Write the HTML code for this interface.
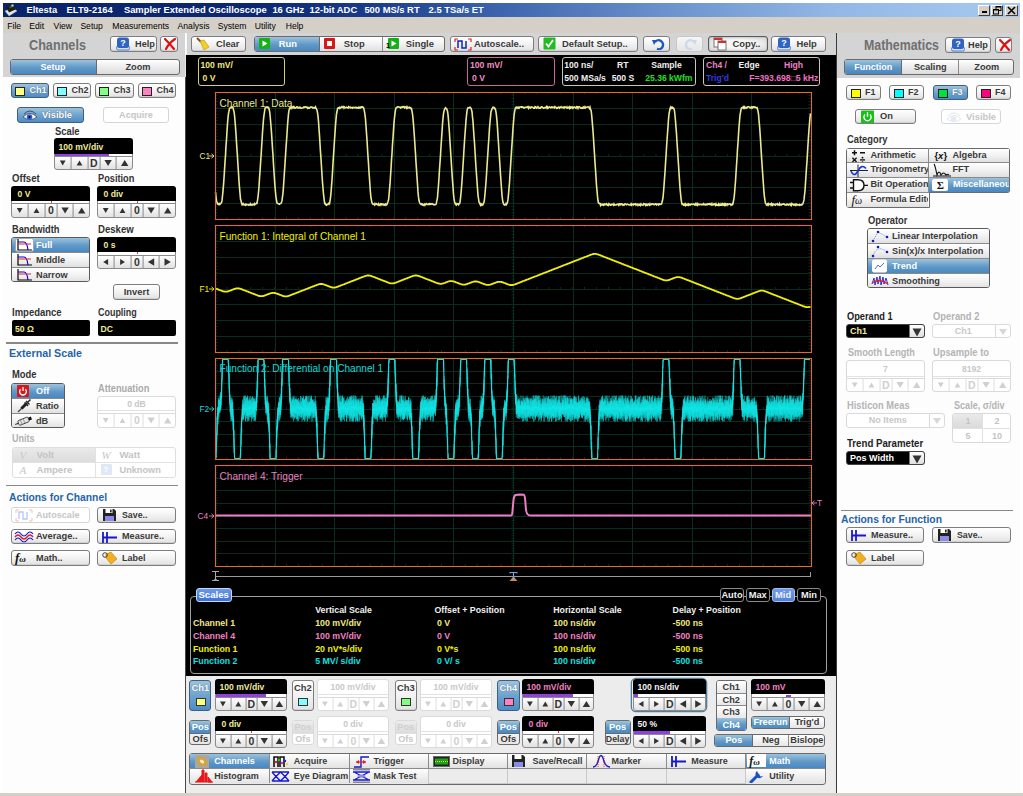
<!DOCTYPE html><html><head><meta charset="utf-8"><style>
*{margin:0;padding:0;box-sizing:content-box}
body{width:1023px;height:796px;overflow:hidden;background:#fff;position:relative;font-family:"Liberation Sans",sans-serif}
div{position:absolute}
.t{white-space:nowrap;line-height:1}
.b,.bs,.bd,.bp{border:1px solid #7d7d7d;border-radius:3px;background:linear-gradient(#ffffff,#f4f4f4 45%,#e2e2e2);overflow:hidden;box-shadow:inset 0 -1px 0 #d0d0d0}
.bs{border-color:#3e5f80;background:linear-gradient(#9cc3dc,#6fa3cf 50%,#4f8dc4);box-shadow:none}
.bs .bl{color:#fff;text-shadow:0 0 1px #456}
.bd{border-color:#d6d6d6;background:#fff;box-shadow:none}
.bd .bl{color:#c6c6c6}
.bp{border-color:#555;box-shadow:0 0 0 1px #bbb}
.bl{white-space:nowrap;font-weight:bold;color:#3a3a3a;position:absolute}
.disp{background:#000;border:1px solid #666;border-radius:3px 3px 0 0}
.dt{font-weight:bold;font-size:8.6px;color:#f2ec9a;white-space:nowrap;position:absolute}
.sp{border:1px solid #8a8a8a;border-top:none;border-radius:0 0 3px 3px;background:linear-gradient(#fff,#e6e6e6);overflow:hidden}
.spc{height:100%;border-right:1px solid #9a9a9a;top:0;text-align:center;color:#3a3a3a}
</style></head><body>
<div style="left:3px;top:3px;width:1017px;height:14px;background:linear-gradient(90deg,#0a246a 0%,#0c2872 25%,#1a3c88 36%,#4068b0 50%,#6a92cc 65%,#94b8e6 82%,#a6caf0 100%)"></div>
<svg style="position:absolute;left:0px;top:0px" width="20" height="18"><path d="M5 11 L13 8 L17 11 L9 16 Z" fill="#e4e8f0" stroke="#9aa" stroke-width="0.5"/><path d="M6 7 L12 5 L15.5 9.5 L9 12.5 Z" fill="#2a1a14"/><path d="M9 6.5 L12 5 L13 7 L10 8.5Z" fill="#1a6a1a"/><rect x="11.5" y="4.5" width="2" height="2" fill="#ddd"/><path d="M6 13 L8 15" stroke="#2a8a2a" stroke-width="1"/></svg>
<div class="t" style="left:26.4px;top:5.40px;font-size:9.4px;font-weight:bold;color:#fff;">Eltesta</div>
<div class="t" style="left:66.6px;top:5.40px;font-size:9.4px;font-weight:bold;color:#fff;">ELT9-2164</div>
<div class="t" style="left:123.9px;top:5.40px;font-size:9.4px;font-weight:bold;color:#fff;">Sampler Extended Oscilloscope</div>
<div class="t" style="left:272.4px;top:5.40px;font-size:9.4px;font-weight:bold;color:#fff;">16 GHz</div>
<div class="t" style="left:309.6px;top:5.40px;font-size:9.4px;font-weight:bold;color:#fff;">12-bit ADC</div>
<div class="t" style="left:364.4px;top:5.40px;font-size:9.4px;font-weight:bold;color:#fff;">500 MS/s RT</div>
<div class="t" style="left:428.6px;top:5.40px;font-size:9.4px;font-weight:bold;color:#fff;">2.5 TSa/s ET</div>
<div style="left:978px;top:5px;width:10px;height:9px;background:#d4d0c8;border:1px solid;border-color:#fff #404040 #404040 #fff"></div>
<div style="left:991px;top:5px;width:10px;height:9px;background:#d4d0c8;border:1px solid;border-color:#fff #404040 #404040 #fff"></div>
<div style="left:1005px;top:5px;width:11px;height:9px;background:#d4d0c8;border:1px solid;border-color:#fff #404040 #404040 #fff"></div>
<div style="left:982px;top:11px;width:5px;height:2px;background:#000"></div>
<svg style="position:absolute;left:993px;top:6px" width="9" height="9"><rect x="3" y="0.5" width="5" height="4" fill="none" stroke="#000" stroke-width="1"/><rect x="0.5" y="3.5" width="5" height="4.5" fill="#d4d0c8" stroke="#000" stroke-width="1"/><rect x="3" y="0" width="5" height="1.5" fill="#000"/><rect x="0" y="3" width="6" height="1.5" fill="#000"/></svg>
<svg style="position:absolute;left:1007px;top:6px" width="9" height="9"><path d="M1 1 L8 8 M8 1 L1 8" stroke="#000" stroke-width="1.6"/></svg>
<div style="left:3px;top:17px;width:1017px;height:16px;background:#d4d0c8"></div>
<div class="t" style="left:7.3px;top:21.70px;font-size:8.6px;font-weight:normal;color:#000;">File</div>
<div class="t" style="left:29.3px;top:21.70px;font-size:8.6px;font-weight:normal;color:#000;">Edit</div>
<div class="t" style="left:53.6px;top:21.70px;font-size:8.6px;font-weight:normal;color:#000;">View</div>
<div class="t" style="left:80.4px;top:21.70px;font-size:8.6px;font-weight:normal;color:#000;">Setup</div>
<div class="t" style="left:112.3px;top:21.70px;font-size:8.6px;font-weight:normal;color:#000;">Measurements</div>
<div class="t" style="left:177.6px;top:21.70px;font-size:8.6px;font-weight:normal;color:#000;">Analysis</div>
<div class="t" style="left:217.8px;top:21.70px;font-size:8.6px;font-weight:normal;color:#000;">System</div>
<div class="t" style="left:254.8px;top:21.70px;font-size:8.6px;font-weight:normal;color:#000;">Utility</div>
<div class="t" style="left:285.7px;top:21.70px;font-size:8.6px;font-weight:normal;color:#000;">Help</div>
<div style="left:0;top:793px;width:1023px;height:3px;background:#d4d0c8"></div>
<div style="left:3px;top:33px;width:182px;height:44px;background:#d4d4d4"></div>
<div style="left:3px;top:77px;width:182px;height:716px;background:#fdfdfd"></div>
<div style="left:185px;top:77px;width:1px;height:716px;background:#484848"></div><div style="left:185px;top:55px;width:1px;height:22px;background:#e4e4e4"></div>
<div class="t" style="left:28.8px;top:37.88px;font-size:14.2px;font-weight:bold;color:#6f6f6f;transform:scaleX(0.892);transform-origin:0 0;">Channels</div>
<div style="left:186px;top:33px;width:651px;height:22px;background:#d4d4d4"></div>
<div style="left:186px;top:33px;width:1px;height:22px;background:#f8f8f8"></div>
<div style="left:837px;top:33px;width:183px;height:45px;background:#d4d4d4"></div>
<div style="left:837px;top:78px;width:183px;height:715px;background:#fdfdfd"></div>
<div style="left:836px;top:33px;width:1px;height:760px;background:#3a3a3a"></div>
<div class="t" style="left:863.8px;top:37.88px;font-size:14.2px;font-weight:bold;color:#6f6f6f;transform:scaleX(0.872);transform-origin:0 0;">Mathematics</div>
<div style="left:186px;top:55px;width:650px;height:621px;background:#000"></div>
<div style="left:186px;top:676px;width:650px;height:117px;background:#ececec"></div>
<div class="b" style="left:110px;top:36px;width:45px;height:14px;"><svg style="position:absolute;left:5px;top:0px" width="15" height="14"><rect x="0.5" y="9" width="13" height="4" rx="1.5" fill="#cfe0f6" stroke="#3a6ac8" stroke-width="0.8"/><rect x="1" y="0.5" width="12" height="10.5" rx="2.5" fill="#2f64c0"/><text x="7" y="8.5" font-family="Liberation Sans" font-weight="bold" font-size="9" fill="#fff" text-anchor="middle">?</text></svg><div class="bl" style="position:absolute;left:24px;top:0;line-height:14px;font-size:9.20px">Help</div></div>
<div class="b" style="left:160px;top:36px;width:16px;height:14px;"><div class="bl" style="line-height:14px;font-size:9.20px;text-align:center;width:100%"><svg style="position:absolute;left:1px;top:0px" width="16" height="14"><path d="M3 2 Q8 7 12 12 M13 2 Q7 6 4 12" stroke="#e01010" stroke-width="2.2" fill="none" stroke-linecap="round"/></svg></div></div>
<div style="left:9.5px;top:59px;width:168px;height:14px;border:1px solid #6a6a6a;border-radius:3px;overflow:hidden;background:linear-gradient(#fff,#ececec 50%,#dcdcdc)"><div style="left:0;top:0;width:85px;height:14px;background:linear-gradient(#9cc3dc,#5f98c8 55%,#4a88c0);border-right:1px solid #6a6a6a"></div><div class="bl" style="left:0;top:0;width:85px;text-align:center;line-height:14px;font-size:9.00px;color:#fff">Setup</div><div class="bl" style="left:86px;top:0;width:83px;text-align:center;line-height:14px;font-size:9.20px">Zoom</div></div>
<div class="bs" style="left:11px;top:83px;width:36px;height:13px;"><div style="left:3px;top:2.5px;width:8px;height:7px;border:1px solid #222;background:#ffff80"></div><div class="bl" style="position:absolute;left:17.5px;top:0;line-height:13px;font-size:9.00px">Ch1</div></div>
<div class="b" style="left:53px;top:83px;width:36px;height:13px;"><div style="left:3px;top:2.5px;width:8px;height:7px;border:1px solid #222;background:#80ffff"></div><div class="bl" style="position:absolute;left:17.5px;top:0;line-height:13px;font-size:9.00px">Ch2</div></div>
<div class="b" style="left:95px;top:83px;width:37px;height:13px;"><div style="left:3px;top:2.5px;width:8px;height:7px;border:1px solid #222;background:#80ff80"></div><div class="bl" style="position:absolute;left:17.5px;top:0;line-height:13px;font-size:9.00px">Ch3</div></div>
<div class="b" style="left:138px;top:83px;width:36px;height:13px;"><div style="left:3px;top:2.5px;width:8px;height:7px;border:1px solid #222;background:#ff80c0"></div><div class="bl" style="position:absolute;left:17.5px;top:0;line-height:13px;font-size:9.00px">Ch4</div></div>
<div class="bs" style="left:17px;top:107px;width:65px;height:14px;"><svg style="position:absolute;left:4px;top:0px" width="16" height="14"><path d="M1 9 Q8 2 15 9 Q8 14 1 9Z" fill="#fff" stroke="#334" stroke-width="0.7"/><circle cx="7.5" cy="9" r="2.8" fill="#2f5fd0"/><circle cx="7.5" cy="9" r="1" fill="#000"/><path d="M2 6 Q8 0 14 6" stroke="#334" stroke-width="0.8" fill="none"/></svg><div class="bl" style="position:absolute;left:24px;top:0;line-height:14px;font-size:9.40px">Visible</div></div>
<div class="bd" style="left:103px;top:107px;width:64px;height:14px;"><div class="bl" style="line-height:14px;font-size:9.10px;text-align:center;width:100%">Acquire</div></div>
<div class="t" style="left:55.3px;top:126.73px;font-size:10.2px;font-weight:bold;color:#333;transform:scaleX(0.923);transform-origin:0 0;">Scale</div>
<div style="left:54px;top:138px;width:79px;height:16px;background:#000;border-radius:3px 3px 0 0"></div>
<div class="dt" style="left:58.5px;top:141.5px;color:#f2ec9a">100 mV/div</div>
<div style="left:54px;top:154px;width:77px;height:3px;background:#fff;border-left:1px solid #8a8a8a;border-right:1px solid #8a8a8a"></div>
<div style="left:55px;top:154px;width:54px;height:2.5px;background:#9040e0"></div>
<div style="left:54px;top:156px;width:77px;height:12px;border:1px solid #8a8a8a;border-radius:0 0 3px 3px;background:linear-gradient(#fff,#f0f0f0 50%,#e2e2e2)"></div>
<svg style="position:absolute;left:54px;top:156px" width="79" height="14"><rect x="16.5" y="1" width="1.2" height="12" fill="#9a9a9a"/><polygon points="5.8,4.5 11.6,4.5 8.7,9.5" fill="#333"/><rect x="33.5" y="1" width="1.2" height="12" fill="#9a9a9a"/><polygon points="22.6,9.5 28.4,9.5 25.5,4.5" fill="#333"/><rect x="45.5" y="1" width="1.2" height="12" fill="#9a9a9a"/><text x="39.8" y="10.8" font-family="Liberation Sans" font-size="10.5" font-weight="bold" text-anchor="middle" fill="#333">D</text><rect x="61.5" y="1" width="1.2" height="12" fill="#9a9a9a"/><polygon points="50.4,3.9 57.8,3.9 54.1,10.1" fill="#333"/><polygon points="67.0,10.1 74.4,10.1 70.7,3.9" fill="#333"/></svg>
<div class="t" style="left:12px;top:174.31px;font-size:10.2px;font-weight:bold;color:#333;transform:scaleX(0.940);transform-origin:0 0;">Offset</div>
<div class="t" style="left:98px;top:174.31px;font-size:10.2px;font-weight:bold;color:#333;transform:scaleX(0.905);transform-origin:0 0;">Position</div>
<div style="left:11px;top:186px;width:79px;height:15px;background:#000;border-radius:3px 3px 0 0"></div>
<div class="dt" style="left:17.5px;top:189.0px;color:#f2ec9a">0 V</div>
<div style="left:11px;top:201px;width:77px;height:3px;background:#fff;border-left:1px solid #8a8a8a;border-right:1px solid #8a8a8a"></div>
<div style="left:51px;top:201px;width:1px;height:2px;background:#e04040"></div>
<div style="left:11px;top:203px;width:77px;height:13px;border:1px solid #8a8a8a;border-radius:0 0 3px 3px;background:linear-gradient(#fff,#f0f0f0 50%,#e2e2e2)"></div>
<svg style="position:absolute;left:11px;top:203px" width="79" height="15"><rect x="16.5" y="1" width="1.2" height="13" fill="#9a9a9a"/><polygon points="5.8,5.0 11.6,5.0 8.7,10.0" fill="#333"/><rect x="33.5" y="1" width="1.2" height="13" fill="#9a9a9a"/><polygon points="22.6,10.0 28.4,10.0 25.5,5.0" fill="#333"/><rect x="45.5" y="1" width="1.2" height="13" fill="#9a9a9a"/><text x="39.8" y="11.3" font-family="Liberation Sans" font-size="10.5" font-weight="bold" text-anchor="middle" fill="#333">0</text><rect x="61.5" y="1" width="1.2" height="13" fill="#9a9a9a"/><polygon points="50.4,4.4 57.8,4.4 54.1,10.6" fill="#333"/><polygon points="67.0,10.6 74.4,10.6 70.7,4.4" fill="#333"/></svg>
<div style="left:97px;top:186px;width:79px;height:15px;background:#000;border-radius:3px 3px 0 0"></div>
<div class="dt" style="left:103.5px;top:189.0px;color:#f2ec9a">0 div</div>
<div style="left:97px;top:201px;width:77px;height:3px;background:#fff;border-left:1px solid #8a8a8a;border-right:1px solid #8a8a8a"></div>
<div style="left:137px;top:201px;width:1px;height:2px;background:#e04040"></div>
<div style="left:97px;top:203px;width:77px;height:13px;border:1px solid #8a8a8a;border-radius:0 0 3px 3px;background:linear-gradient(#fff,#f0f0f0 50%,#e2e2e2)"></div>
<svg style="position:absolute;left:97px;top:203px" width="79" height="15"><rect x="16.5" y="1" width="1.2" height="13" fill="#9a9a9a"/><polygon points="5.8,5.0 11.6,5.0 8.7,10.0" fill="#333"/><rect x="33.5" y="1" width="1.2" height="13" fill="#9a9a9a"/><polygon points="22.6,10.0 28.4,10.0 25.5,5.0" fill="#333"/><rect x="45.5" y="1" width="1.2" height="13" fill="#9a9a9a"/><text x="39.8" y="11.3" font-family="Liberation Sans" font-size="10.5" font-weight="bold" text-anchor="middle" fill="#333">0</text><rect x="61.5" y="1" width="1.2" height="13" fill="#9a9a9a"/><polygon points="50.4,4.4 57.8,4.4 54.1,10.6" fill="#333"/><polygon points="67.0,10.6 74.4,10.6 70.7,4.4" fill="#333"/></svg>
<div class="t" style="left:12px;top:225.17px;font-size:10.2px;font-weight:bold;color:#333;transform:scaleX(0.911);transform-origin:0 0;">Bandwidth</div>
<div class="t" style="left:98px;top:225.17px;font-size:10.2px;font-weight:bold;color:#333;transform:scaleX(0.942);transform-origin:0 0;">Deskew</div>
<div style="left:11px;top:237px;width:77px;height:43.3px;border:1px solid #5a5a5a;border-radius:3px;overflow:hidden;background:#fff"><div style="left:0;top:0px;width:77px;height:14.1px;background:linear-gradient(#9cc3dc,#5f98c8 55%,#4a88c0);border-top:none"><svg style="position:absolute;left:3px;top:0px" width="20" height="14"><rect x="0.5" y="0.5" width="18" height="13" rx="2" fill="#fff" stroke="#9ab"/><path d="M3 1 V12 H17" stroke="#000" stroke-width="1.2" fill="none"/><path d="M3 4 H9 Q12 4 13 12" stroke="#0000e0" stroke-width="1.2" fill="none"/><path d="M3 6 H16" stroke="#e02020" stroke-width="1"/></svg><div class="bl" style="left:24px;top:0;line-height:14.1px;font-size:9.20px;color:#fff">Full</div></div><div style="left:0;top:14.1px;width:77px;height:14.1px;background:linear-gradient(#fff,#f2f2f2 50%,#e0e0e0);border-top:1px solid #8a8a8a"><svg style="position:absolute;left:3px;top:0px" width="20" height="14"><path d="M3 1 V12 H17" stroke="#000" stroke-width="1.2" fill="none"/><path d="M3 4 H9 Q12 4 13 12" stroke="#0000e0" stroke-width="1.2" fill="none"/><path d="M3 6 H16" stroke="#e02020" stroke-width="1"/></svg><div class="bl" style="left:24px;top:0;line-height:14.1px;font-size:9.20px;color:#3a3a3a">Middle</div></div><div style="left:0;top:29.2px;width:77px;height:14.1px;background:linear-gradient(#fff,#f2f2f2 50%,#e0e0e0);border-top:1px solid #8a8a8a"><svg style="position:absolute;left:3px;top:0px" width="20" height="14"><path d="M3 1 V12 H17" stroke="#000" stroke-width="1.2" fill="none"/><path d="M3 4 H9 Q12 4 13 12" stroke="#0000e0" stroke-width="1.2" fill="none"/><path d="M3 6 H16" stroke="#e02020" stroke-width="1"/></svg><div class="bl" style="left:24px;top:0;line-height:14.1px;font-size:9.20px;color:#3a3a3a">Narrow</div></div></div>
<div style="left:97px;top:237px;width:79px;height:15px;background:#000;border-radius:3px 3px 0 0"></div>
<div class="dt" style="left:103.5px;top:240.0px;color:#f2ec9a">0 s</div>
<div style="left:97px;top:252px;width:77px;height:3px;background:#fff;border-left:1px solid #8a8a8a;border-right:1px solid #8a8a8a"></div>
<div style="left:137px;top:252px;width:1px;height:2px;background:#e04040"></div>
<div style="left:97px;top:255px;width:77px;height:12px;border:1px solid #8a8a8a;border-radius:0 0 3px 3px;background:linear-gradient(#fff,#f0f0f0 50%,#e2e2e2)"></div>
<svg style="position:absolute;left:97px;top:255px" width="79" height="14"><rect x="16.5" y="1" width="1.2" height="12" fill="#9a9a9a"/><polygon points="11.1,4.1 11.1,9.9 6.2,7.0" fill="#333"/><rect x="33.5" y="1" width="1.2" height="12" fill="#9a9a9a"/><polygon points="23.1,4.1 23.1,9.9 28.0,7.0" fill="#333"/><rect x="45.5" y="1" width="1.2" height="12" fill="#9a9a9a"/><text x="39.8" y="10.8" font-family="Liberation Sans" font-size="10.5" font-weight="bold" text-anchor="middle" fill="#333">0</text><rect x="61.5" y="1" width="1.2" height="12" fill="#9a9a9a"/><polygon points="57.2,3.3 57.2,10.7 50.9,7.0" fill="#333"/><polygon points="67.5,3.3 67.5,10.7 73.8,7.0" fill="#333"/></svg>
<div class="b" style="left:113px;top:284px;width:45px;height:14px;"><div class="bl" style="line-height:14px;font-size:9.40px;text-align:center;width:100%">Invert</div></div>
<div class="t" style="left:12px;top:308.27px;font-size:10.2px;font-weight:bold;color:#333;transform:scaleX(0.933);transform-origin:0 0;">Impedance</div>
<div class="t" style="left:98px;top:308.27px;font-size:10.2px;font-weight:bold;color:#333;transform:scaleX(0.878);transform-origin:0 0;">Coupling</div>
<div style="left:11.5px;top:320.3px;width:78.5px;height:15.5px;background:#000;border-radius:2px"></div>
<div class="dt" style="left:15px;top:323.5px">50 Ω</div>
<div style="left:97.5px;top:320.3px;width:78.5px;height:15.5px;background:#000;border-radius:2px"></div>
<div class="dt" style="left:100.5px;top:323.5px">DC</div>
<div style="left:6.4px;top:342px;width:172px;height:1.5px;background:#888"></div>
<div class="t" style="left:9px;top:347.69px;font-size:11px;font-weight:bold;color:#1f64aa;transform:scaleX(0.971);transform-origin:0 0;">External Scale</div>
<div class="t" style="left:12px;top:370.23px;font-size:10.2px;font-weight:bold;color:#333;transform:scaleX(0.920);transform-origin:0 0;">Mode</div>
<div style="left:11px;top:383px;width:52px;height:43.3px;border:1px solid #5a5a5a;border-radius:3px;overflow:hidden;background:#fff"><div style="left:0;top:0px;width:52px;height:14.1px;background:linear-gradient(#9cc3dc,#5f98c8 55%,#4a88c0);border-top:none"><svg style="position:absolute;left:5px;top:1px" width="13" height="13"><rect x="0" y="0" width="12" height="12" rx="1" fill="#d81818"/><path d="M3.6 4.2 A3.4 3.4 0 1 0 8.4 4.2" stroke="#fff" stroke-width="1.3" fill="none"/><path d="M6 2 V6" stroke="#fff" stroke-width="1.3"/></svg><div class="bl" style="left:24px;top:0;line-height:14.1px;font-size:9.20px;color:#fff">Off</div></div><div style="left:0;top:14.1px;width:52px;height:14.1px;background:linear-gradient(#fff,#f2f2f2 50%,#e0e0e0);border-top:1px solid #8a8a8a"><svg style="position:absolute;left:4px;top:0px" width="16" height="14"><path d="M2 13 L6 9" stroke="#444" stroke-width="1.3"/><path d="M5.5 9.5 L11 4" stroke="#222" stroke-width="3"/><path d="M8.5 3.5 L12 7 M10 2 L13.5 5.5" stroke="#222" stroke-width="1.3"/><path d="M11.5 3.5 L14.5 0.5" stroke="#333" stroke-width="1.6"/></svg><div class="bl" style="left:24px;top:0;line-height:14.1px;font-size:9.20px;color:#3a3a3a">Ratio</div></div><div style="left:0;top:29.2px;width:52px;height:14.1px;background:linear-gradient(#fff,#f2f2f2 50%,#e0e0e0);border-top:1px solid #8a8a8a"><svg style="position:absolute;left:2px;top:0px" width="20" height="14"><g transform="rotate(-22 10 7)"><rect x="4" y="4.5" width="11" height="5" rx="1.2" fill="#e4e4e4" stroke="#333" stroke-width="0.8"/><rect x="15" y="5.5" width="3" height="3" fill="#111"/><path d="M0.5 7 H4" stroke="#333" stroke-width="1"/><path d="M7 4.5 V9.5 M10 4.5 V9.5" stroke="#777" stroke-width="0.6"/></g></svg><div class="bl" style="left:24px;top:0;line-height:14.1px;font-size:9.20px;color:#3a3a3a">dB</div></div></div>
<div class="t" style="left:98px;top:384.06px;font-size:10.2px;font-weight:bold;color:#aaa;transform:scaleX(0.906);transform-origin:0 0;">Attenuation</div>
<div style="left:97px;top:396px;width:77px;height:16px;border:1px solid #dadada;border-radius:3px 3px 0 0;background:#fff"></div>
<div class="dt" style="left:97px;width:79px;text-align:center;top:398.5px;color:#c8c8c8">0 dB</div>
<div style="left:98px;top:410px;width:77px;height:1px;background:#e2e2e2"></div>
<div style="left:97px;top:413px;width:77px;height:13px;border:1px solid #dadada;border-radius:0 0 3px 3px;background:#fff"></div>
<svg style="position:absolute;left:97px;top:413px" width="79" height="15"><rect x="16.5" y="1" width="1.2" height="13" fill="#e4e4e4"/><polygon points="5.8,5.0 11.6,5.0 8.7,10.0" fill="#d0d0d0"/><rect x="33.5" y="1" width="1.2" height="13" fill="#e4e4e4"/><polygon points="22.6,10.0 28.4,10.0 25.5,5.0" fill="#d0d0d0"/><rect x="45.5" y="1" width="1.2" height="13" fill="#e4e4e4"/><text x="39.8" y="11.3" font-family="Liberation Sans" font-size="10.5" font-weight="bold" text-anchor="middle" fill="#d0d0d0">0</text><rect x="61.5" y="1" width="1.2" height="13" fill="#e4e4e4"/><polygon points="50.4,4.4 57.8,4.4 54.1,10.6" fill="#d0d0d0"/><polygon points="67.0,10.6 74.4,10.6 70.7,4.4" fill="#d0d0d0"/></svg>
<div class="t" style="left:12px;top:434.39px;font-size:10.2px;font-weight:bold;color:#b0b0b0;transform:scaleX(0.882);transform-origin:0 0;">Units</div>
<div style="left:11.5px;top:446.6px;width:162.5px;height:29px;border:1px solid #dedede;border-radius:3px;background:#fff;overflow:hidden"><div style="left:0;top:0;width:82px;height:14.5px;background:linear-gradient(#eaeaea,#dcdcdc)"></div><div style="left:82px;top:0;width:1px;height:29px;background:#e2e2e2"></div><div style="left:0;top:14.5px;width:163px;height:1px;background:#e2e2e2"></div><div style="left:7px;top:1px;font:italic 11px 'Liberation Serif';color:#c8c8c8">V</div><div class="bl" style="left:24px;top:0;line-height:14.5px;font-size:9.70px;color:#c4c4c4">Volt</div><div style="left:89px;top:1px;font:italic 11px 'Liberation Serif';color:#c8c8c8">W</div><div class="bl" style="left:107px;top:0;line-height:14.5px;font-size:9.70px;color:#c4c4c4">Watt</div><div style="left:7px;top:16px;font:italic 11px 'Liberation Serif';color:#c8c8c8">A</div><div class="bl" style="left:24px;top:15px;line-height:14px;font-size:9.60px;color:#c4c4c4">Ampere</div><div style="left:88px;top:16.5px;width:11px;height:11px;background:#dfe8f6;border-radius:1px;color:#fff;font:bold 8px 'Liberation Sans';text-align:center;line-height:11px">?</div><div class="bl" style="left:107px;top:15px;line-height:14px;font-size:9.20px;color:#c4c4c4">Unknown</div></div>
<div style="left:6.4px;top:484.5px;width:172px;height:1.5px;background:#888"></div>
<div class="t" style="left:9px;top:491.79px;font-size:11px;font-weight:bold;color:#1f64aa;transform:scaleX(0.938);transform-origin:0 0;">Actions for Channel</div>
<div class="bd" style="left:11px;top:507px;width:77px;height:14px;"><svg style="position:absolute;left:3px;top:1px" width="18" height="13"><path d="M4 10 V3 H8 V10 H12 V3" stroke="#b8c8f0" stroke-width="1.3" fill="none"/><path d="M1 4 V1 H4 M14 1 H17 V4 M1 9 V12 H4 M14 12 H17 V9" stroke="#f4c0b0" stroke-width="1" fill="none"/></svg><div class="bl" style="position:absolute;left:24px;top:0;line-height:14px;font-size:9.10px">Autoscale</div></div>
<div class="b" style="left:97px;top:507px;width:77px;height:14px;"><svg style="position:absolute;left:4px;top:0px" width="15" height="14"><path d="M1 1 H12 L14 3 V13 H1Z" fill="#222"/><rect x="3.5" y="1" width="7" height="4" fill="#fff"/><rect x="8" y="1.6" width="1.6" height="2.8" fill="#222"/><rect x="3" y="8" width="9" height="5" fill="#8a8ae8"/></svg><div class="bl" style="position:absolute;left:24px;top:0;line-height:14px;font-size:8.80px">Save..</div></div>
<div class="b" style="left:11px;top:529px;width:77px;height:13px;"><svg style="position:absolute;left:2px;top:0px" width="20" height="14"><path d="M1 4 Q4 0 7 4 T13 4 T19 4" stroke="#1020e0" stroke-width="1.2" fill="none"/><path d="M1 7 Q4 3 7 7 T13 7 T19 7" stroke="#e02020" stroke-width="1.4" fill="none"/><path d="M1 10 Q4 6 7 10 T13 10 T19 10" stroke="#1020e0" stroke-width="1.2" fill="none"/></svg><div class="bl" style="position:absolute;left:24px;top:0;line-height:13px;font-size:9.30px">Average..</div></div>
<div class="b" style="left:97px;top:529px;width:77px;height:13px;"><svg style="position:absolute;left:3px;top:1px" width="18" height="13"><path d="M2 1 V12 M6 1 V12 M2 6.5 H16" stroke="#1818c8" stroke-width="1.8" fill="none"/></svg><div class="bl" style="position:absolute;left:24px;top:0;line-height:13px;font-size:9.10px">Measure..</div></div>
<div class="b" style="left:11px;top:550px;width:77px;height:14px;"><div style="left:3px;top:-1px;font:italic bold 13px 'Liberation Serif';color:#111">f<span style="font-size:9px;font-style:italic">ω</span></div><div class="bl" style="position:absolute;left:24px;top:0;line-height:14px;font-size:9.20px">Math..</div></div>
<div class="b" style="left:97px;top:550px;width:77px;height:14px;"><svg style="position:absolute;left:3px;top:0px" width="18" height="14"><path d="M5 3 L10 1 L16 8 L10 13 L5 7Z" fill="#f0b020" stroke="#c08010" stroke-width="0.6"/><circle cx="4" cy="4" r="2.3" fill="none" stroke="#333" stroke-width="0.9"/></svg><div class="bl" style="position:absolute;left:24px;top:0;line-height:14px;font-size:9.00px">Label</div></div>
<div class="b" style="left:191px;top:36px;width:53px;height:14px;"><svg style="position:absolute;left:3px;top:0px" width="16" height="14"><path d="M2 1 L6 5" stroke="#8a4a10" stroke-width="2"/><path d="M5 4 L9 3 L14 10 L9 13 Z" fill="#f0d020" stroke="#c09010" stroke-width="0.6"/></svg><div class="bl" style="position:absolute;left:24px;top:0;line-height:14px;font-size:9.40px">Clear</div></div>
<div style="left:253.8px;top:36px;width:189px;height:14px;border:1px solid #6a6a6a;border-radius:3px;overflow:hidden;background:linear-gradient(#fff,#f2f2f2 50%,#e0e0e0)"><div style="left:0;top:0;width:64px;height:14px;background:linear-gradient(#9cc3dc,#5f98c8 55%,#4a88c0);border-right:1px solid #6a6a6a"></div><div style="left:127px;top:0;width:1px;height:14px;background:#8a8a8a"></div><svg style="position:absolute;left:4px;top:1px" width="12" height="11"><rect width="11" height="11" rx="1" fill="#18b018"/><path d="M3.5 2.5 L8.5 5.5 L3.5 8.5Z" fill="#fff"/></svg><div class="bl" style="left:24px;top:0;line-height:14px;font-size:9.40px;color:#fff">Run</div><svg style="position:absolute;left:69px;top:1px" width="12" height="11"><rect width="11" height="11" rx="1" fill="#d81818"/><rect x="3" y="3" width="5" height="5" fill="#fff"/></svg><div class="bl" style="left:89px;top:0;line-height:14px;font-size:9.40px">Stop</div><svg style="position:absolute;left:131px;top:1px" width="13" height="11"><rect x="2" width="11" height="11" rx="1" fill="#18b018"/><path d="M5.5 2.5 L10.5 5.5 L5.5 8.5Z" fill="#fff"/><text x="0" y="10" font-size="7" font-family="Liberation Sans" font-weight="bold" fill="#000">1</text></svg><div class="bl" style="left:151px;top:0;line-height:14px;font-size:9.40px">Single</div></div>
<div class="b" style="left:450px;top:36px;width:82px;height:14px;"><svg style="position:absolute;left:3px;top:1px" width="18" height="13"><path d="M4 10 V3 H8 V10 H12 V3" stroke="#1020d0" stroke-width="1.5" fill="none"/><path d="M1 4 V1 H4 M14 1 H17 V4 M1 9 V12 H4 M14 12 H17 V9" stroke="#e02020" stroke-width="1.2" fill="none"/></svg><div class="bl" style="position:absolute;left:23px;top:0;line-height:14px;font-size:9.40px">Autoscale..</div></div>
<div class="b" style="left:538px;top:36px;width:98px;height:14px;"><svg style="position:absolute;left:4px;top:0px" width="14" height="14"><rect x="0.5" y="0.5" width="12" height="12" rx="1" fill="#22bb22"/><path d="M3 6.5 L5.5 9.5 L10 3" stroke="#fff" stroke-width="1.8" fill="none"/></svg><div class="bl" style="position:absolute;left:23px;top:0;line-height:14px;font-size:9.40px">Default Setup..</div></div>
<div class="b" style="left:643px;top:36px;width:25px;height:14px;"><div class="bl" style="line-height:14px;font-size:9.20px;text-align:center;width:100%"><svg style="position:absolute;left:7px;top:1px" width="14" height="12"><path d="M4 4 A4.5 4.5 0 1 1 6 11" stroke="#1a58c8" stroke-width="2.4" fill="none"/><path d="M1 2 L6 2 L3 7Z" fill="#1a58c8"/></svg></div></div>
<div class="bd" style="left:676px;top:36px;width:25px;height:14px;border-color:#c8c8c8;background:linear-gradient(#f6f6f6,#e6e6e6)"><div class="bl" style="line-height:14px;font-size:9.20px;text-align:center;width:100%"><svg style="position:absolute;left:7px;top:1px" width="14" height="12"><path d="M10 4 A4.5 4.5 0 1 0 8 11" stroke="#cdd8ea" stroke-width="2.4" fill="none"/><path d="M13 2 L8 2 L11 7Z" fill="#cdd8ea"/></svg></div></div>
<div class="bp" style="left:708px;top:36px;width:58px;height:14px;border-color:#5a5a5a;background:radial-gradient(ellipse at center,#f8f8f8 35%,#d4d4d4 100%);box-shadow:inset 0 0 2px #999"><svg style="position:absolute;left:4px;top:0px" width="14" height="14"><rect x="1" y="1" width="8" height="9" fill="#fff" stroke="#555" stroke-width="0.8"/><rect x="1" y="1" width="8" height="2" fill="#d03030"/><rect x="5" y="4" width="8" height="9" fill="#fff" stroke="#555" stroke-width="0.8"/><rect x="5" y="4" width="8" height="2" fill="#d03030"/></svg><div class="bl" style="position:absolute;left:23.5px;top:0;line-height:14px;font-size:9.40px">Copy..</div></div>
<div class="b" style="left:771px;top:36px;width:53px;height:14px;"><svg style="position:absolute;left:5px;top:0px" width="15" height="14"><rect x="0.5" y="9" width="13" height="4" rx="1.5" fill="#cfe0f6" stroke="#3a6ac8" stroke-width="0.8"/><rect x="1" y="0.5" width="12" height="10.5" rx="2.5" fill="#2f64c0"/><text x="7" y="8.5" font-family="Liberation Sans" font-weight="bold" font-size="9" fill="#fff" text-anchor="middle">?</text></svg><div class="bl" style="position:absolute;left:24.5px;top:0;line-height:14px;font-size:9.40px">Help</div></div>
<svg style="position:absolute;left:186px;top:55px" width="650" height="621" viewBox="186 55 650 621"><line x1="275.5" y1="92" x2="275.5" y2="219" stroke="#082c1e" stroke-width="1"/><line x1="334.5" y1="92" x2="334.5" y2="219" stroke="#082c1e" stroke-width="1"/><line x1="394.5" y1="92" x2="394.5" y2="219" stroke="#082c1e" stroke-width="1"/><line x1="453.5" y1="92" x2="453.5" y2="219" stroke="#082c1e" stroke-width="1"/><line x1="513.5" y1="92" x2="513.5" y2="219" stroke="#082c1e" stroke-width="1"/><line x1="573.5" y1="92" x2="573.5" y2="219" stroke="#082c1e" stroke-width="1"/><line x1="632.5" y1="92" x2="632.5" y2="219" stroke="#082c1e" stroke-width="1"/><line x1="692.5" y1="92" x2="692.5" y2="219" stroke="#082c1e" stroke-width="1"/><line x1="751.5" y1="92" x2="751.5" y2="219" stroke="#082c1e" stroke-width="1"/><line x1="215" y1="108.5" x2="811" y2="108.5" stroke="#082c1e" stroke-width="1"/><line x1="215" y1="124.5" x2="811" y2="124.5" stroke="#082c1e" stroke-width="1"/><line x1="215" y1="140.5" x2="811" y2="140.5" stroke="#082c1e" stroke-width="1"/><line x1="215" y1="156.5" x2="811" y2="156.5" stroke="#082c1e" stroke-width="1"/><line x1="215" y1="171.5" x2="811" y2="171.5" stroke="#082c1e" stroke-width="1"/><line x1="215" y1="187.5" x2="811" y2="187.5" stroke="#082c1e" stroke-width="1"/><line x1="215" y1="203.5" x2="811" y2="203.5" stroke="#082c1e" stroke-width="1"/><line x1="226.9" y1="154.0" x2="226.9" y2="157.0" stroke="#082c1e" stroke-width="1"/><line x1="226.9" y1="92" x2="226.9" y2="94" stroke="#082c1e" stroke-width="1"/><line x1="226.9" y1="217" x2="226.9" y2="219" stroke="#082c1e" stroke-width="1"/><line x1="238.8" y1="154.0" x2="238.8" y2="157.0" stroke="#082c1e" stroke-width="1"/><line x1="238.8" y1="92" x2="238.8" y2="94" stroke="#082c1e" stroke-width="1"/><line x1="238.8" y1="217" x2="238.8" y2="219" stroke="#082c1e" stroke-width="1"/><line x1="250.8" y1="154.0" x2="250.8" y2="157.0" stroke="#082c1e" stroke-width="1"/><line x1="250.8" y1="92" x2="250.8" y2="94" stroke="#082c1e" stroke-width="1"/><line x1="250.8" y1="217" x2="250.8" y2="219" stroke="#082c1e" stroke-width="1"/><line x1="262.7" y1="154.0" x2="262.7" y2="157.0" stroke="#082c1e" stroke-width="1"/><line x1="262.7" y1="92" x2="262.7" y2="94" stroke="#082c1e" stroke-width="1"/><line x1="262.7" y1="217" x2="262.7" y2="219" stroke="#082c1e" stroke-width="1"/><line x1="274.6" y1="154.0" x2="274.6" y2="157.0" stroke="#082c1e" stroke-width="1"/><line x1="274.6" y1="92" x2="274.6" y2="94" stroke="#082c1e" stroke-width="1"/><line x1="274.6" y1="217" x2="274.6" y2="219" stroke="#082c1e" stroke-width="1"/><line x1="286.5" y1="154.0" x2="286.5" y2="157.0" stroke="#082c1e" stroke-width="1"/><line x1="286.5" y1="92" x2="286.5" y2="94" stroke="#082c1e" stroke-width="1"/><line x1="286.5" y1="217" x2="286.5" y2="219" stroke="#082c1e" stroke-width="1"/><line x1="298.4" y1="154.0" x2="298.4" y2="157.0" stroke="#082c1e" stroke-width="1"/><line x1="298.4" y1="92" x2="298.4" y2="94" stroke="#082c1e" stroke-width="1"/><line x1="298.4" y1="217" x2="298.4" y2="219" stroke="#082c1e" stroke-width="1"/><line x1="310.4" y1="154.0" x2="310.4" y2="157.0" stroke="#082c1e" stroke-width="1"/><line x1="310.4" y1="92" x2="310.4" y2="94" stroke="#082c1e" stroke-width="1"/><line x1="310.4" y1="217" x2="310.4" y2="219" stroke="#082c1e" stroke-width="1"/><line x1="322.3" y1="154.0" x2="322.3" y2="157.0" stroke="#082c1e" stroke-width="1"/><line x1="322.3" y1="92" x2="322.3" y2="94" stroke="#082c1e" stroke-width="1"/><line x1="322.3" y1="217" x2="322.3" y2="219" stroke="#082c1e" stroke-width="1"/><line x1="334.2" y1="154.0" x2="334.2" y2="157.0" stroke="#082c1e" stroke-width="1"/><line x1="334.2" y1="92" x2="334.2" y2="94" stroke="#082c1e" stroke-width="1"/><line x1="334.2" y1="217" x2="334.2" y2="219" stroke="#082c1e" stroke-width="1"/><line x1="346.1" y1="154.0" x2="346.1" y2="157.0" stroke="#082c1e" stroke-width="1"/><line x1="346.1" y1="92" x2="346.1" y2="94" stroke="#082c1e" stroke-width="1"/><line x1="346.1" y1="217" x2="346.1" y2="219" stroke="#082c1e" stroke-width="1"/><line x1="358.0" y1="154.0" x2="358.0" y2="157.0" stroke="#082c1e" stroke-width="1"/><line x1="358.0" y1="92" x2="358.0" y2="94" stroke="#082c1e" stroke-width="1"/><line x1="358.0" y1="217" x2="358.0" y2="219" stroke="#082c1e" stroke-width="1"/><line x1="370.0" y1="154.0" x2="370.0" y2="157.0" stroke="#082c1e" stroke-width="1"/><line x1="370.0" y1="92" x2="370.0" y2="94" stroke="#082c1e" stroke-width="1"/><line x1="370.0" y1="217" x2="370.0" y2="219" stroke="#082c1e" stroke-width="1"/><line x1="381.9" y1="154.0" x2="381.9" y2="157.0" stroke="#082c1e" stroke-width="1"/><line x1="381.9" y1="92" x2="381.9" y2="94" stroke="#082c1e" stroke-width="1"/><line x1="381.9" y1="217" x2="381.9" y2="219" stroke="#082c1e" stroke-width="1"/><line x1="393.8" y1="154.0" x2="393.8" y2="157.0" stroke="#082c1e" stroke-width="1"/><line x1="393.8" y1="92" x2="393.8" y2="94" stroke="#082c1e" stroke-width="1"/><line x1="393.8" y1="217" x2="393.8" y2="219" stroke="#082c1e" stroke-width="1"/><line x1="405.7" y1="154.0" x2="405.7" y2="157.0" stroke="#082c1e" stroke-width="1"/><line x1="405.7" y1="92" x2="405.7" y2="94" stroke="#082c1e" stroke-width="1"/><line x1="405.7" y1="217" x2="405.7" y2="219" stroke="#082c1e" stroke-width="1"/><line x1="417.6" y1="154.0" x2="417.6" y2="157.0" stroke="#082c1e" stroke-width="1"/><line x1="417.6" y1="92" x2="417.6" y2="94" stroke="#082c1e" stroke-width="1"/><line x1="417.6" y1="217" x2="417.6" y2="219" stroke="#082c1e" stroke-width="1"/><line x1="429.6" y1="154.0" x2="429.6" y2="157.0" stroke="#082c1e" stroke-width="1"/><line x1="429.6" y1="92" x2="429.6" y2="94" stroke="#082c1e" stroke-width="1"/><line x1="429.6" y1="217" x2="429.6" y2="219" stroke="#082c1e" stroke-width="1"/><line x1="441.5" y1="154.0" x2="441.5" y2="157.0" stroke="#082c1e" stroke-width="1"/><line x1="441.5" y1="92" x2="441.5" y2="94" stroke="#082c1e" stroke-width="1"/><line x1="441.5" y1="217" x2="441.5" y2="219" stroke="#082c1e" stroke-width="1"/><line x1="453.4" y1="154.0" x2="453.4" y2="157.0" stroke="#082c1e" stroke-width="1"/><line x1="453.4" y1="92" x2="453.4" y2="94" stroke="#082c1e" stroke-width="1"/><line x1="453.4" y1="217" x2="453.4" y2="219" stroke="#082c1e" stroke-width="1"/><line x1="465.3" y1="154.0" x2="465.3" y2="157.0" stroke="#082c1e" stroke-width="1"/><line x1="465.3" y1="92" x2="465.3" y2="94" stroke="#082c1e" stroke-width="1"/><line x1="465.3" y1="217" x2="465.3" y2="219" stroke="#082c1e" stroke-width="1"/><line x1="477.2" y1="154.0" x2="477.2" y2="157.0" stroke="#082c1e" stroke-width="1"/><line x1="477.2" y1="92" x2="477.2" y2="94" stroke="#082c1e" stroke-width="1"/><line x1="477.2" y1="217" x2="477.2" y2="219" stroke="#082c1e" stroke-width="1"/><line x1="489.2" y1="154.0" x2="489.2" y2="157.0" stroke="#082c1e" stroke-width="1"/><line x1="489.2" y1="92" x2="489.2" y2="94" stroke="#082c1e" stroke-width="1"/><line x1="489.2" y1="217" x2="489.2" y2="219" stroke="#082c1e" stroke-width="1"/><line x1="501.1" y1="154.0" x2="501.1" y2="157.0" stroke="#082c1e" stroke-width="1"/><line x1="501.1" y1="92" x2="501.1" y2="94" stroke="#082c1e" stroke-width="1"/><line x1="501.1" y1="217" x2="501.1" y2="219" stroke="#082c1e" stroke-width="1"/><line x1="513.0" y1="154.0" x2="513.0" y2="157.0" stroke="#082c1e" stroke-width="1"/><line x1="513.0" y1="92" x2="513.0" y2="94" stroke="#082c1e" stroke-width="1"/><line x1="513.0" y1="217" x2="513.0" y2="219" stroke="#082c1e" stroke-width="1"/><line x1="524.9" y1="154.0" x2="524.9" y2="157.0" stroke="#082c1e" stroke-width="1"/><line x1="524.9" y1="92" x2="524.9" y2="94" stroke="#082c1e" stroke-width="1"/><line x1="524.9" y1="217" x2="524.9" y2="219" stroke="#082c1e" stroke-width="1"/><line x1="536.8" y1="154.0" x2="536.8" y2="157.0" stroke="#082c1e" stroke-width="1"/><line x1="536.8" y1="92" x2="536.8" y2="94" stroke="#082c1e" stroke-width="1"/><line x1="536.8" y1="217" x2="536.8" y2="219" stroke="#082c1e" stroke-width="1"/><line x1="548.8" y1="154.0" x2="548.8" y2="157.0" stroke="#082c1e" stroke-width="1"/><line x1="548.8" y1="92" x2="548.8" y2="94" stroke="#082c1e" stroke-width="1"/><line x1="548.8" y1="217" x2="548.8" y2="219" stroke="#082c1e" stroke-width="1"/><line x1="560.7" y1="154.0" x2="560.7" y2="157.0" stroke="#082c1e" stroke-width="1"/><line x1="560.7" y1="92" x2="560.7" y2="94" stroke="#082c1e" stroke-width="1"/><line x1="560.7" y1="217" x2="560.7" y2="219" stroke="#082c1e" stroke-width="1"/><line x1="572.6" y1="154.0" x2="572.6" y2="157.0" stroke="#082c1e" stroke-width="1"/><line x1="572.6" y1="92" x2="572.6" y2="94" stroke="#082c1e" stroke-width="1"/><line x1="572.6" y1="217" x2="572.6" y2="219" stroke="#082c1e" stroke-width="1"/><line x1="584.5" y1="154.0" x2="584.5" y2="157.0" stroke="#082c1e" stroke-width="1"/><line x1="584.5" y1="92" x2="584.5" y2="94" stroke="#082c1e" stroke-width="1"/><line x1="584.5" y1="217" x2="584.5" y2="219" stroke="#082c1e" stroke-width="1"/><line x1="596.4" y1="154.0" x2="596.4" y2="157.0" stroke="#082c1e" stroke-width="1"/><line x1="596.4" y1="92" x2="596.4" y2="94" stroke="#082c1e" stroke-width="1"/><line x1="596.4" y1="217" x2="596.4" y2="219" stroke="#082c1e" stroke-width="1"/><line x1="608.4" y1="154.0" x2="608.4" y2="157.0" stroke="#082c1e" stroke-width="1"/><line x1="608.4" y1="92" x2="608.4" y2="94" stroke="#082c1e" stroke-width="1"/><line x1="608.4" y1="217" x2="608.4" y2="219" stroke="#082c1e" stroke-width="1"/><line x1="620.3" y1="154.0" x2="620.3" y2="157.0" stroke="#082c1e" stroke-width="1"/><line x1="620.3" y1="92" x2="620.3" y2="94" stroke="#082c1e" stroke-width="1"/><line x1="620.3" y1="217" x2="620.3" y2="219" stroke="#082c1e" stroke-width="1"/><line x1="632.2" y1="154.0" x2="632.2" y2="157.0" stroke="#082c1e" stroke-width="1"/><line x1="632.2" y1="92" x2="632.2" y2="94" stroke="#082c1e" stroke-width="1"/><line x1="632.2" y1="217" x2="632.2" y2="219" stroke="#082c1e" stroke-width="1"/><line x1="644.1" y1="154.0" x2="644.1" y2="157.0" stroke="#082c1e" stroke-width="1"/><line x1="644.1" y1="92" x2="644.1" y2="94" stroke="#082c1e" stroke-width="1"/><line x1="644.1" y1="217" x2="644.1" y2="219" stroke="#082c1e" stroke-width="1"/><line x1="656.0" y1="154.0" x2="656.0" y2="157.0" stroke="#082c1e" stroke-width="1"/><line x1="656.0" y1="92" x2="656.0" y2="94" stroke="#082c1e" stroke-width="1"/><line x1="656.0" y1="217" x2="656.0" y2="219" stroke="#082c1e" stroke-width="1"/><line x1="668.0" y1="154.0" x2="668.0" y2="157.0" stroke="#082c1e" stroke-width="1"/><line x1="668.0" y1="92" x2="668.0" y2="94" stroke="#082c1e" stroke-width="1"/><line x1="668.0" y1="217" x2="668.0" y2="219" stroke="#082c1e" stroke-width="1"/><line x1="679.9" y1="154.0" x2="679.9" y2="157.0" stroke="#082c1e" stroke-width="1"/><line x1="679.9" y1="92" x2="679.9" y2="94" stroke="#082c1e" stroke-width="1"/><line x1="679.9" y1="217" x2="679.9" y2="219" stroke="#082c1e" stroke-width="1"/><line x1="691.8" y1="154.0" x2="691.8" y2="157.0" stroke="#082c1e" stroke-width="1"/><line x1="691.8" y1="92" x2="691.8" y2="94" stroke="#082c1e" stroke-width="1"/><line x1="691.8" y1="217" x2="691.8" y2="219" stroke="#082c1e" stroke-width="1"/><line x1="703.7" y1="154.0" x2="703.7" y2="157.0" stroke="#082c1e" stroke-width="1"/><line x1="703.7" y1="92" x2="703.7" y2="94" stroke="#082c1e" stroke-width="1"/><line x1="703.7" y1="217" x2="703.7" y2="219" stroke="#082c1e" stroke-width="1"/><line x1="715.6" y1="154.0" x2="715.6" y2="157.0" stroke="#082c1e" stroke-width="1"/><line x1="715.6" y1="92" x2="715.6" y2="94" stroke="#082c1e" stroke-width="1"/><line x1="715.6" y1="217" x2="715.6" y2="219" stroke="#082c1e" stroke-width="1"/><line x1="727.6" y1="154.0" x2="727.6" y2="157.0" stroke="#082c1e" stroke-width="1"/><line x1="727.6" y1="92" x2="727.6" y2="94" stroke="#082c1e" stroke-width="1"/><line x1="727.6" y1="217" x2="727.6" y2="219" stroke="#082c1e" stroke-width="1"/><line x1="739.5" y1="154.0" x2="739.5" y2="157.0" stroke="#082c1e" stroke-width="1"/><line x1="739.5" y1="92" x2="739.5" y2="94" stroke="#082c1e" stroke-width="1"/><line x1="739.5" y1="217" x2="739.5" y2="219" stroke="#082c1e" stroke-width="1"/><line x1="751.4" y1="154.0" x2="751.4" y2="157.0" stroke="#082c1e" stroke-width="1"/><line x1="751.4" y1="92" x2="751.4" y2="94" stroke="#082c1e" stroke-width="1"/><line x1="751.4" y1="217" x2="751.4" y2="219" stroke="#082c1e" stroke-width="1"/><line x1="763.3" y1="154.0" x2="763.3" y2="157.0" stroke="#082c1e" stroke-width="1"/><line x1="763.3" y1="92" x2="763.3" y2="94" stroke="#082c1e" stroke-width="1"/><line x1="763.3" y1="217" x2="763.3" y2="219" stroke="#082c1e" stroke-width="1"/><line x1="775.2" y1="154.0" x2="775.2" y2="157.0" stroke="#082c1e" stroke-width="1"/><line x1="775.2" y1="92" x2="775.2" y2="94" stroke="#082c1e" stroke-width="1"/><line x1="775.2" y1="217" x2="775.2" y2="219" stroke="#082c1e" stroke-width="1"/><line x1="787.2" y1="154.0" x2="787.2" y2="157.0" stroke="#082c1e" stroke-width="1"/><line x1="787.2" y1="92" x2="787.2" y2="94" stroke="#082c1e" stroke-width="1"/><line x1="787.2" y1="217" x2="787.2" y2="219" stroke="#082c1e" stroke-width="1"/><line x1="799.1" y1="154.0" x2="799.1" y2="157.0" stroke="#082c1e" stroke-width="1"/><line x1="799.1" y1="92" x2="799.1" y2="94" stroke="#082c1e" stroke-width="1"/><line x1="799.1" y1="217" x2="799.1" y2="219" stroke="#082c1e" stroke-width="1"/><line x1="511.5" y1="95.2" x2="514.5" y2="95.2" stroke="#082c1e" stroke-width="1"/><line x1="215" y1="95.2" x2="217.5" y2="95.2" stroke="#082c1e" stroke-width="1"/><line x1="808.5" y1="95.2" x2="811" y2="95.2" stroke="#082c1e" stroke-width="1"/><line x1="511.5" y1="98.3" x2="514.5" y2="98.3" stroke="#082c1e" stroke-width="1"/><line x1="215" y1="98.3" x2="217.5" y2="98.3" stroke="#082c1e" stroke-width="1"/><line x1="808.5" y1="98.3" x2="811" y2="98.3" stroke="#082c1e" stroke-width="1"/><line x1="511.5" y1="101.5" x2="514.5" y2="101.5" stroke="#082c1e" stroke-width="1"/><line x1="215" y1="101.5" x2="217.5" y2="101.5" stroke="#082c1e" stroke-width="1"/><line x1="808.5" y1="101.5" x2="811" y2="101.5" stroke="#082c1e" stroke-width="1"/><line x1="511.5" y1="104.7" x2="514.5" y2="104.7" stroke="#082c1e" stroke-width="1"/><line x1="215" y1="104.7" x2="217.5" y2="104.7" stroke="#082c1e" stroke-width="1"/><line x1="808.5" y1="104.7" x2="811" y2="104.7" stroke="#082c1e" stroke-width="1"/><line x1="511.5" y1="107.9" x2="514.5" y2="107.9" stroke="#082c1e" stroke-width="1"/><line x1="215" y1="107.9" x2="217.5" y2="107.9" stroke="#082c1e" stroke-width="1"/><line x1="808.5" y1="107.9" x2="811" y2="107.9" stroke="#082c1e" stroke-width="1"/><line x1="511.5" y1="111.0" x2="514.5" y2="111.0" stroke="#082c1e" stroke-width="1"/><line x1="215" y1="111.0" x2="217.5" y2="111.0" stroke="#082c1e" stroke-width="1"/><line x1="808.5" y1="111.0" x2="811" y2="111.0" stroke="#082c1e" stroke-width="1"/><line x1="511.5" y1="114.2" x2="514.5" y2="114.2" stroke="#082c1e" stroke-width="1"/><line x1="215" y1="114.2" x2="217.5" y2="114.2" stroke="#082c1e" stroke-width="1"/><line x1="808.5" y1="114.2" x2="811" y2="114.2" stroke="#082c1e" stroke-width="1"/><line x1="511.5" y1="117.4" x2="514.5" y2="117.4" stroke="#082c1e" stroke-width="1"/><line x1="215" y1="117.4" x2="217.5" y2="117.4" stroke="#082c1e" stroke-width="1"/><line x1="808.5" y1="117.4" x2="811" y2="117.4" stroke="#082c1e" stroke-width="1"/><line x1="511.5" y1="120.6" x2="514.5" y2="120.6" stroke="#082c1e" stroke-width="1"/><line x1="215" y1="120.6" x2="217.5" y2="120.6" stroke="#082c1e" stroke-width="1"/><line x1="808.5" y1="120.6" x2="811" y2="120.6" stroke="#082c1e" stroke-width="1"/><line x1="511.5" y1="123.8" x2="514.5" y2="123.8" stroke="#082c1e" stroke-width="1"/><line x1="215" y1="123.8" x2="217.5" y2="123.8" stroke="#082c1e" stroke-width="1"/><line x1="808.5" y1="123.8" x2="811" y2="123.8" stroke="#082c1e" stroke-width="1"/><line x1="511.5" y1="126.9" x2="514.5" y2="126.9" stroke="#082c1e" stroke-width="1"/><line x1="215" y1="126.9" x2="217.5" y2="126.9" stroke="#082c1e" stroke-width="1"/><line x1="808.5" y1="126.9" x2="811" y2="126.9" stroke="#082c1e" stroke-width="1"/><line x1="511.5" y1="130.1" x2="514.5" y2="130.1" stroke="#082c1e" stroke-width="1"/><line x1="215" y1="130.1" x2="217.5" y2="130.1" stroke="#082c1e" stroke-width="1"/><line x1="808.5" y1="130.1" x2="811" y2="130.1" stroke="#082c1e" stroke-width="1"/><line x1="511.5" y1="133.3" x2="514.5" y2="133.3" stroke="#082c1e" stroke-width="1"/><line x1="215" y1="133.3" x2="217.5" y2="133.3" stroke="#082c1e" stroke-width="1"/><line x1="808.5" y1="133.3" x2="811" y2="133.3" stroke="#082c1e" stroke-width="1"/><line x1="511.5" y1="136.4" x2="514.5" y2="136.4" stroke="#082c1e" stroke-width="1"/><line x1="215" y1="136.4" x2="217.5" y2="136.4" stroke="#082c1e" stroke-width="1"/><line x1="808.5" y1="136.4" x2="811" y2="136.4" stroke="#082c1e" stroke-width="1"/><line x1="511.5" y1="139.6" x2="514.5" y2="139.6" stroke="#082c1e" stroke-width="1"/><line x1="215" y1="139.6" x2="217.5" y2="139.6" stroke="#082c1e" stroke-width="1"/><line x1="808.5" y1="139.6" x2="811" y2="139.6" stroke="#082c1e" stroke-width="1"/><line x1="511.5" y1="142.8" x2="514.5" y2="142.8" stroke="#082c1e" stroke-width="1"/><line x1="215" y1="142.8" x2="217.5" y2="142.8" stroke="#082c1e" stroke-width="1"/><line x1="808.5" y1="142.8" x2="811" y2="142.8" stroke="#082c1e" stroke-width="1"/><line x1="511.5" y1="146.0" x2="514.5" y2="146.0" stroke="#082c1e" stroke-width="1"/><line x1="215" y1="146.0" x2="217.5" y2="146.0" stroke="#082c1e" stroke-width="1"/><line x1="808.5" y1="146.0" x2="811" y2="146.0" stroke="#082c1e" stroke-width="1"/><line x1="511.5" y1="149.2" x2="514.5" y2="149.2" stroke="#082c1e" stroke-width="1"/><line x1="215" y1="149.2" x2="217.5" y2="149.2" stroke="#082c1e" stroke-width="1"/><line x1="808.5" y1="149.2" x2="811" y2="149.2" stroke="#082c1e" stroke-width="1"/><line x1="511.5" y1="152.3" x2="514.5" y2="152.3" stroke="#082c1e" stroke-width="1"/><line x1="215" y1="152.3" x2="217.5" y2="152.3" stroke="#082c1e" stroke-width="1"/><line x1="808.5" y1="152.3" x2="811" y2="152.3" stroke="#082c1e" stroke-width="1"/><line x1="511.5" y1="155.5" x2="514.5" y2="155.5" stroke="#082c1e" stroke-width="1"/><line x1="215" y1="155.5" x2="217.5" y2="155.5" stroke="#082c1e" stroke-width="1"/><line x1="808.5" y1="155.5" x2="811" y2="155.5" stroke="#082c1e" stroke-width="1"/><line x1="511.5" y1="158.7" x2="514.5" y2="158.7" stroke="#082c1e" stroke-width="1"/><line x1="215" y1="158.7" x2="217.5" y2="158.7" stroke="#082c1e" stroke-width="1"/><line x1="808.5" y1="158.7" x2="811" y2="158.7" stroke="#082c1e" stroke-width="1"/><line x1="511.5" y1="161.8" x2="514.5" y2="161.8" stroke="#082c1e" stroke-width="1"/><line x1="215" y1="161.8" x2="217.5" y2="161.8" stroke="#082c1e" stroke-width="1"/><line x1="808.5" y1="161.8" x2="811" y2="161.8" stroke="#082c1e" stroke-width="1"/><line x1="511.5" y1="165.0" x2="514.5" y2="165.0" stroke="#082c1e" stroke-width="1"/><line x1="215" y1="165.0" x2="217.5" y2="165.0" stroke="#082c1e" stroke-width="1"/><line x1="808.5" y1="165.0" x2="811" y2="165.0" stroke="#082c1e" stroke-width="1"/><line x1="511.5" y1="168.2" x2="514.5" y2="168.2" stroke="#082c1e" stroke-width="1"/><line x1="215" y1="168.2" x2="217.5" y2="168.2" stroke="#082c1e" stroke-width="1"/><line x1="808.5" y1="168.2" x2="811" y2="168.2" stroke="#082c1e" stroke-width="1"/><line x1="511.5" y1="171.4" x2="514.5" y2="171.4" stroke="#082c1e" stroke-width="1"/><line x1="215" y1="171.4" x2="217.5" y2="171.4" stroke="#082c1e" stroke-width="1"/><line x1="808.5" y1="171.4" x2="811" y2="171.4" stroke="#082c1e" stroke-width="1"/><line x1="511.5" y1="174.6" x2="514.5" y2="174.6" stroke="#082c1e" stroke-width="1"/><line x1="215" y1="174.6" x2="217.5" y2="174.6" stroke="#082c1e" stroke-width="1"/><line x1="808.5" y1="174.6" x2="811" y2="174.6" stroke="#082c1e" stroke-width="1"/><line x1="511.5" y1="177.7" x2="514.5" y2="177.7" stroke="#082c1e" stroke-width="1"/><line x1="215" y1="177.7" x2="217.5" y2="177.7" stroke="#082c1e" stroke-width="1"/><line x1="808.5" y1="177.7" x2="811" y2="177.7" stroke="#082c1e" stroke-width="1"/><line x1="511.5" y1="180.9" x2="514.5" y2="180.9" stroke="#082c1e" stroke-width="1"/><line x1="215" y1="180.9" x2="217.5" y2="180.9" stroke="#082c1e" stroke-width="1"/><line x1="808.5" y1="180.9" x2="811" y2="180.9" stroke="#082c1e" stroke-width="1"/><line x1="511.5" y1="184.1" x2="514.5" y2="184.1" stroke="#082c1e" stroke-width="1"/><line x1="215" y1="184.1" x2="217.5" y2="184.1" stroke="#082c1e" stroke-width="1"/><line x1="808.5" y1="184.1" x2="811" y2="184.1" stroke="#082c1e" stroke-width="1"/><line x1="511.5" y1="187.2" x2="514.5" y2="187.2" stroke="#082c1e" stroke-width="1"/><line x1="215" y1="187.2" x2="217.5" y2="187.2" stroke="#082c1e" stroke-width="1"/><line x1="808.5" y1="187.2" x2="811" y2="187.2" stroke="#082c1e" stroke-width="1"/><line x1="511.5" y1="190.4" x2="514.5" y2="190.4" stroke="#082c1e" stroke-width="1"/><line x1="215" y1="190.4" x2="217.5" y2="190.4" stroke="#082c1e" stroke-width="1"/><line x1="808.5" y1="190.4" x2="811" y2="190.4" stroke="#082c1e" stroke-width="1"/><line x1="511.5" y1="193.6" x2="514.5" y2="193.6" stroke="#082c1e" stroke-width="1"/><line x1="215" y1="193.6" x2="217.5" y2="193.6" stroke="#082c1e" stroke-width="1"/><line x1="808.5" y1="193.6" x2="811" y2="193.6" stroke="#082c1e" stroke-width="1"/><line x1="511.5" y1="196.8" x2="514.5" y2="196.8" stroke="#082c1e" stroke-width="1"/><line x1="215" y1="196.8" x2="217.5" y2="196.8" stroke="#082c1e" stroke-width="1"/><line x1="808.5" y1="196.8" x2="811" y2="196.8" stroke="#082c1e" stroke-width="1"/><line x1="511.5" y1="199.9" x2="514.5" y2="199.9" stroke="#082c1e" stroke-width="1"/><line x1="215" y1="199.9" x2="217.5" y2="199.9" stroke="#082c1e" stroke-width="1"/><line x1="808.5" y1="199.9" x2="811" y2="199.9" stroke="#082c1e" stroke-width="1"/><line x1="511.5" y1="203.1" x2="514.5" y2="203.1" stroke="#082c1e" stroke-width="1"/><line x1="215" y1="203.1" x2="217.5" y2="203.1" stroke="#082c1e" stroke-width="1"/><line x1="808.5" y1="203.1" x2="811" y2="203.1" stroke="#082c1e" stroke-width="1"/><line x1="511.5" y1="206.3" x2="514.5" y2="206.3" stroke="#082c1e" stroke-width="1"/><line x1="215" y1="206.3" x2="217.5" y2="206.3" stroke="#082c1e" stroke-width="1"/><line x1="808.5" y1="206.3" x2="811" y2="206.3" stroke="#082c1e" stroke-width="1"/><line x1="511.5" y1="209.5" x2="514.5" y2="209.5" stroke="#082c1e" stroke-width="1"/><line x1="215" y1="209.5" x2="217.5" y2="209.5" stroke="#082c1e" stroke-width="1"/><line x1="808.5" y1="209.5" x2="811" y2="209.5" stroke="#082c1e" stroke-width="1"/><line x1="511.5" y1="212.7" x2="514.5" y2="212.7" stroke="#082c1e" stroke-width="1"/><line x1="215" y1="212.7" x2="217.5" y2="212.7" stroke="#082c1e" stroke-width="1"/><line x1="808.5" y1="212.7" x2="811" y2="212.7" stroke="#082c1e" stroke-width="1"/><line x1="511.5" y1="215.8" x2="514.5" y2="215.8" stroke="#082c1e" stroke-width="1"/><line x1="215" y1="215.8" x2="217.5" y2="215.8" stroke="#082c1e" stroke-width="1"/><line x1="808.5" y1="215.8" x2="811" y2="215.8" stroke="#082c1e" stroke-width="1"/><line x1="275.5" y1="225" x2="275.5" y2="352" stroke="#082c1e" stroke-width="1"/><line x1="334.5" y1="225" x2="334.5" y2="352" stroke="#082c1e" stroke-width="1"/><line x1="394.5" y1="225" x2="394.5" y2="352" stroke="#082c1e" stroke-width="1"/><line x1="453.5" y1="225" x2="453.5" y2="352" stroke="#082c1e" stroke-width="1"/><line x1="513.5" y1="225" x2="513.5" y2="352" stroke="#082c1e" stroke-width="1"/><line x1="573.5" y1="225" x2="573.5" y2="352" stroke="#082c1e" stroke-width="1"/><line x1="632.5" y1="225" x2="632.5" y2="352" stroke="#082c1e" stroke-width="1"/><line x1="692.5" y1="225" x2="692.5" y2="352" stroke="#082c1e" stroke-width="1"/><line x1="751.5" y1="225" x2="751.5" y2="352" stroke="#082c1e" stroke-width="1"/><line x1="215" y1="241.5" x2="811" y2="241.5" stroke="#082c1e" stroke-width="1"/><line x1="215" y1="257.5" x2="811" y2="257.5" stroke="#082c1e" stroke-width="1"/><line x1="215" y1="273.5" x2="811" y2="273.5" stroke="#082c1e" stroke-width="1"/><line x1="215" y1="289.5" x2="811" y2="289.5" stroke="#082c1e" stroke-width="1"/><line x1="215" y1="304.5" x2="811" y2="304.5" stroke="#082c1e" stroke-width="1"/><line x1="215" y1="320.5" x2="811" y2="320.5" stroke="#082c1e" stroke-width="1"/><line x1="215" y1="336.5" x2="811" y2="336.5" stroke="#082c1e" stroke-width="1"/><line x1="226.9" y1="287.0" x2="226.9" y2="290.0" stroke="#082c1e" stroke-width="1"/><line x1="226.9" y1="225" x2="226.9" y2="227" stroke="#082c1e" stroke-width="1"/><line x1="226.9" y1="350" x2="226.9" y2="352" stroke="#082c1e" stroke-width="1"/><line x1="238.8" y1="287.0" x2="238.8" y2="290.0" stroke="#082c1e" stroke-width="1"/><line x1="238.8" y1="225" x2="238.8" y2="227" stroke="#082c1e" stroke-width="1"/><line x1="238.8" y1="350" x2="238.8" y2="352" stroke="#082c1e" stroke-width="1"/><line x1="250.8" y1="287.0" x2="250.8" y2="290.0" stroke="#082c1e" stroke-width="1"/><line x1="250.8" y1="225" x2="250.8" y2="227" stroke="#082c1e" stroke-width="1"/><line x1="250.8" y1="350" x2="250.8" y2="352" stroke="#082c1e" stroke-width="1"/><line x1="262.7" y1="287.0" x2="262.7" y2="290.0" stroke="#082c1e" stroke-width="1"/><line x1="262.7" y1="225" x2="262.7" y2="227" stroke="#082c1e" stroke-width="1"/><line x1="262.7" y1="350" x2="262.7" y2="352" stroke="#082c1e" stroke-width="1"/><line x1="274.6" y1="287.0" x2="274.6" y2="290.0" stroke="#082c1e" stroke-width="1"/><line x1="274.6" y1="225" x2="274.6" y2="227" stroke="#082c1e" stroke-width="1"/><line x1="274.6" y1="350" x2="274.6" y2="352" stroke="#082c1e" stroke-width="1"/><line x1="286.5" y1="287.0" x2="286.5" y2="290.0" stroke="#082c1e" stroke-width="1"/><line x1="286.5" y1="225" x2="286.5" y2="227" stroke="#082c1e" stroke-width="1"/><line x1="286.5" y1="350" x2="286.5" y2="352" stroke="#082c1e" stroke-width="1"/><line x1="298.4" y1="287.0" x2="298.4" y2="290.0" stroke="#082c1e" stroke-width="1"/><line x1="298.4" y1="225" x2="298.4" y2="227" stroke="#082c1e" stroke-width="1"/><line x1="298.4" y1="350" x2="298.4" y2="352" stroke="#082c1e" stroke-width="1"/><line x1="310.4" y1="287.0" x2="310.4" y2="290.0" stroke="#082c1e" stroke-width="1"/><line x1="310.4" y1="225" x2="310.4" y2="227" stroke="#082c1e" stroke-width="1"/><line x1="310.4" y1="350" x2="310.4" y2="352" stroke="#082c1e" stroke-width="1"/><line x1="322.3" y1="287.0" x2="322.3" y2="290.0" stroke="#082c1e" stroke-width="1"/><line x1="322.3" y1="225" x2="322.3" y2="227" stroke="#082c1e" stroke-width="1"/><line x1="322.3" y1="350" x2="322.3" y2="352" stroke="#082c1e" stroke-width="1"/><line x1="334.2" y1="287.0" x2="334.2" y2="290.0" stroke="#082c1e" stroke-width="1"/><line x1="334.2" y1="225" x2="334.2" y2="227" stroke="#082c1e" stroke-width="1"/><line x1="334.2" y1="350" x2="334.2" y2="352" stroke="#082c1e" stroke-width="1"/><line x1="346.1" y1="287.0" x2="346.1" y2="290.0" stroke="#082c1e" stroke-width="1"/><line x1="346.1" y1="225" x2="346.1" y2="227" stroke="#082c1e" stroke-width="1"/><line x1="346.1" y1="350" x2="346.1" y2="352" stroke="#082c1e" stroke-width="1"/><line x1="358.0" y1="287.0" x2="358.0" y2="290.0" stroke="#082c1e" stroke-width="1"/><line x1="358.0" y1="225" x2="358.0" y2="227" stroke="#082c1e" stroke-width="1"/><line x1="358.0" y1="350" x2="358.0" y2="352" stroke="#082c1e" stroke-width="1"/><line x1="370.0" y1="287.0" x2="370.0" y2="290.0" stroke="#082c1e" stroke-width="1"/><line x1="370.0" y1="225" x2="370.0" y2="227" stroke="#082c1e" stroke-width="1"/><line x1="370.0" y1="350" x2="370.0" y2="352" stroke="#082c1e" stroke-width="1"/><line x1="381.9" y1="287.0" x2="381.9" y2="290.0" stroke="#082c1e" stroke-width="1"/><line x1="381.9" y1="225" x2="381.9" y2="227" stroke="#082c1e" stroke-width="1"/><line x1="381.9" y1="350" x2="381.9" y2="352" stroke="#082c1e" stroke-width="1"/><line x1="393.8" y1="287.0" x2="393.8" y2="290.0" stroke="#082c1e" stroke-width="1"/><line x1="393.8" y1="225" x2="393.8" y2="227" stroke="#082c1e" stroke-width="1"/><line x1="393.8" y1="350" x2="393.8" y2="352" stroke="#082c1e" stroke-width="1"/><line x1="405.7" y1="287.0" x2="405.7" y2="290.0" stroke="#082c1e" stroke-width="1"/><line x1="405.7" y1="225" x2="405.7" y2="227" stroke="#082c1e" stroke-width="1"/><line x1="405.7" y1="350" x2="405.7" y2="352" stroke="#082c1e" stroke-width="1"/><line x1="417.6" y1="287.0" x2="417.6" y2="290.0" stroke="#082c1e" stroke-width="1"/><line x1="417.6" y1="225" x2="417.6" y2="227" stroke="#082c1e" stroke-width="1"/><line x1="417.6" y1="350" x2="417.6" y2="352" stroke="#082c1e" stroke-width="1"/><line x1="429.6" y1="287.0" x2="429.6" y2="290.0" stroke="#082c1e" stroke-width="1"/><line x1="429.6" y1="225" x2="429.6" y2="227" stroke="#082c1e" stroke-width="1"/><line x1="429.6" y1="350" x2="429.6" y2="352" stroke="#082c1e" stroke-width="1"/><line x1="441.5" y1="287.0" x2="441.5" y2="290.0" stroke="#082c1e" stroke-width="1"/><line x1="441.5" y1="225" x2="441.5" y2="227" stroke="#082c1e" stroke-width="1"/><line x1="441.5" y1="350" x2="441.5" y2="352" stroke="#082c1e" stroke-width="1"/><line x1="453.4" y1="287.0" x2="453.4" y2="290.0" stroke="#082c1e" stroke-width="1"/><line x1="453.4" y1="225" x2="453.4" y2="227" stroke="#082c1e" stroke-width="1"/><line x1="453.4" y1="350" x2="453.4" y2="352" stroke="#082c1e" stroke-width="1"/><line x1="465.3" y1="287.0" x2="465.3" y2="290.0" stroke="#082c1e" stroke-width="1"/><line x1="465.3" y1="225" x2="465.3" y2="227" stroke="#082c1e" stroke-width="1"/><line x1="465.3" y1="350" x2="465.3" y2="352" stroke="#082c1e" stroke-width="1"/><line x1="477.2" y1="287.0" x2="477.2" y2="290.0" stroke="#082c1e" stroke-width="1"/><line x1="477.2" y1="225" x2="477.2" y2="227" stroke="#082c1e" stroke-width="1"/><line x1="477.2" y1="350" x2="477.2" y2="352" stroke="#082c1e" stroke-width="1"/><line x1="489.2" y1="287.0" x2="489.2" y2="290.0" stroke="#082c1e" stroke-width="1"/><line x1="489.2" y1="225" x2="489.2" y2="227" stroke="#082c1e" stroke-width="1"/><line x1="489.2" y1="350" x2="489.2" y2="352" stroke="#082c1e" stroke-width="1"/><line x1="501.1" y1="287.0" x2="501.1" y2="290.0" stroke="#082c1e" stroke-width="1"/><line x1="501.1" y1="225" x2="501.1" y2="227" stroke="#082c1e" stroke-width="1"/><line x1="501.1" y1="350" x2="501.1" y2="352" stroke="#082c1e" stroke-width="1"/><line x1="513.0" y1="287.0" x2="513.0" y2="290.0" stroke="#082c1e" stroke-width="1"/><line x1="513.0" y1="225" x2="513.0" y2="227" stroke="#082c1e" stroke-width="1"/><line x1="513.0" y1="350" x2="513.0" y2="352" stroke="#082c1e" stroke-width="1"/><line x1="524.9" y1="287.0" x2="524.9" y2="290.0" stroke="#082c1e" stroke-width="1"/><line x1="524.9" y1="225" x2="524.9" y2="227" stroke="#082c1e" stroke-width="1"/><line x1="524.9" y1="350" x2="524.9" y2="352" stroke="#082c1e" stroke-width="1"/><line x1="536.8" y1="287.0" x2="536.8" y2="290.0" stroke="#082c1e" stroke-width="1"/><line x1="536.8" y1="225" x2="536.8" y2="227" stroke="#082c1e" stroke-width="1"/><line x1="536.8" y1="350" x2="536.8" y2="352" stroke="#082c1e" stroke-width="1"/><line x1="548.8" y1="287.0" x2="548.8" y2="290.0" stroke="#082c1e" stroke-width="1"/><line x1="548.8" y1="225" x2="548.8" y2="227" stroke="#082c1e" stroke-width="1"/><line x1="548.8" y1="350" x2="548.8" y2="352" stroke="#082c1e" stroke-width="1"/><line x1="560.7" y1="287.0" x2="560.7" y2="290.0" stroke="#082c1e" stroke-width="1"/><line x1="560.7" y1="225" x2="560.7" y2="227" stroke="#082c1e" stroke-width="1"/><line x1="560.7" y1="350" x2="560.7" y2="352" stroke="#082c1e" stroke-width="1"/><line x1="572.6" y1="287.0" x2="572.6" y2="290.0" stroke="#082c1e" stroke-width="1"/><line x1="572.6" y1="225" x2="572.6" y2="227" stroke="#082c1e" stroke-width="1"/><line x1="572.6" y1="350" x2="572.6" y2="352" stroke="#082c1e" stroke-width="1"/><line x1="584.5" y1="287.0" x2="584.5" y2="290.0" stroke="#082c1e" stroke-width="1"/><line x1="584.5" y1="225" x2="584.5" y2="227" stroke="#082c1e" stroke-width="1"/><line x1="584.5" y1="350" x2="584.5" y2="352" stroke="#082c1e" stroke-width="1"/><line x1="596.4" y1="287.0" x2="596.4" y2="290.0" stroke="#082c1e" stroke-width="1"/><line x1="596.4" y1="225" x2="596.4" y2="227" stroke="#082c1e" stroke-width="1"/><line x1="596.4" y1="350" x2="596.4" y2="352" stroke="#082c1e" stroke-width="1"/><line x1="608.4" y1="287.0" x2="608.4" y2="290.0" stroke="#082c1e" stroke-width="1"/><line x1="608.4" y1="225" x2="608.4" y2="227" stroke="#082c1e" stroke-width="1"/><line x1="608.4" y1="350" x2="608.4" y2="352" stroke="#082c1e" stroke-width="1"/><line x1="620.3" y1="287.0" x2="620.3" y2="290.0" stroke="#082c1e" stroke-width="1"/><line x1="620.3" y1="225" x2="620.3" y2="227" stroke="#082c1e" stroke-width="1"/><line x1="620.3" y1="350" x2="620.3" y2="352" stroke="#082c1e" stroke-width="1"/><line x1="632.2" y1="287.0" x2="632.2" y2="290.0" stroke="#082c1e" stroke-width="1"/><line x1="632.2" y1="225" x2="632.2" y2="227" stroke="#082c1e" stroke-width="1"/><line x1="632.2" y1="350" x2="632.2" y2="352" stroke="#082c1e" stroke-width="1"/><line x1="644.1" y1="287.0" x2="644.1" y2="290.0" stroke="#082c1e" stroke-width="1"/><line x1="644.1" y1="225" x2="644.1" y2="227" stroke="#082c1e" stroke-width="1"/><line x1="644.1" y1="350" x2="644.1" y2="352" stroke="#082c1e" stroke-width="1"/><line x1="656.0" y1="287.0" x2="656.0" y2="290.0" stroke="#082c1e" stroke-width="1"/><line x1="656.0" y1="225" x2="656.0" y2="227" stroke="#082c1e" stroke-width="1"/><line x1="656.0" y1="350" x2="656.0" y2="352" stroke="#082c1e" stroke-width="1"/><line x1="668.0" y1="287.0" x2="668.0" y2="290.0" stroke="#082c1e" stroke-width="1"/><line x1="668.0" y1="225" x2="668.0" y2="227" stroke="#082c1e" stroke-width="1"/><line x1="668.0" y1="350" x2="668.0" y2="352" stroke="#082c1e" stroke-width="1"/><line x1="679.9" y1="287.0" x2="679.9" y2="290.0" stroke="#082c1e" stroke-width="1"/><line x1="679.9" y1="225" x2="679.9" y2="227" stroke="#082c1e" stroke-width="1"/><line x1="679.9" y1="350" x2="679.9" y2="352" stroke="#082c1e" stroke-width="1"/><line x1="691.8" y1="287.0" x2="691.8" y2="290.0" stroke="#082c1e" stroke-width="1"/><line x1="691.8" y1="225" x2="691.8" y2="227" stroke="#082c1e" stroke-width="1"/><line x1="691.8" y1="350" x2="691.8" y2="352" stroke="#082c1e" stroke-width="1"/><line x1="703.7" y1="287.0" x2="703.7" y2="290.0" stroke="#082c1e" stroke-width="1"/><line x1="703.7" y1="225" x2="703.7" y2="227" stroke="#082c1e" stroke-width="1"/><line x1="703.7" y1="350" x2="703.7" y2="352" stroke="#082c1e" stroke-width="1"/><line x1="715.6" y1="287.0" x2="715.6" y2="290.0" stroke="#082c1e" stroke-width="1"/><line x1="715.6" y1="225" x2="715.6" y2="227" stroke="#082c1e" stroke-width="1"/><line x1="715.6" y1="350" x2="715.6" y2="352" stroke="#082c1e" stroke-width="1"/><line x1="727.6" y1="287.0" x2="727.6" y2="290.0" stroke="#082c1e" stroke-width="1"/><line x1="727.6" y1="225" x2="727.6" y2="227" stroke="#082c1e" stroke-width="1"/><line x1="727.6" y1="350" x2="727.6" y2="352" stroke="#082c1e" stroke-width="1"/><line x1="739.5" y1="287.0" x2="739.5" y2="290.0" stroke="#082c1e" stroke-width="1"/><line x1="739.5" y1="225" x2="739.5" y2="227" stroke="#082c1e" stroke-width="1"/><line x1="739.5" y1="350" x2="739.5" y2="352" stroke="#082c1e" stroke-width="1"/><line x1="751.4" y1="287.0" x2="751.4" y2="290.0" stroke="#082c1e" stroke-width="1"/><line x1="751.4" y1="225" x2="751.4" y2="227" stroke="#082c1e" stroke-width="1"/><line x1="751.4" y1="350" x2="751.4" y2="352" stroke="#082c1e" stroke-width="1"/><line x1="763.3" y1="287.0" x2="763.3" y2="290.0" stroke="#082c1e" stroke-width="1"/><line x1="763.3" y1="225" x2="763.3" y2="227" stroke="#082c1e" stroke-width="1"/><line x1="763.3" y1="350" x2="763.3" y2="352" stroke="#082c1e" stroke-width="1"/><line x1="775.2" y1="287.0" x2="775.2" y2="290.0" stroke="#082c1e" stroke-width="1"/><line x1="775.2" y1="225" x2="775.2" y2="227" stroke="#082c1e" stroke-width="1"/><line x1="775.2" y1="350" x2="775.2" y2="352" stroke="#082c1e" stroke-width="1"/><line x1="787.2" y1="287.0" x2="787.2" y2="290.0" stroke="#082c1e" stroke-width="1"/><line x1="787.2" y1="225" x2="787.2" y2="227" stroke="#082c1e" stroke-width="1"/><line x1="787.2" y1="350" x2="787.2" y2="352" stroke="#082c1e" stroke-width="1"/><line x1="799.1" y1="287.0" x2="799.1" y2="290.0" stroke="#082c1e" stroke-width="1"/><line x1="799.1" y1="225" x2="799.1" y2="227" stroke="#082c1e" stroke-width="1"/><line x1="799.1" y1="350" x2="799.1" y2="352" stroke="#082c1e" stroke-width="1"/><line x1="511.5" y1="228.2" x2="514.5" y2="228.2" stroke="#082c1e" stroke-width="1"/><line x1="215" y1="228.2" x2="217.5" y2="228.2" stroke="#082c1e" stroke-width="1"/><line x1="808.5" y1="228.2" x2="811" y2="228.2" stroke="#082c1e" stroke-width="1"/><line x1="511.5" y1="231.3" x2="514.5" y2="231.3" stroke="#082c1e" stroke-width="1"/><line x1="215" y1="231.3" x2="217.5" y2="231.3" stroke="#082c1e" stroke-width="1"/><line x1="808.5" y1="231.3" x2="811" y2="231.3" stroke="#082c1e" stroke-width="1"/><line x1="511.5" y1="234.5" x2="514.5" y2="234.5" stroke="#082c1e" stroke-width="1"/><line x1="215" y1="234.5" x2="217.5" y2="234.5" stroke="#082c1e" stroke-width="1"/><line x1="808.5" y1="234.5" x2="811" y2="234.5" stroke="#082c1e" stroke-width="1"/><line x1="511.5" y1="237.7" x2="514.5" y2="237.7" stroke="#082c1e" stroke-width="1"/><line x1="215" y1="237.7" x2="217.5" y2="237.7" stroke="#082c1e" stroke-width="1"/><line x1="808.5" y1="237.7" x2="811" y2="237.7" stroke="#082c1e" stroke-width="1"/><line x1="511.5" y1="240.9" x2="514.5" y2="240.9" stroke="#082c1e" stroke-width="1"/><line x1="215" y1="240.9" x2="217.5" y2="240.9" stroke="#082c1e" stroke-width="1"/><line x1="808.5" y1="240.9" x2="811" y2="240.9" stroke="#082c1e" stroke-width="1"/><line x1="511.5" y1="244.1" x2="514.5" y2="244.1" stroke="#082c1e" stroke-width="1"/><line x1="215" y1="244.1" x2="217.5" y2="244.1" stroke="#082c1e" stroke-width="1"/><line x1="808.5" y1="244.1" x2="811" y2="244.1" stroke="#082c1e" stroke-width="1"/><line x1="511.5" y1="247.2" x2="514.5" y2="247.2" stroke="#082c1e" stroke-width="1"/><line x1="215" y1="247.2" x2="217.5" y2="247.2" stroke="#082c1e" stroke-width="1"/><line x1="808.5" y1="247.2" x2="811" y2="247.2" stroke="#082c1e" stroke-width="1"/><line x1="511.5" y1="250.4" x2="514.5" y2="250.4" stroke="#082c1e" stroke-width="1"/><line x1="215" y1="250.4" x2="217.5" y2="250.4" stroke="#082c1e" stroke-width="1"/><line x1="808.5" y1="250.4" x2="811" y2="250.4" stroke="#082c1e" stroke-width="1"/><line x1="511.5" y1="253.6" x2="514.5" y2="253.6" stroke="#082c1e" stroke-width="1"/><line x1="215" y1="253.6" x2="217.5" y2="253.6" stroke="#082c1e" stroke-width="1"/><line x1="808.5" y1="253.6" x2="811" y2="253.6" stroke="#082c1e" stroke-width="1"/><line x1="511.5" y1="256.8" x2="514.5" y2="256.8" stroke="#082c1e" stroke-width="1"/><line x1="215" y1="256.8" x2="217.5" y2="256.8" stroke="#082c1e" stroke-width="1"/><line x1="808.5" y1="256.8" x2="811" y2="256.8" stroke="#082c1e" stroke-width="1"/><line x1="511.5" y1="259.9" x2="514.5" y2="259.9" stroke="#082c1e" stroke-width="1"/><line x1="215" y1="259.9" x2="217.5" y2="259.9" stroke="#082c1e" stroke-width="1"/><line x1="808.5" y1="259.9" x2="811" y2="259.9" stroke="#082c1e" stroke-width="1"/><line x1="511.5" y1="263.1" x2="514.5" y2="263.1" stroke="#082c1e" stroke-width="1"/><line x1="215" y1="263.1" x2="217.5" y2="263.1" stroke="#082c1e" stroke-width="1"/><line x1="808.5" y1="263.1" x2="811" y2="263.1" stroke="#082c1e" stroke-width="1"/><line x1="511.5" y1="266.3" x2="514.5" y2="266.3" stroke="#082c1e" stroke-width="1"/><line x1="215" y1="266.3" x2="217.5" y2="266.3" stroke="#082c1e" stroke-width="1"/><line x1="808.5" y1="266.3" x2="811" y2="266.3" stroke="#082c1e" stroke-width="1"/><line x1="511.5" y1="269.4" x2="514.5" y2="269.4" stroke="#082c1e" stroke-width="1"/><line x1="215" y1="269.4" x2="217.5" y2="269.4" stroke="#082c1e" stroke-width="1"/><line x1="808.5" y1="269.4" x2="811" y2="269.4" stroke="#082c1e" stroke-width="1"/><line x1="511.5" y1="272.6" x2="514.5" y2="272.6" stroke="#082c1e" stroke-width="1"/><line x1="215" y1="272.6" x2="217.5" y2="272.6" stroke="#082c1e" stroke-width="1"/><line x1="808.5" y1="272.6" x2="811" y2="272.6" stroke="#082c1e" stroke-width="1"/><line x1="511.5" y1="275.8" x2="514.5" y2="275.8" stroke="#082c1e" stroke-width="1"/><line x1="215" y1="275.8" x2="217.5" y2="275.8" stroke="#082c1e" stroke-width="1"/><line x1="808.5" y1="275.8" x2="811" y2="275.8" stroke="#082c1e" stroke-width="1"/><line x1="511.5" y1="279.0" x2="514.5" y2="279.0" stroke="#082c1e" stroke-width="1"/><line x1="215" y1="279.0" x2="217.5" y2="279.0" stroke="#082c1e" stroke-width="1"/><line x1="808.5" y1="279.0" x2="811" y2="279.0" stroke="#082c1e" stroke-width="1"/><line x1="511.5" y1="282.1" x2="514.5" y2="282.1" stroke="#082c1e" stroke-width="1"/><line x1="215" y1="282.1" x2="217.5" y2="282.1" stroke="#082c1e" stroke-width="1"/><line x1="808.5" y1="282.1" x2="811" y2="282.1" stroke="#082c1e" stroke-width="1"/><line x1="511.5" y1="285.3" x2="514.5" y2="285.3" stroke="#082c1e" stroke-width="1"/><line x1="215" y1="285.3" x2="217.5" y2="285.3" stroke="#082c1e" stroke-width="1"/><line x1="808.5" y1="285.3" x2="811" y2="285.3" stroke="#082c1e" stroke-width="1"/><line x1="511.5" y1="288.5" x2="514.5" y2="288.5" stroke="#082c1e" stroke-width="1"/><line x1="215" y1="288.5" x2="217.5" y2="288.5" stroke="#082c1e" stroke-width="1"/><line x1="808.5" y1="288.5" x2="811" y2="288.5" stroke="#082c1e" stroke-width="1"/><line x1="511.5" y1="291.7" x2="514.5" y2="291.7" stroke="#082c1e" stroke-width="1"/><line x1="215" y1="291.7" x2="217.5" y2="291.7" stroke="#082c1e" stroke-width="1"/><line x1="808.5" y1="291.7" x2="811" y2="291.7" stroke="#082c1e" stroke-width="1"/><line x1="511.5" y1="294.9" x2="514.5" y2="294.9" stroke="#082c1e" stroke-width="1"/><line x1="215" y1="294.9" x2="217.5" y2="294.9" stroke="#082c1e" stroke-width="1"/><line x1="808.5" y1="294.9" x2="811" y2="294.9" stroke="#082c1e" stroke-width="1"/><line x1="511.5" y1="298.0" x2="514.5" y2="298.0" stroke="#082c1e" stroke-width="1"/><line x1="215" y1="298.0" x2="217.5" y2="298.0" stroke="#082c1e" stroke-width="1"/><line x1="808.5" y1="298.0" x2="811" y2="298.0" stroke="#082c1e" stroke-width="1"/><line x1="511.5" y1="301.2" x2="514.5" y2="301.2" stroke="#082c1e" stroke-width="1"/><line x1="215" y1="301.2" x2="217.5" y2="301.2" stroke="#082c1e" stroke-width="1"/><line x1="808.5" y1="301.2" x2="811" y2="301.2" stroke="#082c1e" stroke-width="1"/><line x1="511.5" y1="304.4" x2="514.5" y2="304.4" stroke="#082c1e" stroke-width="1"/><line x1="215" y1="304.4" x2="217.5" y2="304.4" stroke="#082c1e" stroke-width="1"/><line x1="808.5" y1="304.4" x2="811" y2="304.4" stroke="#082c1e" stroke-width="1"/><line x1="511.5" y1="307.6" x2="514.5" y2="307.6" stroke="#082c1e" stroke-width="1"/><line x1="215" y1="307.6" x2="217.5" y2="307.6" stroke="#082c1e" stroke-width="1"/><line x1="808.5" y1="307.6" x2="811" y2="307.6" stroke="#082c1e" stroke-width="1"/><line x1="511.5" y1="310.7" x2="514.5" y2="310.7" stroke="#082c1e" stroke-width="1"/><line x1="215" y1="310.7" x2="217.5" y2="310.7" stroke="#082c1e" stroke-width="1"/><line x1="808.5" y1="310.7" x2="811" y2="310.7" stroke="#082c1e" stroke-width="1"/><line x1="511.5" y1="313.9" x2="514.5" y2="313.9" stroke="#082c1e" stroke-width="1"/><line x1="215" y1="313.9" x2="217.5" y2="313.9" stroke="#082c1e" stroke-width="1"/><line x1="808.5" y1="313.9" x2="811" y2="313.9" stroke="#082c1e" stroke-width="1"/><line x1="511.5" y1="317.1" x2="514.5" y2="317.1" stroke="#082c1e" stroke-width="1"/><line x1="215" y1="317.1" x2="217.5" y2="317.1" stroke="#082c1e" stroke-width="1"/><line x1="808.5" y1="317.1" x2="811" y2="317.1" stroke="#082c1e" stroke-width="1"/><line x1="511.5" y1="320.2" x2="514.5" y2="320.2" stroke="#082c1e" stroke-width="1"/><line x1="215" y1="320.2" x2="217.5" y2="320.2" stroke="#082c1e" stroke-width="1"/><line x1="808.5" y1="320.2" x2="811" y2="320.2" stroke="#082c1e" stroke-width="1"/><line x1="511.5" y1="323.4" x2="514.5" y2="323.4" stroke="#082c1e" stroke-width="1"/><line x1="215" y1="323.4" x2="217.5" y2="323.4" stroke="#082c1e" stroke-width="1"/><line x1="808.5" y1="323.4" x2="811" y2="323.4" stroke="#082c1e" stroke-width="1"/><line x1="511.5" y1="326.6" x2="514.5" y2="326.6" stroke="#082c1e" stroke-width="1"/><line x1="215" y1="326.6" x2="217.5" y2="326.6" stroke="#082c1e" stroke-width="1"/><line x1="808.5" y1="326.6" x2="811" y2="326.6" stroke="#082c1e" stroke-width="1"/><line x1="511.5" y1="329.8" x2="514.5" y2="329.8" stroke="#082c1e" stroke-width="1"/><line x1="215" y1="329.8" x2="217.5" y2="329.8" stroke="#082c1e" stroke-width="1"/><line x1="808.5" y1="329.8" x2="811" y2="329.8" stroke="#082c1e" stroke-width="1"/><line x1="511.5" y1="332.9" x2="514.5" y2="332.9" stroke="#082c1e" stroke-width="1"/><line x1="215" y1="332.9" x2="217.5" y2="332.9" stroke="#082c1e" stroke-width="1"/><line x1="808.5" y1="332.9" x2="811" y2="332.9" stroke="#082c1e" stroke-width="1"/><line x1="511.5" y1="336.1" x2="514.5" y2="336.1" stroke="#082c1e" stroke-width="1"/><line x1="215" y1="336.1" x2="217.5" y2="336.1" stroke="#082c1e" stroke-width="1"/><line x1="808.5" y1="336.1" x2="811" y2="336.1" stroke="#082c1e" stroke-width="1"/><line x1="511.5" y1="339.3" x2="514.5" y2="339.3" stroke="#082c1e" stroke-width="1"/><line x1="215" y1="339.3" x2="217.5" y2="339.3" stroke="#082c1e" stroke-width="1"/><line x1="808.5" y1="339.3" x2="811" y2="339.3" stroke="#082c1e" stroke-width="1"/><line x1="511.5" y1="342.5" x2="514.5" y2="342.5" stroke="#082c1e" stroke-width="1"/><line x1="215" y1="342.5" x2="217.5" y2="342.5" stroke="#082c1e" stroke-width="1"/><line x1="808.5" y1="342.5" x2="811" y2="342.5" stroke="#082c1e" stroke-width="1"/><line x1="511.5" y1="345.6" x2="514.5" y2="345.6" stroke="#082c1e" stroke-width="1"/><line x1="215" y1="345.6" x2="217.5" y2="345.6" stroke="#082c1e" stroke-width="1"/><line x1="808.5" y1="345.6" x2="811" y2="345.6" stroke="#082c1e" stroke-width="1"/><line x1="511.5" y1="348.8" x2="514.5" y2="348.8" stroke="#082c1e" stroke-width="1"/><line x1="215" y1="348.8" x2="217.5" y2="348.8" stroke="#082c1e" stroke-width="1"/><line x1="808.5" y1="348.8" x2="811" y2="348.8" stroke="#082c1e" stroke-width="1"/><line x1="275.5" y1="358" x2="275.5" y2="459" stroke="#082c1e" stroke-width="1"/><line x1="334.5" y1="358" x2="334.5" y2="459" stroke="#082c1e" stroke-width="1"/><line x1="394.5" y1="358" x2="394.5" y2="459" stroke="#082c1e" stroke-width="1"/><line x1="453.5" y1="358" x2="453.5" y2="459" stroke="#082c1e" stroke-width="1"/><line x1="513.5" y1="358" x2="513.5" y2="459" stroke="#082c1e" stroke-width="1"/><line x1="573.5" y1="358" x2="573.5" y2="459" stroke="#082c1e" stroke-width="1"/><line x1="632.5" y1="358" x2="632.5" y2="459" stroke="#082c1e" stroke-width="1"/><line x1="692.5" y1="358" x2="692.5" y2="459" stroke="#082c1e" stroke-width="1"/><line x1="751.5" y1="358" x2="751.5" y2="459" stroke="#082c1e" stroke-width="1"/><line x1="215" y1="371.5" x2="811" y2="371.5" stroke="#082c1e" stroke-width="1"/><line x1="215" y1="383.5" x2="811" y2="383.5" stroke="#082c1e" stroke-width="1"/><line x1="215" y1="396.5" x2="811" y2="396.5" stroke="#082c1e" stroke-width="1"/><line x1="215" y1="409.5" x2="811" y2="409.5" stroke="#082c1e" stroke-width="1"/><line x1="215" y1="421.5" x2="811" y2="421.5" stroke="#082c1e" stroke-width="1"/><line x1="215" y1="434.5" x2="811" y2="434.5" stroke="#082c1e" stroke-width="1"/><line x1="215" y1="446.5" x2="811" y2="446.5" stroke="#082c1e" stroke-width="1"/><line x1="226.9" y1="407.0" x2="226.9" y2="410.0" stroke="#082c1e" stroke-width="1"/><line x1="226.9" y1="358" x2="226.9" y2="360" stroke="#082c1e" stroke-width="1"/><line x1="226.9" y1="457" x2="226.9" y2="459" stroke="#082c1e" stroke-width="1"/><line x1="238.8" y1="407.0" x2="238.8" y2="410.0" stroke="#082c1e" stroke-width="1"/><line x1="238.8" y1="358" x2="238.8" y2="360" stroke="#082c1e" stroke-width="1"/><line x1="238.8" y1="457" x2="238.8" y2="459" stroke="#082c1e" stroke-width="1"/><line x1="250.8" y1="407.0" x2="250.8" y2="410.0" stroke="#082c1e" stroke-width="1"/><line x1="250.8" y1="358" x2="250.8" y2="360" stroke="#082c1e" stroke-width="1"/><line x1="250.8" y1="457" x2="250.8" y2="459" stroke="#082c1e" stroke-width="1"/><line x1="262.7" y1="407.0" x2="262.7" y2="410.0" stroke="#082c1e" stroke-width="1"/><line x1="262.7" y1="358" x2="262.7" y2="360" stroke="#082c1e" stroke-width="1"/><line x1="262.7" y1="457" x2="262.7" y2="459" stroke="#082c1e" stroke-width="1"/><line x1="274.6" y1="407.0" x2="274.6" y2="410.0" stroke="#082c1e" stroke-width="1"/><line x1="274.6" y1="358" x2="274.6" y2="360" stroke="#082c1e" stroke-width="1"/><line x1="274.6" y1="457" x2="274.6" y2="459" stroke="#082c1e" stroke-width="1"/><line x1="286.5" y1="407.0" x2="286.5" y2="410.0" stroke="#082c1e" stroke-width="1"/><line x1="286.5" y1="358" x2="286.5" y2="360" stroke="#082c1e" stroke-width="1"/><line x1="286.5" y1="457" x2="286.5" y2="459" stroke="#082c1e" stroke-width="1"/><line x1="298.4" y1="407.0" x2="298.4" y2="410.0" stroke="#082c1e" stroke-width="1"/><line x1="298.4" y1="358" x2="298.4" y2="360" stroke="#082c1e" stroke-width="1"/><line x1="298.4" y1="457" x2="298.4" y2="459" stroke="#082c1e" stroke-width="1"/><line x1="310.4" y1="407.0" x2="310.4" y2="410.0" stroke="#082c1e" stroke-width="1"/><line x1="310.4" y1="358" x2="310.4" y2="360" stroke="#082c1e" stroke-width="1"/><line x1="310.4" y1="457" x2="310.4" y2="459" stroke="#082c1e" stroke-width="1"/><line x1="322.3" y1="407.0" x2="322.3" y2="410.0" stroke="#082c1e" stroke-width="1"/><line x1="322.3" y1="358" x2="322.3" y2="360" stroke="#082c1e" stroke-width="1"/><line x1="322.3" y1="457" x2="322.3" y2="459" stroke="#082c1e" stroke-width="1"/><line x1="334.2" y1="407.0" x2="334.2" y2="410.0" stroke="#082c1e" stroke-width="1"/><line x1="334.2" y1="358" x2="334.2" y2="360" stroke="#082c1e" stroke-width="1"/><line x1="334.2" y1="457" x2="334.2" y2="459" stroke="#082c1e" stroke-width="1"/><line x1="346.1" y1="407.0" x2="346.1" y2="410.0" stroke="#082c1e" stroke-width="1"/><line x1="346.1" y1="358" x2="346.1" y2="360" stroke="#082c1e" stroke-width="1"/><line x1="346.1" y1="457" x2="346.1" y2="459" stroke="#082c1e" stroke-width="1"/><line x1="358.0" y1="407.0" x2="358.0" y2="410.0" stroke="#082c1e" stroke-width="1"/><line x1="358.0" y1="358" x2="358.0" y2="360" stroke="#082c1e" stroke-width="1"/><line x1="358.0" y1="457" x2="358.0" y2="459" stroke="#082c1e" stroke-width="1"/><line x1="370.0" y1="407.0" x2="370.0" y2="410.0" stroke="#082c1e" stroke-width="1"/><line x1="370.0" y1="358" x2="370.0" y2="360" stroke="#082c1e" stroke-width="1"/><line x1="370.0" y1="457" x2="370.0" y2="459" stroke="#082c1e" stroke-width="1"/><line x1="381.9" y1="407.0" x2="381.9" y2="410.0" stroke="#082c1e" stroke-width="1"/><line x1="381.9" y1="358" x2="381.9" y2="360" stroke="#082c1e" stroke-width="1"/><line x1="381.9" y1="457" x2="381.9" y2="459" stroke="#082c1e" stroke-width="1"/><line x1="393.8" y1="407.0" x2="393.8" y2="410.0" stroke="#082c1e" stroke-width="1"/><line x1="393.8" y1="358" x2="393.8" y2="360" stroke="#082c1e" stroke-width="1"/><line x1="393.8" y1="457" x2="393.8" y2="459" stroke="#082c1e" stroke-width="1"/><line x1="405.7" y1="407.0" x2="405.7" y2="410.0" stroke="#082c1e" stroke-width="1"/><line x1="405.7" y1="358" x2="405.7" y2="360" stroke="#082c1e" stroke-width="1"/><line x1="405.7" y1="457" x2="405.7" y2="459" stroke="#082c1e" stroke-width="1"/><line x1="417.6" y1="407.0" x2="417.6" y2="410.0" stroke="#082c1e" stroke-width="1"/><line x1="417.6" y1="358" x2="417.6" y2="360" stroke="#082c1e" stroke-width="1"/><line x1="417.6" y1="457" x2="417.6" y2="459" stroke="#082c1e" stroke-width="1"/><line x1="429.6" y1="407.0" x2="429.6" y2="410.0" stroke="#082c1e" stroke-width="1"/><line x1="429.6" y1="358" x2="429.6" y2="360" stroke="#082c1e" stroke-width="1"/><line x1="429.6" y1="457" x2="429.6" y2="459" stroke="#082c1e" stroke-width="1"/><line x1="441.5" y1="407.0" x2="441.5" y2="410.0" stroke="#082c1e" stroke-width="1"/><line x1="441.5" y1="358" x2="441.5" y2="360" stroke="#082c1e" stroke-width="1"/><line x1="441.5" y1="457" x2="441.5" y2="459" stroke="#082c1e" stroke-width="1"/><line x1="453.4" y1="407.0" x2="453.4" y2="410.0" stroke="#082c1e" stroke-width="1"/><line x1="453.4" y1="358" x2="453.4" y2="360" stroke="#082c1e" stroke-width="1"/><line x1="453.4" y1="457" x2="453.4" y2="459" stroke="#082c1e" stroke-width="1"/><line x1="465.3" y1="407.0" x2="465.3" y2="410.0" stroke="#082c1e" stroke-width="1"/><line x1="465.3" y1="358" x2="465.3" y2="360" stroke="#082c1e" stroke-width="1"/><line x1="465.3" y1="457" x2="465.3" y2="459" stroke="#082c1e" stroke-width="1"/><line x1="477.2" y1="407.0" x2="477.2" y2="410.0" stroke="#082c1e" stroke-width="1"/><line x1="477.2" y1="358" x2="477.2" y2="360" stroke="#082c1e" stroke-width="1"/><line x1="477.2" y1="457" x2="477.2" y2="459" stroke="#082c1e" stroke-width="1"/><line x1="489.2" y1="407.0" x2="489.2" y2="410.0" stroke="#082c1e" stroke-width="1"/><line x1="489.2" y1="358" x2="489.2" y2="360" stroke="#082c1e" stroke-width="1"/><line x1="489.2" y1="457" x2="489.2" y2="459" stroke="#082c1e" stroke-width="1"/><line x1="501.1" y1="407.0" x2="501.1" y2="410.0" stroke="#082c1e" stroke-width="1"/><line x1="501.1" y1="358" x2="501.1" y2="360" stroke="#082c1e" stroke-width="1"/><line x1="501.1" y1="457" x2="501.1" y2="459" stroke="#082c1e" stroke-width="1"/><line x1="513.0" y1="407.0" x2="513.0" y2="410.0" stroke="#082c1e" stroke-width="1"/><line x1="513.0" y1="358" x2="513.0" y2="360" stroke="#082c1e" stroke-width="1"/><line x1="513.0" y1="457" x2="513.0" y2="459" stroke="#082c1e" stroke-width="1"/><line x1="524.9" y1="407.0" x2="524.9" y2="410.0" stroke="#082c1e" stroke-width="1"/><line x1="524.9" y1="358" x2="524.9" y2="360" stroke="#082c1e" stroke-width="1"/><line x1="524.9" y1="457" x2="524.9" y2="459" stroke="#082c1e" stroke-width="1"/><line x1="536.8" y1="407.0" x2="536.8" y2="410.0" stroke="#082c1e" stroke-width="1"/><line x1="536.8" y1="358" x2="536.8" y2="360" stroke="#082c1e" stroke-width="1"/><line x1="536.8" y1="457" x2="536.8" y2="459" stroke="#082c1e" stroke-width="1"/><line x1="548.8" y1="407.0" x2="548.8" y2="410.0" stroke="#082c1e" stroke-width="1"/><line x1="548.8" y1="358" x2="548.8" y2="360" stroke="#082c1e" stroke-width="1"/><line x1="548.8" y1="457" x2="548.8" y2="459" stroke="#082c1e" stroke-width="1"/><line x1="560.7" y1="407.0" x2="560.7" y2="410.0" stroke="#082c1e" stroke-width="1"/><line x1="560.7" y1="358" x2="560.7" y2="360" stroke="#082c1e" stroke-width="1"/><line x1="560.7" y1="457" x2="560.7" y2="459" stroke="#082c1e" stroke-width="1"/><line x1="572.6" y1="407.0" x2="572.6" y2="410.0" stroke="#082c1e" stroke-width="1"/><line x1="572.6" y1="358" x2="572.6" y2="360" stroke="#082c1e" stroke-width="1"/><line x1="572.6" y1="457" x2="572.6" y2="459" stroke="#082c1e" stroke-width="1"/><line x1="584.5" y1="407.0" x2="584.5" y2="410.0" stroke="#082c1e" stroke-width="1"/><line x1="584.5" y1="358" x2="584.5" y2="360" stroke="#082c1e" stroke-width="1"/><line x1="584.5" y1="457" x2="584.5" y2="459" stroke="#082c1e" stroke-width="1"/><line x1="596.4" y1="407.0" x2="596.4" y2="410.0" stroke="#082c1e" stroke-width="1"/><line x1="596.4" y1="358" x2="596.4" y2="360" stroke="#082c1e" stroke-width="1"/><line x1="596.4" y1="457" x2="596.4" y2="459" stroke="#082c1e" stroke-width="1"/><line x1="608.4" y1="407.0" x2="608.4" y2="410.0" stroke="#082c1e" stroke-width="1"/><line x1="608.4" y1="358" x2="608.4" y2="360" stroke="#082c1e" stroke-width="1"/><line x1="608.4" y1="457" x2="608.4" y2="459" stroke="#082c1e" stroke-width="1"/><line x1="620.3" y1="407.0" x2="620.3" y2="410.0" stroke="#082c1e" stroke-width="1"/><line x1="620.3" y1="358" x2="620.3" y2="360" stroke="#082c1e" stroke-width="1"/><line x1="620.3" y1="457" x2="620.3" y2="459" stroke="#082c1e" stroke-width="1"/><line x1="632.2" y1="407.0" x2="632.2" y2="410.0" stroke="#082c1e" stroke-width="1"/><line x1="632.2" y1="358" x2="632.2" y2="360" stroke="#082c1e" stroke-width="1"/><line x1="632.2" y1="457" x2="632.2" y2="459" stroke="#082c1e" stroke-width="1"/><line x1="644.1" y1="407.0" x2="644.1" y2="410.0" stroke="#082c1e" stroke-width="1"/><line x1="644.1" y1="358" x2="644.1" y2="360" stroke="#082c1e" stroke-width="1"/><line x1="644.1" y1="457" x2="644.1" y2="459" stroke="#082c1e" stroke-width="1"/><line x1="656.0" y1="407.0" x2="656.0" y2="410.0" stroke="#082c1e" stroke-width="1"/><line x1="656.0" y1="358" x2="656.0" y2="360" stroke="#082c1e" stroke-width="1"/><line x1="656.0" y1="457" x2="656.0" y2="459" stroke="#082c1e" stroke-width="1"/><line x1="668.0" y1="407.0" x2="668.0" y2="410.0" stroke="#082c1e" stroke-width="1"/><line x1="668.0" y1="358" x2="668.0" y2="360" stroke="#082c1e" stroke-width="1"/><line x1="668.0" y1="457" x2="668.0" y2="459" stroke="#082c1e" stroke-width="1"/><line x1="679.9" y1="407.0" x2="679.9" y2="410.0" stroke="#082c1e" stroke-width="1"/><line x1="679.9" y1="358" x2="679.9" y2="360" stroke="#082c1e" stroke-width="1"/><line x1="679.9" y1="457" x2="679.9" y2="459" stroke="#082c1e" stroke-width="1"/><line x1="691.8" y1="407.0" x2="691.8" y2="410.0" stroke="#082c1e" stroke-width="1"/><line x1="691.8" y1="358" x2="691.8" y2="360" stroke="#082c1e" stroke-width="1"/><line x1="691.8" y1="457" x2="691.8" y2="459" stroke="#082c1e" stroke-width="1"/><line x1="703.7" y1="407.0" x2="703.7" y2="410.0" stroke="#082c1e" stroke-width="1"/><line x1="703.7" y1="358" x2="703.7" y2="360" stroke="#082c1e" stroke-width="1"/><line x1="703.7" y1="457" x2="703.7" y2="459" stroke="#082c1e" stroke-width="1"/><line x1="715.6" y1="407.0" x2="715.6" y2="410.0" stroke="#082c1e" stroke-width="1"/><line x1="715.6" y1="358" x2="715.6" y2="360" stroke="#082c1e" stroke-width="1"/><line x1="715.6" y1="457" x2="715.6" y2="459" stroke="#082c1e" stroke-width="1"/><line x1="727.6" y1="407.0" x2="727.6" y2="410.0" stroke="#082c1e" stroke-width="1"/><line x1="727.6" y1="358" x2="727.6" y2="360" stroke="#082c1e" stroke-width="1"/><line x1="727.6" y1="457" x2="727.6" y2="459" stroke="#082c1e" stroke-width="1"/><line x1="739.5" y1="407.0" x2="739.5" y2="410.0" stroke="#082c1e" stroke-width="1"/><line x1="739.5" y1="358" x2="739.5" y2="360" stroke="#082c1e" stroke-width="1"/><line x1="739.5" y1="457" x2="739.5" y2="459" stroke="#082c1e" stroke-width="1"/><line x1="751.4" y1="407.0" x2="751.4" y2="410.0" stroke="#082c1e" stroke-width="1"/><line x1="751.4" y1="358" x2="751.4" y2="360" stroke="#082c1e" stroke-width="1"/><line x1="751.4" y1="457" x2="751.4" y2="459" stroke="#082c1e" stroke-width="1"/><line x1="763.3" y1="407.0" x2="763.3" y2="410.0" stroke="#082c1e" stroke-width="1"/><line x1="763.3" y1="358" x2="763.3" y2="360" stroke="#082c1e" stroke-width="1"/><line x1="763.3" y1="457" x2="763.3" y2="459" stroke="#082c1e" stroke-width="1"/><line x1="775.2" y1="407.0" x2="775.2" y2="410.0" stroke="#082c1e" stroke-width="1"/><line x1="775.2" y1="358" x2="775.2" y2="360" stroke="#082c1e" stroke-width="1"/><line x1="775.2" y1="457" x2="775.2" y2="459" stroke="#082c1e" stroke-width="1"/><line x1="787.2" y1="407.0" x2="787.2" y2="410.0" stroke="#082c1e" stroke-width="1"/><line x1="787.2" y1="358" x2="787.2" y2="360" stroke="#082c1e" stroke-width="1"/><line x1="787.2" y1="457" x2="787.2" y2="459" stroke="#082c1e" stroke-width="1"/><line x1="799.1" y1="407.0" x2="799.1" y2="410.0" stroke="#082c1e" stroke-width="1"/><line x1="799.1" y1="358" x2="799.1" y2="360" stroke="#082c1e" stroke-width="1"/><line x1="799.1" y1="457" x2="799.1" y2="459" stroke="#082c1e" stroke-width="1"/><line x1="511.5" y1="360.5" x2="514.5" y2="360.5" stroke="#082c1e" stroke-width="1"/><line x1="215" y1="360.5" x2="217.5" y2="360.5" stroke="#082c1e" stroke-width="1"/><line x1="808.5" y1="360.5" x2="811" y2="360.5" stroke="#082c1e" stroke-width="1"/><line x1="511.5" y1="363.1" x2="514.5" y2="363.1" stroke="#082c1e" stroke-width="1"/><line x1="215" y1="363.1" x2="217.5" y2="363.1" stroke="#082c1e" stroke-width="1"/><line x1="808.5" y1="363.1" x2="811" y2="363.1" stroke="#082c1e" stroke-width="1"/><line x1="511.5" y1="365.6" x2="514.5" y2="365.6" stroke="#082c1e" stroke-width="1"/><line x1="215" y1="365.6" x2="217.5" y2="365.6" stroke="#082c1e" stroke-width="1"/><line x1="808.5" y1="365.6" x2="811" y2="365.6" stroke="#082c1e" stroke-width="1"/><line x1="511.5" y1="368.1" x2="514.5" y2="368.1" stroke="#082c1e" stroke-width="1"/><line x1="215" y1="368.1" x2="217.5" y2="368.1" stroke="#082c1e" stroke-width="1"/><line x1="808.5" y1="368.1" x2="811" y2="368.1" stroke="#082c1e" stroke-width="1"/><line x1="511.5" y1="370.6" x2="514.5" y2="370.6" stroke="#082c1e" stroke-width="1"/><line x1="215" y1="370.6" x2="217.5" y2="370.6" stroke="#082c1e" stroke-width="1"/><line x1="808.5" y1="370.6" x2="811" y2="370.6" stroke="#082c1e" stroke-width="1"/><line x1="511.5" y1="373.1" x2="514.5" y2="373.1" stroke="#082c1e" stroke-width="1"/><line x1="215" y1="373.1" x2="217.5" y2="373.1" stroke="#082c1e" stroke-width="1"/><line x1="808.5" y1="373.1" x2="811" y2="373.1" stroke="#082c1e" stroke-width="1"/><line x1="511.5" y1="375.7" x2="514.5" y2="375.7" stroke="#082c1e" stroke-width="1"/><line x1="215" y1="375.7" x2="217.5" y2="375.7" stroke="#082c1e" stroke-width="1"/><line x1="808.5" y1="375.7" x2="811" y2="375.7" stroke="#082c1e" stroke-width="1"/><line x1="511.5" y1="378.2" x2="514.5" y2="378.2" stroke="#082c1e" stroke-width="1"/><line x1="215" y1="378.2" x2="217.5" y2="378.2" stroke="#082c1e" stroke-width="1"/><line x1="808.5" y1="378.2" x2="811" y2="378.2" stroke="#082c1e" stroke-width="1"/><line x1="511.5" y1="380.7" x2="514.5" y2="380.7" stroke="#082c1e" stroke-width="1"/><line x1="215" y1="380.7" x2="217.5" y2="380.7" stroke="#082c1e" stroke-width="1"/><line x1="808.5" y1="380.7" x2="811" y2="380.7" stroke="#082c1e" stroke-width="1"/><line x1="511.5" y1="383.2" x2="514.5" y2="383.2" stroke="#082c1e" stroke-width="1"/><line x1="215" y1="383.2" x2="217.5" y2="383.2" stroke="#082c1e" stroke-width="1"/><line x1="808.5" y1="383.2" x2="811" y2="383.2" stroke="#082c1e" stroke-width="1"/><line x1="511.5" y1="385.8" x2="514.5" y2="385.8" stroke="#082c1e" stroke-width="1"/><line x1="215" y1="385.8" x2="217.5" y2="385.8" stroke="#082c1e" stroke-width="1"/><line x1="808.5" y1="385.8" x2="811" y2="385.8" stroke="#082c1e" stroke-width="1"/><line x1="511.5" y1="388.3" x2="514.5" y2="388.3" stroke="#082c1e" stroke-width="1"/><line x1="215" y1="388.3" x2="217.5" y2="388.3" stroke="#082c1e" stroke-width="1"/><line x1="808.5" y1="388.3" x2="811" y2="388.3" stroke="#082c1e" stroke-width="1"/><line x1="511.5" y1="390.8" x2="514.5" y2="390.8" stroke="#082c1e" stroke-width="1"/><line x1="215" y1="390.8" x2="217.5" y2="390.8" stroke="#082c1e" stroke-width="1"/><line x1="808.5" y1="390.8" x2="811" y2="390.8" stroke="#082c1e" stroke-width="1"/><line x1="511.5" y1="393.4" x2="514.5" y2="393.4" stroke="#082c1e" stroke-width="1"/><line x1="215" y1="393.4" x2="217.5" y2="393.4" stroke="#082c1e" stroke-width="1"/><line x1="808.5" y1="393.4" x2="811" y2="393.4" stroke="#082c1e" stroke-width="1"/><line x1="511.5" y1="395.9" x2="514.5" y2="395.9" stroke="#082c1e" stroke-width="1"/><line x1="215" y1="395.9" x2="217.5" y2="395.9" stroke="#082c1e" stroke-width="1"/><line x1="808.5" y1="395.9" x2="811" y2="395.9" stroke="#082c1e" stroke-width="1"/><line x1="511.5" y1="398.4" x2="514.5" y2="398.4" stroke="#082c1e" stroke-width="1"/><line x1="215" y1="398.4" x2="217.5" y2="398.4" stroke="#082c1e" stroke-width="1"/><line x1="808.5" y1="398.4" x2="811" y2="398.4" stroke="#082c1e" stroke-width="1"/><line x1="511.5" y1="400.9" x2="514.5" y2="400.9" stroke="#082c1e" stroke-width="1"/><line x1="215" y1="400.9" x2="217.5" y2="400.9" stroke="#082c1e" stroke-width="1"/><line x1="808.5" y1="400.9" x2="811" y2="400.9" stroke="#082c1e" stroke-width="1"/><line x1="511.5" y1="403.4" x2="514.5" y2="403.4" stroke="#082c1e" stroke-width="1"/><line x1="215" y1="403.4" x2="217.5" y2="403.4" stroke="#082c1e" stroke-width="1"/><line x1="808.5" y1="403.4" x2="811" y2="403.4" stroke="#082c1e" stroke-width="1"/><line x1="511.5" y1="406.0" x2="514.5" y2="406.0" stroke="#082c1e" stroke-width="1"/><line x1="215" y1="406.0" x2="217.5" y2="406.0" stroke="#082c1e" stroke-width="1"/><line x1="808.5" y1="406.0" x2="811" y2="406.0" stroke="#082c1e" stroke-width="1"/><line x1="511.5" y1="408.5" x2="514.5" y2="408.5" stroke="#082c1e" stroke-width="1"/><line x1="215" y1="408.5" x2="217.5" y2="408.5" stroke="#082c1e" stroke-width="1"/><line x1="808.5" y1="408.5" x2="811" y2="408.5" stroke="#082c1e" stroke-width="1"/><line x1="511.5" y1="411.0" x2="514.5" y2="411.0" stroke="#082c1e" stroke-width="1"/><line x1="215" y1="411.0" x2="217.5" y2="411.0" stroke="#082c1e" stroke-width="1"/><line x1="808.5" y1="411.0" x2="811" y2="411.0" stroke="#082c1e" stroke-width="1"/><line x1="511.5" y1="413.6" x2="514.5" y2="413.6" stroke="#082c1e" stroke-width="1"/><line x1="215" y1="413.6" x2="217.5" y2="413.6" stroke="#082c1e" stroke-width="1"/><line x1="808.5" y1="413.6" x2="811" y2="413.6" stroke="#082c1e" stroke-width="1"/><line x1="511.5" y1="416.1" x2="514.5" y2="416.1" stroke="#082c1e" stroke-width="1"/><line x1="215" y1="416.1" x2="217.5" y2="416.1" stroke="#082c1e" stroke-width="1"/><line x1="808.5" y1="416.1" x2="811" y2="416.1" stroke="#082c1e" stroke-width="1"/><line x1="511.5" y1="418.6" x2="514.5" y2="418.6" stroke="#082c1e" stroke-width="1"/><line x1="215" y1="418.6" x2="217.5" y2="418.6" stroke="#082c1e" stroke-width="1"/><line x1="808.5" y1="418.6" x2="811" y2="418.6" stroke="#082c1e" stroke-width="1"/><line x1="511.5" y1="421.1" x2="514.5" y2="421.1" stroke="#082c1e" stroke-width="1"/><line x1="215" y1="421.1" x2="217.5" y2="421.1" stroke="#082c1e" stroke-width="1"/><line x1="808.5" y1="421.1" x2="811" y2="421.1" stroke="#082c1e" stroke-width="1"/><line x1="511.5" y1="423.6" x2="514.5" y2="423.6" stroke="#082c1e" stroke-width="1"/><line x1="215" y1="423.6" x2="217.5" y2="423.6" stroke="#082c1e" stroke-width="1"/><line x1="808.5" y1="423.6" x2="811" y2="423.6" stroke="#082c1e" stroke-width="1"/><line x1="511.5" y1="426.2" x2="514.5" y2="426.2" stroke="#082c1e" stroke-width="1"/><line x1="215" y1="426.2" x2="217.5" y2="426.2" stroke="#082c1e" stroke-width="1"/><line x1="808.5" y1="426.2" x2="811" y2="426.2" stroke="#082c1e" stroke-width="1"/><line x1="511.5" y1="428.7" x2="514.5" y2="428.7" stroke="#082c1e" stroke-width="1"/><line x1="215" y1="428.7" x2="217.5" y2="428.7" stroke="#082c1e" stroke-width="1"/><line x1="808.5" y1="428.7" x2="811" y2="428.7" stroke="#082c1e" stroke-width="1"/><line x1="511.5" y1="431.2" x2="514.5" y2="431.2" stroke="#082c1e" stroke-width="1"/><line x1="215" y1="431.2" x2="217.5" y2="431.2" stroke="#082c1e" stroke-width="1"/><line x1="808.5" y1="431.2" x2="811" y2="431.2" stroke="#082c1e" stroke-width="1"/><line x1="511.5" y1="433.8" x2="514.5" y2="433.8" stroke="#082c1e" stroke-width="1"/><line x1="215" y1="433.8" x2="217.5" y2="433.8" stroke="#082c1e" stroke-width="1"/><line x1="808.5" y1="433.8" x2="811" y2="433.8" stroke="#082c1e" stroke-width="1"/><line x1="511.5" y1="436.3" x2="514.5" y2="436.3" stroke="#082c1e" stroke-width="1"/><line x1="215" y1="436.3" x2="217.5" y2="436.3" stroke="#082c1e" stroke-width="1"/><line x1="808.5" y1="436.3" x2="811" y2="436.3" stroke="#082c1e" stroke-width="1"/><line x1="511.5" y1="438.8" x2="514.5" y2="438.8" stroke="#082c1e" stroke-width="1"/><line x1="215" y1="438.8" x2="217.5" y2="438.8" stroke="#082c1e" stroke-width="1"/><line x1="808.5" y1="438.8" x2="811" y2="438.8" stroke="#082c1e" stroke-width="1"/><line x1="511.5" y1="441.3" x2="514.5" y2="441.3" stroke="#082c1e" stroke-width="1"/><line x1="215" y1="441.3" x2="217.5" y2="441.3" stroke="#082c1e" stroke-width="1"/><line x1="808.5" y1="441.3" x2="811" y2="441.3" stroke="#082c1e" stroke-width="1"/><line x1="511.5" y1="443.9" x2="514.5" y2="443.9" stroke="#082c1e" stroke-width="1"/><line x1="215" y1="443.9" x2="217.5" y2="443.9" stroke="#082c1e" stroke-width="1"/><line x1="808.5" y1="443.9" x2="811" y2="443.9" stroke="#082c1e" stroke-width="1"/><line x1="511.5" y1="446.4" x2="514.5" y2="446.4" stroke="#082c1e" stroke-width="1"/><line x1="215" y1="446.4" x2="217.5" y2="446.4" stroke="#082c1e" stroke-width="1"/><line x1="808.5" y1="446.4" x2="811" y2="446.4" stroke="#082c1e" stroke-width="1"/><line x1="511.5" y1="448.9" x2="514.5" y2="448.9" stroke="#082c1e" stroke-width="1"/><line x1="215" y1="448.9" x2="217.5" y2="448.9" stroke="#082c1e" stroke-width="1"/><line x1="808.5" y1="448.9" x2="811" y2="448.9" stroke="#082c1e" stroke-width="1"/><line x1="511.5" y1="451.4" x2="514.5" y2="451.4" stroke="#082c1e" stroke-width="1"/><line x1="215" y1="451.4" x2="217.5" y2="451.4" stroke="#082c1e" stroke-width="1"/><line x1="808.5" y1="451.4" x2="811" y2="451.4" stroke="#082c1e" stroke-width="1"/><line x1="511.5" y1="453.9" x2="514.5" y2="453.9" stroke="#082c1e" stroke-width="1"/><line x1="215" y1="453.9" x2="217.5" y2="453.9" stroke="#082c1e" stroke-width="1"/><line x1="808.5" y1="453.9" x2="811" y2="453.9" stroke="#082c1e" stroke-width="1"/><line x1="511.5" y1="456.5" x2="514.5" y2="456.5" stroke="#082c1e" stroke-width="1"/><line x1="215" y1="456.5" x2="217.5" y2="456.5" stroke="#082c1e" stroke-width="1"/><line x1="808.5" y1="456.5" x2="811" y2="456.5" stroke="#082c1e" stroke-width="1"/><line x1="275.5" y1="465" x2="275.5" y2="566" stroke="#082c1e" stroke-width="1"/><line x1="334.5" y1="465" x2="334.5" y2="566" stroke="#082c1e" stroke-width="1"/><line x1="394.5" y1="465" x2="394.5" y2="566" stroke="#082c1e" stroke-width="1"/><line x1="453.5" y1="465" x2="453.5" y2="566" stroke="#082c1e" stroke-width="1"/><line x1="513.5" y1="465" x2="513.5" y2="566" stroke="#082c1e" stroke-width="1"/><line x1="573.5" y1="465" x2="573.5" y2="566" stroke="#082c1e" stroke-width="1"/><line x1="632.5" y1="465" x2="632.5" y2="566" stroke="#082c1e" stroke-width="1"/><line x1="692.5" y1="465" x2="692.5" y2="566" stroke="#082c1e" stroke-width="1"/><line x1="751.5" y1="465" x2="751.5" y2="566" stroke="#082c1e" stroke-width="1"/><line x1="215" y1="478.5" x2="811" y2="478.5" stroke="#082c1e" stroke-width="1"/><line x1="215" y1="490.5" x2="811" y2="490.5" stroke="#082c1e" stroke-width="1"/><line x1="215" y1="503.5" x2="811" y2="503.5" stroke="#082c1e" stroke-width="1"/><line x1="215" y1="516.5" x2="811" y2="516.5" stroke="#082c1e" stroke-width="1"/><line x1="215" y1="528.5" x2="811" y2="528.5" stroke="#082c1e" stroke-width="1"/><line x1="215" y1="541.5" x2="811" y2="541.5" stroke="#082c1e" stroke-width="1"/><line x1="215" y1="553.5" x2="811" y2="553.5" stroke="#082c1e" stroke-width="1"/><line x1="226.9" y1="514.0" x2="226.9" y2="517.0" stroke="#082c1e" stroke-width="1"/><line x1="226.9" y1="465" x2="226.9" y2="467" stroke="#082c1e" stroke-width="1"/><line x1="226.9" y1="564" x2="226.9" y2="566" stroke="#082c1e" stroke-width="1"/><line x1="238.8" y1="514.0" x2="238.8" y2="517.0" stroke="#082c1e" stroke-width="1"/><line x1="238.8" y1="465" x2="238.8" y2="467" stroke="#082c1e" stroke-width="1"/><line x1="238.8" y1="564" x2="238.8" y2="566" stroke="#082c1e" stroke-width="1"/><line x1="250.8" y1="514.0" x2="250.8" y2="517.0" stroke="#082c1e" stroke-width="1"/><line x1="250.8" y1="465" x2="250.8" y2="467" stroke="#082c1e" stroke-width="1"/><line x1="250.8" y1="564" x2="250.8" y2="566" stroke="#082c1e" stroke-width="1"/><line x1="262.7" y1="514.0" x2="262.7" y2="517.0" stroke="#082c1e" stroke-width="1"/><line x1="262.7" y1="465" x2="262.7" y2="467" stroke="#082c1e" stroke-width="1"/><line x1="262.7" y1="564" x2="262.7" y2="566" stroke="#082c1e" stroke-width="1"/><line x1="274.6" y1="514.0" x2="274.6" y2="517.0" stroke="#082c1e" stroke-width="1"/><line x1="274.6" y1="465" x2="274.6" y2="467" stroke="#082c1e" stroke-width="1"/><line x1="274.6" y1="564" x2="274.6" y2="566" stroke="#082c1e" stroke-width="1"/><line x1="286.5" y1="514.0" x2="286.5" y2="517.0" stroke="#082c1e" stroke-width="1"/><line x1="286.5" y1="465" x2="286.5" y2="467" stroke="#082c1e" stroke-width="1"/><line x1="286.5" y1="564" x2="286.5" y2="566" stroke="#082c1e" stroke-width="1"/><line x1="298.4" y1="514.0" x2="298.4" y2="517.0" stroke="#082c1e" stroke-width="1"/><line x1="298.4" y1="465" x2="298.4" y2="467" stroke="#082c1e" stroke-width="1"/><line x1="298.4" y1="564" x2="298.4" y2="566" stroke="#082c1e" stroke-width="1"/><line x1="310.4" y1="514.0" x2="310.4" y2="517.0" stroke="#082c1e" stroke-width="1"/><line x1="310.4" y1="465" x2="310.4" y2="467" stroke="#082c1e" stroke-width="1"/><line x1="310.4" y1="564" x2="310.4" y2="566" stroke="#082c1e" stroke-width="1"/><line x1="322.3" y1="514.0" x2="322.3" y2="517.0" stroke="#082c1e" stroke-width="1"/><line x1="322.3" y1="465" x2="322.3" y2="467" stroke="#082c1e" stroke-width="1"/><line x1="322.3" y1="564" x2="322.3" y2="566" stroke="#082c1e" stroke-width="1"/><line x1="334.2" y1="514.0" x2="334.2" y2="517.0" stroke="#082c1e" stroke-width="1"/><line x1="334.2" y1="465" x2="334.2" y2="467" stroke="#082c1e" stroke-width="1"/><line x1="334.2" y1="564" x2="334.2" y2="566" stroke="#082c1e" stroke-width="1"/><line x1="346.1" y1="514.0" x2="346.1" y2="517.0" stroke="#082c1e" stroke-width="1"/><line x1="346.1" y1="465" x2="346.1" y2="467" stroke="#082c1e" stroke-width="1"/><line x1="346.1" y1="564" x2="346.1" y2="566" stroke="#082c1e" stroke-width="1"/><line x1="358.0" y1="514.0" x2="358.0" y2="517.0" stroke="#082c1e" stroke-width="1"/><line x1="358.0" y1="465" x2="358.0" y2="467" stroke="#082c1e" stroke-width="1"/><line x1="358.0" y1="564" x2="358.0" y2="566" stroke="#082c1e" stroke-width="1"/><line x1="370.0" y1="514.0" x2="370.0" y2="517.0" stroke="#082c1e" stroke-width="1"/><line x1="370.0" y1="465" x2="370.0" y2="467" stroke="#082c1e" stroke-width="1"/><line x1="370.0" y1="564" x2="370.0" y2="566" stroke="#082c1e" stroke-width="1"/><line x1="381.9" y1="514.0" x2="381.9" y2="517.0" stroke="#082c1e" stroke-width="1"/><line x1="381.9" y1="465" x2="381.9" y2="467" stroke="#082c1e" stroke-width="1"/><line x1="381.9" y1="564" x2="381.9" y2="566" stroke="#082c1e" stroke-width="1"/><line x1="393.8" y1="514.0" x2="393.8" y2="517.0" stroke="#082c1e" stroke-width="1"/><line x1="393.8" y1="465" x2="393.8" y2="467" stroke="#082c1e" stroke-width="1"/><line x1="393.8" y1="564" x2="393.8" y2="566" stroke="#082c1e" stroke-width="1"/><line x1="405.7" y1="514.0" x2="405.7" y2="517.0" stroke="#082c1e" stroke-width="1"/><line x1="405.7" y1="465" x2="405.7" y2="467" stroke="#082c1e" stroke-width="1"/><line x1="405.7" y1="564" x2="405.7" y2="566" stroke="#082c1e" stroke-width="1"/><line x1="417.6" y1="514.0" x2="417.6" y2="517.0" stroke="#082c1e" stroke-width="1"/><line x1="417.6" y1="465" x2="417.6" y2="467" stroke="#082c1e" stroke-width="1"/><line x1="417.6" y1="564" x2="417.6" y2="566" stroke="#082c1e" stroke-width="1"/><line x1="429.6" y1="514.0" x2="429.6" y2="517.0" stroke="#082c1e" stroke-width="1"/><line x1="429.6" y1="465" x2="429.6" y2="467" stroke="#082c1e" stroke-width="1"/><line x1="429.6" y1="564" x2="429.6" y2="566" stroke="#082c1e" stroke-width="1"/><line x1="441.5" y1="514.0" x2="441.5" y2="517.0" stroke="#082c1e" stroke-width="1"/><line x1="441.5" y1="465" x2="441.5" y2="467" stroke="#082c1e" stroke-width="1"/><line x1="441.5" y1="564" x2="441.5" y2="566" stroke="#082c1e" stroke-width="1"/><line x1="453.4" y1="514.0" x2="453.4" y2="517.0" stroke="#082c1e" stroke-width="1"/><line x1="453.4" y1="465" x2="453.4" y2="467" stroke="#082c1e" stroke-width="1"/><line x1="453.4" y1="564" x2="453.4" y2="566" stroke="#082c1e" stroke-width="1"/><line x1="465.3" y1="514.0" x2="465.3" y2="517.0" stroke="#082c1e" stroke-width="1"/><line x1="465.3" y1="465" x2="465.3" y2="467" stroke="#082c1e" stroke-width="1"/><line x1="465.3" y1="564" x2="465.3" y2="566" stroke="#082c1e" stroke-width="1"/><line x1="477.2" y1="514.0" x2="477.2" y2="517.0" stroke="#082c1e" stroke-width="1"/><line x1="477.2" y1="465" x2="477.2" y2="467" stroke="#082c1e" stroke-width="1"/><line x1="477.2" y1="564" x2="477.2" y2="566" stroke="#082c1e" stroke-width="1"/><line x1="489.2" y1="514.0" x2="489.2" y2="517.0" stroke="#082c1e" stroke-width="1"/><line x1="489.2" y1="465" x2="489.2" y2="467" stroke="#082c1e" stroke-width="1"/><line x1="489.2" y1="564" x2="489.2" y2="566" stroke="#082c1e" stroke-width="1"/><line x1="501.1" y1="514.0" x2="501.1" y2="517.0" stroke="#082c1e" stroke-width="1"/><line x1="501.1" y1="465" x2="501.1" y2="467" stroke="#082c1e" stroke-width="1"/><line x1="501.1" y1="564" x2="501.1" y2="566" stroke="#082c1e" stroke-width="1"/><line x1="513.0" y1="514.0" x2="513.0" y2="517.0" stroke="#082c1e" stroke-width="1"/><line x1="513.0" y1="465" x2="513.0" y2="467" stroke="#082c1e" stroke-width="1"/><line x1="513.0" y1="564" x2="513.0" y2="566" stroke="#082c1e" stroke-width="1"/><line x1="524.9" y1="514.0" x2="524.9" y2="517.0" stroke="#082c1e" stroke-width="1"/><line x1="524.9" y1="465" x2="524.9" y2="467" stroke="#082c1e" stroke-width="1"/><line x1="524.9" y1="564" x2="524.9" y2="566" stroke="#082c1e" stroke-width="1"/><line x1="536.8" y1="514.0" x2="536.8" y2="517.0" stroke="#082c1e" stroke-width="1"/><line x1="536.8" y1="465" x2="536.8" y2="467" stroke="#082c1e" stroke-width="1"/><line x1="536.8" y1="564" x2="536.8" y2="566" stroke="#082c1e" stroke-width="1"/><line x1="548.8" y1="514.0" x2="548.8" y2="517.0" stroke="#082c1e" stroke-width="1"/><line x1="548.8" y1="465" x2="548.8" y2="467" stroke="#082c1e" stroke-width="1"/><line x1="548.8" y1="564" x2="548.8" y2="566" stroke="#082c1e" stroke-width="1"/><line x1="560.7" y1="514.0" x2="560.7" y2="517.0" stroke="#082c1e" stroke-width="1"/><line x1="560.7" y1="465" x2="560.7" y2="467" stroke="#082c1e" stroke-width="1"/><line x1="560.7" y1="564" x2="560.7" y2="566" stroke="#082c1e" stroke-width="1"/><line x1="572.6" y1="514.0" x2="572.6" y2="517.0" stroke="#082c1e" stroke-width="1"/><line x1="572.6" y1="465" x2="572.6" y2="467" stroke="#082c1e" stroke-width="1"/><line x1="572.6" y1="564" x2="572.6" y2="566" stroke="#082c1e" stroke-width="1"/><line x1="584.5" y1="514.0" x2="584.5" y2="517.0" stroke="#082c1e" stroke-width="1"/><line x1="584.5" y1="465" x2="584.5" y2="467" stroke="#082c1e" stroke-width="1"/><line x1="584.5" y1="564" x2="584.5" y2="566" stroke="#082c1e" stroke-width="1"/><line x1="596.4" y1="514.0" x2="596.4" y2="517.0" stroke="#082c1e" stroke-width="1"/><line x1="596.4" y1="465" x2="596.4" y2="467" stroke="#082c1e" stroke-width="1"/><line x1="596.4" y1="564" x2="596.4" y2="566" stroke="#082c1e" stroke-width="1"/><line x1="608.4" y1="514.0" x2="608.4" y2="517.0" stroke="#082c1e" stroke-width="1"/><line x1="608.4" y1="465" x2="608.4" y2="467" stroke="#082c1e" stroke-width="1"/><line x1="608.4" y1="564" x2="608.4" y2="566" stroke="#082c1e" stroke-width="1"/><line x1="620.3" y1="514.0" x2="620.3" y2="517.0" stroke="#082c1e" stroke-width="1"/><line x1="620.3" y1="465" x2="620.3" y2="467" stroke="#082c1e" stroke-width="1"/><line x1="620.3" y1="564" x2="620.3" y2="566" stroke="#082c1e" stroke-width="1"/><line x1="632.2" y1="514.0" x2="632.2" y2="517.0" stroke="#082c1e" stroke-width="1"/><line x1="632.2" y1="465" x2="632.2" y2="467" stroke="#082c1e" stroke-width="1"/><line x1="632.2" y1="564" x2="632.2" y2="566" stroke="#082c1e" stroke-width="1"/><line x1="644.1" y1="514.0" x2="644.1" y2="517.0" stroke="#082c1e" stroke-width="1"/><line x1="644.1" y1="465" x2="644.1" y2="467" stroke="#082c1e" stroke-width="1"/><line x1="644.1" y1="564" x2="644.1" y2="566" stroke="#082c1e" stroke-width="1"/><line x1="656.0" y1="514.0" x2="656.0" y2="517.0" stroke="#082c1e" stroke-width="1"/><line x1="656.0" y1="465" x2="656.0" y2="467" stroke="#082c1e" stroke-width="1"/><line x1="656.0" y1="564" x2="656.0" y2="566" stroke="#082c1e" stroke-width="1"/><line x1="668.0" y1="514.0" x2="668.0" y2="517.0" stroke="#082c1e" stroke-width="1"/><line x1="668.0" y1="465" x2="668.0" y2="467" stroke="#082c1e" stroke-width="1"/><line x1="668.0" y1="564" x2="668.0" y2="566" stroke="#082c1e" stroke-width="1"/><line x1="679.9" y1="514.0" x2="679.9" y2="517.0" stroke="#082c1e" stroke-width="1"/><line x1="679.9" y1="465" x2="679.9" y2="467" stroke="#082c1e" stroke-width="1"/><line x1="679.9" y1="564" x2="679.9" y2="566" stroke="#082c1e" stroke-width="1"/><line x1="691.8" y1="514.0" x2="691.8" y2="517.0" stroke="#082c1e" stroke-width="1"/><line x1="691.8" y1="465" x2="691.8" y2="467" stroke="#082c1e" stroke-width="1"/><line x1="691.8" y1="564" x2="691.8" y2="566" stroke="#082c1e" stroke-width="1"/><line x1="703.7" y1="514.0" x2="703.7" y2="517.0" stroke="#082c1e" stroke-width="1"/><line x1="703.7" y1="465" x2="703.7" y2="467" stroke="#082c1e" stroke-width="1"/><line x1="703.7" y1="564" x2="703.7" y2="566" stroke="#082c1e" stroke-width="1"/><line x1="715.6" y1="514.0" x2="715.6" y2="517.0" stroke="#082c1e" stroke-width="1"/><line x1="715.6" y1="465" x2="715.6" y2="467" stroke="#082c1e" stroke-width="1"/><line x1="715.6" y1="564" x2="715.6" y2="566" stroke="#082c1e" stroke-width="1"/><line x1="727.6" y1="514.0" x2="727.6" y2="517.0" stroke="#082c1e" stroke-width="1"/><line x1="727.6" y1="465" x2="727.6" y2="467" stroke="#082c1e" stroke-width="1"/><line x1="727.6" y1="564" x2="727.6" y2="566" stroke="#082c1e" stroke-width="1"/><line x1="739.5" y1="514.0" x2="739.5" y2="517.0" stroke="#082c1e" stroke-width="1"/><line x1="739.5" y1="465" x2="739.5" y2="467" stroke="#082c1e" stroke-width="1"/><line x1="739.5" y1="564" x2="739.5" y2="566" stroke="#082c1e" stroke-width="1"/><line x1="751.4" y1="514.0" x2="751.4" y2="517.0" stroke="#082c1e" stroke-width="1"/><line x1="751.4" y1="465" x2="751.4" y2="467" stroke="#082c1e" stroke-width="1"/><line x1="751.4" y1="564" x2="751.4" y2="566" stroke="#082c1e" stroke-width="1"/><line x1="763.3" y1="514.0" x2="763.3" y2="517.0" stroke="#082c1e" stroke-width="1"/><line x1="763.3" y1="465" x2="763.3" y2="467" stroke="#082c1e" stroke-width="1"/><line x1="763.3" y1="564" x2="763.3" y2="566" stroke="#082c1e" stroke-width="1"/><line x1="775.2" y1="514.0" x2="775.2" y2="517.0" stroke="#082c1e" stroke-width="1"/><line x1="775.2" y1="465" x2="775.2" y2="467" stroke="#082c1e" stroke-width="1"/><line x1="775.2" y1="564" x2="775.2" y2="566" stroke="#082c1e" stroke-width="1"/><line x1="787.2" y1="514.0" x2="787.2" y2="517.0" stroke="#082c1e" stroke-width="1"/><line x1="787.2" y1="465" x2="787.2" y2="467" stroke="#082c1e" stroke-width="1"/><line x1="787.2" y1="564" x2="787.2" y2="566" stroke="#082c1e" stroke-width="1"/><line x1="799.1" y1="514.0" x2="799.1" y2="517.0" stroke="#082c1e" stroke-width="1"/><line x1="799.1" y1="465" x2="799.1" y2="467" stroke="#082c1e" stroke-width="1"/><line x1="799.1" y1="564" x2="799.1" y2="566" stroke="#082c1e" stroke-width="1"/><line x1="511.5" y1="467.5" x2="514.5" y2="467.5" stroke="#082c1e" stroke-width="1"/><line x1="215" y1="467.5" x2="217.5" y2="467.5" stroke="#082c1e" stroke-width="1"/><line x1="808.5" y1="467.5" x2="811" y2="467.5" stroke="#082c1e" stroke-width="1"/><line x1="511.5" y1="470.1" x2="514.5" y2="470.1" stroke="#082c1e" stroke-width="1"/><line x1="215" y1="470.1" x2="217.5" y2="470.1" stroke="#082c1e" stroke-width="1"/><line x1="808.5" y1="470.1" x2="811" y2="470.1" stroke="#082c1e" stroke-width="1"/><line x1="511.5" y1="472.6" x2="514.5" y2="472.6" stroke="#082c1e" stroke-width="1"/><line x1="215" y1="472.6" x2="217.5" y2="472.6" stroke="#082c1e" stroke-width="1"/><line x1="808.5" y1="472.6" x2="811" y2="472.6" stroke="#082c1e" stroke-width="1"/><line x1="511.5" y1="475.1" x2="514.5" y2="475.1" stroke="#082c1e" stroke-width="1"/><line x1="215" y1="475.1" x2="217.5" y2="475.1" stroke="#082c1e" stroke-width="1"/><line x1="808.5" y1="475.1" x2="811" y2="475.1" stroke="#082c1e" stroke-width="1"/><line x1="511.5" y1="477.6" x2="514.5" y2="477.6" stroke="#082c1e" stroke-width="1"/><line x1="215" y1="477.6" x2="217.5" y2="477.6" stroke="#082c1e" stroke-width="1"/><line x1="808.5" y1="477.6" x2="811" y2="477.6" stroke="#082c1e" stroke-width="1"/><line x1="511.5" y1="480.1" x2="514.5" y2="480.1" stroke="#082c1e" stroke-width="1"/><line x1="215" y1="480.1" x2="217.5" y2="480.1" stroke="#082c1e" stroke-width="1"/><line x1="808.5" y1="480.1" x2="811" y2="480.1" stroke="#082c1e" stroke-width="1"/><line x1="511.5" y1="482.7" x2="514.5" y2="482.7" stroke="#082c1e" stroke-width="1"/><line x1="215" y1="482.7" x2="217.5" y2="482.7" stroke="#082c1e" stroke-width="1"/><line x1="808.5" y1="482.7" x2="811" y2="482.7" stroke="#082c1e" stroke-width="1"/><line x1="511.5" y1="485.2" x2="514.5" y2="485.2" stroke="#082c1e" stroke-width="1"/><line x1="215" y1="485.2" x2="217.5" y2="485.2" stroke="#082c1e" stroke-width="1"/><line x1="808.5" y1="485.2" x2="811" y2="485.2" stroke="#082c1e" stroke-width="1"/><line x1="511.5" y1="487.7" x2="514.5" y2="487.7" stroke="#082c1e" stroke-width="1"/><line x1="215" y1="487.7" x2="217.5" y2="487.7" stroke="#082c1e" stroke-width="1"/><line x1="808.5" y1="487.7" x2="811" y2="487.7" stroke="#082c1e" stroke-width="1"/><line x1="511.5" y1="490.2" x2="514.5" y2="490.2" stroke="#082c1e" stroke-width="1"/><line x1="215" y1="490.2" x2="217.5" y2="490.2" stroke="#082c1e" stroke-width="1"/><line x1="808.5" y1="490.2" x2="811" y2="490.2" stroke="#082c1e" stroke-width="1"/><line x1="511.5" y1="492.8" x2="514.5" y2="492.8" stroke="#082c1e" stroke-width="1"/><line x1="215" y1="492.8" x2="217.5" y2="492.8" stroke="#082c1e" stroke-width="1"/><line x1="808.5" y1="492.8" x2="811" y2="492.8" stroke="#082c1e" stroke-width="1"/><line x1="511.5" y1="495.3" x2="514.5" y2="495.3" stroke="#082c1e" stroke-width="1"/><line x1="215" y1="495.3" x2="217.5" y2="495.3" stroke="#082c1e" stroke-width="1"/><line x1="808.5" y1="495.3" x2="811" y2="495.3" stroke="#082c1e" stroke-width="1"/><line x1="511.5" y1="497.8" x2="514.5" y2="497.8" stroke="#082c1e" stroke-width="1"/><line x1="215" y1="497.8" x2="217.5" y2="497.8" stroke="#082c1e" stroke-width="1"/><line x1="808.5" y1="497.8" x2="811" y2="497.8" stroke="#082c1e" stroke-width="1"/><line x1="511.5" y1="500.4" x2="514.5" y2="500.4" stroke="#082c1e" stroke-width="1"/><line x1="215" y1="500.4" x2="217.5" y2="500.4" stroke="#082c1e" stroke-width="1"/><line x1="808.5" y1="500.4" x2="811" y2="500.4" stroke="#082c1e" stroke-width="1"/><line x1="511.5" y1="502.9" x2="514.5" y2="502.9" stroke="#082c1e" stroke-width="1"/><line x1="215" y1="502.9" x2="217.5" y2="502.9" stroke="#082c1e" stroke-width="1"/><line x1="808.5" y1="502.9" x2="811" y2="502.9" stroke="#082c1e" stroke-width="1"/><line x1="511.5" y1="505.4" x2="514.5" y2="505.4" stroke="#082c1e" stroke-width="1"/><line x1="215" y1="505.4" x2="217.5" y2="505.4" stroke="#082c1e" stroke-width="1"/><line x1="808.5" y1="505.4" x2="811" y2="505.4" stroke="#082c1e" stroke-width="1"/><line x1="511.5" y1="507.9" x2="514.5" y2="507.9" stroke="#082c1e" stroke-width="1"/><line x1="215" y1="507.9" x2="217.5" y2="507.9" stroke="#082c1e" stroke-width="1"/><line x1="808.5" y1="507.9" x2="811" y2="507.9" stroke="#082c1e" stroke-width="1"/><line x1="511.5" y1="510.4" x2="514.5" y2="510.4" stroke="#082c1e" stroke-width="1"/><line x1="215" y1="510.4" x2="217.5" y2="510.4" stroke="#082c1e" stroke-width="1"/><line x1="808.5" y1="510.4" x2="811" y2="510.4" stroke="#082c1e" stroke-width="1"/><line x1="511.5" y1="513.0" x2="514.5" y2="513.0" stroke="#082c1e" stroke-width="1"/><line x1="215" y1="513.0" x2="217.5" y2="513.0" stroke="#082c1e" stroke-width="1"/><line x1="808.5" y1="513.0" x2="811" y2="513.0" stroke="#082c1e" stroke-width="1"/><line x1="511.5" y1="515.5" x2="514.5" y2="515.5" stroke="#082c1e" stroke-width="1"/><line x1="215" y1="515.5" x2="217.5" y2="515.5" stroke="#082c1e" stroke-width="1"/><line x1="808.5" y1="515.5" x2="811" y2="515.5" stroke="#082c1e" stroke-width="1"/><line x1="511.5" y1="518.0" x2="514.5" y2="518.0" stroke="#082c1e" stroke-width="1"/><line x1="215" y1="518.0" x2="217.5" y2="518.0" stroke="#082c1e" stroke-width="1"/><line x1="808.5" y1="518.0" x2="811" y2="518.0" stroke="#082c1e" stroke-width="1"/><line x1="511.5" y1="520.5" x2="514.5" y2="520.5" stroke="#082c1e" stroke-width="1"/><line x1="215" y1="520.5" x2="217.5" y2="520.5" stroke="#082c1e" stroke-width="1"/><line x1="808.5" y1="520.5" x2="811" y2="520.5" stroke="#082c1e" stroke-width="1"/><line x1="511.5" y1="523.1" x2="514.5" y2="523.1" stroke="#082c1e" stroke-width="1"/><line x1="215" y1="523.1" x2="217.5" y2="523.1" stroke="#082c1e" stroke-width="1"/><line x1="808.5" y1="523.1" x2="811" y2="523.1" stroke="#082c1e" stroke-width="1"/><line x1="511.5" y1="525.6" x2="514.5" y2="525.6" stroke="#082c1e" stroke-width="1"/><line x1="215" y1="525.6" x2="217.5" y2="525.6" stroke="#082c1e" stroke-width="1"/><line x1="808.5" y1="525.6" x2="811" y2="525.6" stroke="#082c1e" stroke-width="1"/><line x1="511.5" y1="528.1" x2="514.5" y2="528.1" stroke="#082c1e" stroke-width="1"/><line x1="215" y1="528.1" x2="217.5" y2="528.1" stroke="#082c1e" stroke-width="1"/><line x1="808.5" y1="528.1" x2="811" y2="528.1" stroke="#082c1e" stroke-width="1"/><line x1="511.5" y1="530.6" x2="514.5" y2="530.6" stroke="#082c1e" stroke-width="1"/><line x1="215" y1="530.6" x2="217.5" y2="530.6" stroke="#082c1e" stroke-width="1"/><line x1="808.5" y1="530.6" x2="811" y2="530.6" stroke="#082c1e" stroke-width="1"/><line x1="511.5" y1="533.2" x2="514.5" y2="533.2" stroke="#082c1e" stroke-width="1"/><line x1="215" y1="533.2" x2="217.5" y2="533.2" stroke="#082c1e" stroke-width="1"/><line x1="808.5" y1="533.2" x2="811" y2="533.2" stroke="#082c1e" stroke-width="1"/><line x1="511.5" y1="535.7" x2="514.5" y2="535.7" stroke="#082c1e" stroke-width="1"/><line x1="215" y1="535.7" x2="217.5" y2="535.7" stroke="#082c1e" stroke-width="1"/><line x1="808.5" y1="535.7" x2="811" y2="535.7" stroke="#082c1e" stroke-width="1"/><line x1="511.5" y1="538.2" x2="514.5" y2="538.2" stroke="#082c1e" stroke-width="1"/><line x1="215" y1="538.2" x2="217.5" y2="538.2" stroke="#082c1e" stroke-width="1"/><line x1="808.5" y1="538.2" x2="811" y2="538.2" stroke="#082c1e" stroke-width="1"/><line x1="511.5" y1="540.8" x2="514.5" y2="540.8" stroke="#082c1e" stroke-width="1"/><line x1="215" y1="540.8" x2="217.5" y2="540.8" stroke="#082c1e" stroke-width="1"/><line x1="808.5" y1="540.8" x2="811" y2="540.8" stroke="#082c1e" stroke-width="1"/><line x1="511.5" y1="543.3" x2="514.5" y2="543.3" stroke="#082c1e" stroke-width="1"/><line x1="215" y1="543.3" x2="217.5" y2="543.3" stroke="#082c1e" stroke-width="1"/><line x1="808.5" y1="543.3" x2="811" y2="543.3" stroke="#082c1e" stroke-width="1"/><line x1="511.5" y1="545.8" x2="514.5" y2="545.8" stroke="#082c1e" stroke-width="1"/><line x1="215" y1="545.8" x2="217.5" y2="545.8" stroke="#082c1e" stroke-width="1"/><line x1="808.5" y1="545.8" x2="811" y2="545.8" stroke="#082c1e" stroke-width="1"/><line x1="511.5" y1="548.3" x2="514.5" y2="548.3" stroke="#082c1e" stroke-width="1"/><line x1="215" y1="548.3" x2="217.5" y2="548.3" stroke="#082c1e" stroke-width="1"/><line x1="808.5" y1="548.3" x2="811" y2="548.3" stroke="#082c1e" stroke-width="1"/><line x1="511.5" y1="550.9" x2="514.5" y2="550.9" stroke="#082c1e" stroke-width="1"/><line x1="215" y1="550.9" x2="217.5" y2="550.9" stroke="#082c1e" stroke-width="1"/><line x1="808.5" y1="550.9" x2="811" y2="550.9" stroke="#082c1e" stroke-width="1"/><line x1="511.5" y1="553.4" x2="514.5" y2="553.4" stroke="#082c1e" stroke-width="1"/><line x1="215" y1="553.4" x2="217.5" y2="553.4" stroke="#082c1e" stroke-width="1"/><line x1="808.5" y1="553.4" x2="811" y2="553.4" stroke="#082c1e" stroke-width="1"/><line x1="511.5" y1="555.9" x2="514.5" y2="555.9" stroke="#082c1e" stroke-width="1"/><line x1="215" y1="555.9" x2="217.5" y2="555.9" stroke="#082c1e" stroke-width="1"/><line x1="808.5" y1="555.9" x2="811" y2="555.9" stroke="#082c1e" stroke-width="1"/><line x1="511.5" y1="558.4" x2="514.5" y2="558.4" stroke="#082c1e" stroke-width="1"/><line x1="215" y1="558.4" x2="217.5" y2="558.4" stroke="#082c1e" stroke-width="1"/><line x1="808.5" y1="558.4" x2="811" y2="558.4" stroke="#082c1e" stroke-width="1"/><line x1="511.5" y1="561.0" x2="514.5" y2="561.0" stroke="#082c1e" stroke-width="1"/><line x1="215" y1="561.0" x2="217.5" y2="561.0" stroke="#082c1e" stroke-width="1"/><line x1="808.5" y1="561.0" x2="811" y2="561.0" stroke="#082c1e" stroke-width="1"/><line x1="511.5" y1="563.5" x2="514.5" y2="563.5" stroke="#082c1e" stroke-width="1"/><line x1="215" y1="563.5" x2="217.5" y2="563.5" stroke="#082c1e" stroke-width="1"/><line x1="808.5" y1="563.5" x2="811" y2="563.5" stroke="#082c1e" stroke-width="1"/><path d="M215.5,192.2 L216.0,196.9 L216.5,201.1 L217.0,202.2 L217.5,204.0 L218.0,204.1 L218.5,203.7 L219.0,204.5 L219.5,203.7 L220.0,204.3 L220.5,203.6 L221.0,203.1 L221.5,202.5 L222.0,200.9 L222.5,196.0 L223.0,190.9 L223.5,185.1 L224.0,178.3 L224.5,170.1 L225.0,162.1 L225.5,155.2 L226.0,145.9 L226.5,139.5 L227.0,131.1 L227.5,123.9 L228.0,117.8 L228.5,113.4 L229.0,111.1 L229.5,108.3 L230.0,108.1 L230.5,107.9 L231.0,107.3 L231.5,107.6 L232.0,106.9 L232.5,107.0 L233.0,107.7 L233.5,109.7 L234.0,111.6 L234.5,115.1 L235.0,120.8 L235.5,127.1 L236.0,134.1 L236.5,142.5 L237.0,150.1 L237.5,157.2 L238.0,165.5 L238.5,173.1 L239.0,181.2 L239.5,187.9 L240.0,193.3 L240.5,199.1 L241.0,200.8 L241.5,203.1 L242.0,204.5 L242.5,203.8 L243.0,204.5 L243.5,203.8 L244.0,204.8 L244.5,204.9 L245.0,204.6 L245.5,205.1 L246.0,204.2 L246.5,204.8 L247.0,204.7 L247.5,204.6 L248.0,204.4 L248.5,205.0 L249.0,205.2 L249.5,204.5 L250.0,204.8 L250.5,203.8 L251.0,204.8 L251.5,204.7 L252.0,205.3 L252.5,205.0 L253.0,204.2 L253.5,204.3 L254.0,204.8 L254.5,203.7 L255.0,204.4 L255.5,203.9 L256.0,203.7 L256.5,203.2 L257.0,203.3 L257.5,200.3 L258.0,197.0 L258.5,192.3 L259.0,186.8 L259.5,178.4 L260.0,171.5 L260.5,163.9 L261.0,156.6 L261.5,148.7 L262.0,141.0 L262.5,132.5 L263.0,125.7 L263.5,119.3 L264.0,115.2 L264.5,111.9 L265.0,108.5 L265.5,107.6 L266.0,107.2 L266.5,107.1 L267.0,107.5 L267.5,107.7 L268.0,107.3 L268.5,107.3 L269.0,109.0 L269.5,110.9 L270.0,114.7 L270.5,120.3 L271.0,126.1 L271.5,132.9 L272.0,140.6 L272.5,148.5 L273.0,155.3 L273.5,164.4 L274.0,172.0 L274.5,179.7 L275.0,186.7 L275.5,192.3 L276.0,197.3 L276.5,200.2 L277.0,203.1 L277.5,203.2 L278.0,203.6 L278.5,204.0 L279.0,204.0 L279.5,204.2 L280.0,203.7 L280.5,203.5 L281.0,203.4 L281.5,202.3 L282.0,200.7 L282.5,196.7 L283.0,193.1 L283.5,186.4 L284.0,178.5 L284.5,171.1 L285.0,163.6 L285.5,155.8 L286.0,147.6 L286.5,141.0 L287.0,133.7 L287.5,125.7 L288.0,119.5 L288.5,113.9 L289.0,110.5 L289.5,108.8 L290.0,107.7 L290.5,108.2 L291.0,107.0 L291.5,106.7 L292.0,108.2 L292.5,107.5 L293.0,106.9 L293.5,107.6 L294.0,106.7 L294.5,107.5 L295.0,108.3 L295.5,108.1 L296.0,107.8 L296.5,107.1 L297.0,107.3 L297.5,107.0 L298.0,107.9 L298.5,107.6 L299.0,107.9 L299.5,107.2 L300.0,107.1 L300.5,108.0 L301.0,108.3 L301.5,108.1 L302.0,108.0 L302.5,108.0 L303.0,107.9 L303.5,107.1 L304.0,107.5 L304.5,107.3 L305.0,106.7 L305.5,106.7 L306.0,107.1 L306.5,107.1 L307.0,107.8 L307.5,108.2 L308.0,107.4 L308.5,108.2 L309.0,108.3 L309.5,108.2 L310.0,107.3 L310.5,107.1 L311.0,107.1 L311.5,107.0 L312.0,107.0 L312.5,107.7 L313.0,108.1 L313.5,108.0 L314.0,107.5 L314.5,107.7 L315.0,108.0 L315.5,106.9 L316.0,108.0 L316.5,109.0 L317.0,110.2 L317.5,112.7 L318.0,116.3 L318.5,121.4 L319.0,129.0 L319.5,135.6 L320.0,144.0 L320.5,152.1 L321.0,159.0 L321.5,166.8 L322.0,175.3 L322.5,182.4 L323.0,188.3 L323.5,194.0 L324.0,198.4 L324.5,202.5 L325.0,203.9 L325.5,203.6 L326.0,204.9 L326.5,205.2 L327.0,204.7 L327.5,204.3 L328.0,204.5 L328.5,203.7 L329.0,203.1 L329.5,203.7 L330.0,201.1 L330.5,197.5 L331.0,193.2 L331.5,186.1 L332.0,179.7 L332.5,172.1 L333.0,163.3 L333.5,155.6 L334.0,147.9 L334.5,140.0 L335.0,133.0 L335.5,125.4 L336.0,119.4 L336.5,114.0 L337.0,111.8 L337.5,108.8 L338.0,108.0 L338.5,107.8 L339.0,108.2 L339.5,107.4 L340.0,108.2 L340.5,107.5 L341.0,107.6 L341.5,107.5 L342.0,106.7 L342.5,107.4 L343.0,107.0 L343.5,106.7 L344.0,108.0 L344.5,107.0 L345.0,107.5 L345.5,107.9 L346.0,107.6 L346.5,107.2 L347.0,107.5 L347.5,107.6 L348.0,108.0 L348.5,106.9 L349.0,107.6 L349.5,107.1 L350.0,107.1 L350.5,107.9 L351.0,107.5 L351.5,107.6 L352.0,107.9 L352.5,108.2 L353.0,107.4 L353.5,107.7 L354.0,107.5 L354.5,107.5 L355.0,107.8 L355.5,107.4 L356.0,107.6 L356.5,107.5 L357.0,108.2 L357.5,107.8 L358.0,108.1 L358.5,108.2 L359.0,107.1 L359.5,107.6 L360.0,108.2 L360.5,108.0 L361.0,106.9 L361.5,106.9 L362.0,107.4 L362.5,106.9 L363.0,107.3 L363.5,107.4 L364.0,109.4 L364.5,111.6 L365.0,115.2 L365.5,119.0 L366.0,126.1 L366.5,133.2 L367.0,139.9 L367.5,148.8 L368.0,156.7 L368.5,163.4 L369.0,172.3 L369.5,178.9 L370.0,186.2 L370.5,193.2 L371.0,198.0 L371.5,200.3 L372.0,202.8 L372.5,203.9 L373.0,204.1 L373.5,204.0 L374.0,204.2 L374.5,204.9 L375.0,203.7 L375.5,204.6 L376.0,204.4 L376.5,203.7 L377.0,204.2 L377.5,204.7 L378.0,204.5 L378.5,203.8 L379.0,205.3 L379.5,205.0 L380.0,205.3 L380.5,203.9 L381.0,204.1 L381.5,203.8 L382.0,204.9 L382.5,204.1 L383.0,203.9 L383.5,204.4 L384.0,205.2 L384.5,205.0 L385.0,204.1 L385.5,203.9 L386.0,205.2 L386.5,204.5 L387.0,204.5 L387.5,203.0 L388.0,201.6 L388.5,200.0 L389.0,195.5 L389.5,189.4 L390.0,184.2 L390.5,176.3 L391.0,168.9 L391.5,160.0 L392.0,153.4 L392.5,144.4 L393.0,138.0 L393.5,129.9 L394.0,122.9 L394.5,117.5 L395.0,113.7 L395.5,109.8 L396.0,108.0 L396.5,107.9 L397.0,107.2 L397.5,106.9 L398.0,107.0 L398.5,106.8 L399.0,107.0 L399.5,107.2 L400.0,107.2 L400.5,107.9 L401.0,107.2 L401.5,107.5 L402.0,107.0 L402.5,107.3 L403.0,106.7 L403.5,107.1 L404.0,106.7 L404.5,107.9 L405.0,107.6 L405.5,107.0 L406.0,107.5 L406.5,108.2 L407.0,106.9 L407.5,108.0 L408.0,107.4 L408.5,107.5 L409.0,108.0 L409.5,107.3 L410.0,107.5 L410.5,107.9 L411.0,108.7 L411.5,108.5 L412.0,111.1 L412.5,114.0 L413.0,118.6 L413.5,124.3 L414.0,131.2 L414.5,138.2 L415.0,146.0 L415.5,153.8 L416.0,162.6 L416.5,169.6 L417.0,177.1 L417.5,184.2 L418.0,191.9 L418.5,197.2 L419.0,200.6 L419.5,202.3 L420.0,203.4 L420.5,203.9 L421.0,204.4 L421.5,203.9 L422.0,204.4 L422.5,204.1 L423.0,205.2 L423.5,205.3 L424.0,204.6 L424.5,204.1 L425.0,205.2 L425.5,204.2 L426.0,204.3 L426.5,203.7 L427.0,204.3 L427.5,204.5 L428.0,204.5 L428.5,204.0 L429.0,204.5 L429.5,203.7 L430.0,204.1 L430.5,203.8 L431.0,204.3 L431.5,203.8 L432.0,203.7 L432.5,204.2 L433.0,204.1 L433.5,204.6 L434.0,204.5 L434.5,204.9 L435.0,204.7 L435.5,204.6 L436.0,204.4 L436.5,202.4 L437.0,200.1 L437.5,197.3 L438.0,190.8 L438.5,185.2 L439.0,177.8 L439.5,169.3 L440.0,162.8 L440.5,155.1 L441.0,146.8 L441.5,139.3 L442.0,131.9 L442.5,123.9 L443.0,118.4 L443.5,113.7 L444.0,111.1 L444.5,109.3 L445.0,108.5 L445.5,107.8 L446.0,108.4 L446.5,108.5 L447.0,109.7 L447.5,111.2 L448.0,114.7 L448.5,120.1 L449.0,126.9 L449.5,133.8 L450.0,142.5 L450.5,149.9 L451.0,157.8 L451.5,165.6 L452.0,173.4 L452.5,180.6 L453.0,186.8 L453.5,194.1 L454.0,198.7 L454.5,201.4 L455.0,203.3 L455.5,204.3 L456.0,203.7 L456.5,204.8 L457.0,204.1 L457.5,203.8 L458.0,204.1 L458.5,204.7 L459.0,203.6 L459.5,203.6 L460.0,202.2 L460.5,198.3 L461.0,193.4 L461.5,187.5 L462.0,180.9 L462.5,173.5 L463.0,165.5 L463.5,157.8 L464.0,149.1 L464.5,141.4 L465.0,134.0 L465.5,127.5 L466.0,120.4 L466.5,115.5 L467.0,110.9 L467.5,108.7 L468.0,107.8 L468.5,108.0 L469.0,107.9 L469.5,107.8 L470.0,107.2 L470.5,107.8 L471.0,108.3 L471.5,109.7 L472.0,111.7 L472.5,117.0 L473.0,121.4 L473.5,129.3 L474.0,136.6 L474.5,142.8 L475.0,151.3 L475.5,159.6 L476.0,167.7 L476.5,174.5 L477.0,181.6 L477.5,188.4 L478.0,195.3 L478.5,198.5 L479.0,202.0 L479.5,202.8 L480.0,204.2 L480.5,205.1 L481.0,203.9 L481.5,205.0 L482.0,204.5 L482.5,205.0 L483.0,204.5 L483.5,203.0 L484.0,202.5 L484.5,199.0 L485.0,193.9 L485.5,188.0 L486.0,182.0 L486.5,174.5 L487.0,166.6 L487.5,158.5 L488.0,151.1 L488.5,143.2 L489.0,136.4 L489.5,127.8 L490.0,122.3 L490.5,116.9 L491.0,111.7 L491.5,110.4 L492.0,108.7 L492.5,108.4 L493.0,107.2 L493.5,107.3 L494.0,107.4 L494.5,108.6 L495.0,108.5 L495.5,109.5 L496.0,112.2 L496.5,116.0 L497.0,121.2 L497.5,127.9 L498.0,136.4 L498.5,143.2 L499.0,152.0 L499.5,158.7 L500.0,166.5 L500.5,174.6 L501.0,181.5 L501.5,188.6 L502.0,195.4 L502.5,199.6 L503.0,202.3 L503.5,203.6 L504.0,204.8 L504.5,205.1 L505.0,204.6 L505.5,204.8 L506.0,203.7 L506.5,204.5 L507.0,203.3 L507.5,202.3 L508.0,199.2 L508.5,194.3 L509.0,188.1 L509.5,182.7 L510.0,174.0 L510.5,166.9 L511.0,158.9 L511.5,151.0 L512.0,143.9 L512.5,136.6 L513.0,128.2 L513.5,122.1 L514.0,116.0 L514.5,112.4 L515.0,109.6 L515.5,107.8 L516.0,107.2 L516.5,107.1 L517.0,108.2 L517.5,107.5 L518.0,107.1 L518.5,108.2 L519.0,108.3 L519.5,107.4 L520.0,106.9 L520.5,107.0 L521.0,106.8 L521.5,107.2 L522.0,106.8 L522.5,107.1 L523.0,107.1 L523.5,107.6 L524.0,108.1 L524.5,107.9 L525.0,107.4 L525.5,107.4 L526.0,107.5 L526.5,107.3 L527.0,107.2 L527.5,106.8 L528.0,107.1 L528.5,108.2 L529.0,106.9 L529.5,107.5 L530.0,107.7 L530.5,108.1 L531.0,107.0 L531.5,107.1 L532.0,107.1 L532.5,107.3 L533.0,107.4 L533.5,108.2 L534.0,108.1 L534.5,108.1 L535.0,106.7 L535.5,106.8 L536.0,107.8 L536.5,108.1 L537.0,107.5 L537.5,107.6 L538.0,106.7 L538.5,107.3 L539.0,108.2 L539.5,108.0 L540.0,108.1 L540.5,108.3 L541.0,107.1 L541.5,106.9 L542.0,106.9 L542.5,107.5 L543.0,107.8 L543.5,108.2 L544.0,107.9 L544.5,107.7 L545.0,107.9 L545.5,107.4 L546.0,107.6 L546.5,106.8 L547.0,108.0 L547.5,107.1 L548.0,108.2 L548.5,107.7 L549.0,107.2 L549.5,106.9 L550.0,107.1 L550.5,107.7 L551.0,107.8 L551.5,106.9 L552.0,106.8 L552.5,107.5 L553.0,107.6 L553.5,107.3 L554.0,107.1 L554.5,107.7 L555.0,106.7 L555.5,107.2 L556.0,107.4 L556.5,108.2 L557.0,107.7 L557.5,108.1 L558.0,107.5 L558.5,107.1 L559.0,107.1 L559.5,108.2 L560.0,107.8 L560.5,107.2 L561.0,106.7 L561.5,107.5 L562.0,107.8 L562.5,107.4 L563.0,107.1 L563.5,107.8 L564.0,108.2 L564.5,107.1 L565.0,106.8 L565.5,107.2 L566.0,107.4 L566.5,107.8 L567.0,107.0 L567.5,108.0 L568.0,107.9 L568.5,107.5 L569.0,107.0 L569.5,108.3 L570.0,107.2 L570.5,108.0 L571.0,107.1 L571.5,107.1 L572.0,107.9 L572.5,107.2 L573.0,108.2 L573.5,107.5 L574.0,107.0 L574.5,107.1 L575.0,107.4 L575.5,107.8 L576.0,108.2 L576.5,106.9 L577.0,107.3 L577.5,107.0 L578.0,108.3 L578.5,106.9 L579.0,106.8 L579.5,106.8 L580.0,107.3 L580.5,108.1 L581.0,108.1 L581.5,107.9 L582.0,108.3 L582.5,108.2 L583.0,107.2 L583.5,107.0 L584.0,108.2 L584.5,107.9 L585.0,106.8 L585.5,107.8 L586.0,107.3 L586.5,107.3 L587.0,107.2 L587.5,107.0 L588.0,106.7 L588.5,107.2 L589.0,107.3 L589.5,108.4 L590.0,107.3 L590.5,109.5 L591.0,110.1 L591.5,113.5 L592.0,118.9 L592.5,124.9 L593.0,131.3 L593.5,138.2 L594.0,146.6 L594.5,154.2 L595.0,162.9 L595.5,169.5 L596.0,177.4 L596.5,185.5 L597.0,190.6 L597.5,196.4 L598.0,200.8 L598.5,203.0 L599.0,203.1 L599.5,203.5 L600.0,203.7 L600.5,205.2 L601.0,204.1 L601.5,204.9 L602.0,205.1 L602.5,204.2 L603.0,204.1 L603.5,205.2 L604.0,204.7 L604.5,204.1 L605.0,204.8 L605.5,204.2 L606.0,204.1 L606.5,203.7 L607.0,204.9 L607.5,205.2 L608.0,204.7 L608.5,205.2 L609.0,203.7 L609.5,204.1 L610.0,204.5 L610.5,205.2 L611.0,205.2 L611.5,204.3 L612.0,204.1 L612.5,204.4 L613.0,204.5 L613.5,205.2 L614.0,204.0 L614.5,205.0 L615.0,204.9 L615.5,205.0 L616.0,204.9 L616.5,204.7 L617.0,204.2 L617.5,204.2 L618.0,204.3 L618.5,205.0 L619.0,203.8 L619.5,204.0 L620.0,204.9 L620.5,204.1 L621.0,203.8 L621.5,203.8 L622.0,204.6 L622.5,204.2 L623.0,205.3 L623.5,205.1 L624.0,205.3 L624.5,204.1 L625.0,203.8 L625.5,203.9 L626.0,204.5 L626.5,204.8 L627.0,204.4 L627.5,204.1 L628.0,204.4 L628.5,204.7 L629.0,204.8 L629.5,204.9 L630.0,205.1 L630.5,204.8 L631.0,203.9 L631.5,205.0 L632.0,204.2 L632.5,204.6 L633.0,204.3 L633.5,204.9 L634.0,204.0 L634.5,204.1 L635.0,204.1 L635.5,203.9 L636.0,205.1 L636.5,204.6 L637.0,204.2 L637.5,204.3 L638.0,205.3 L638.5,204.5 L639.0,204.1 L639.5,205.0 L640.0,204.7 L640.5,205.3 L641.0,203.9 L641.5,204.5 L642.0,205.0 L642.5,205.0 L643.0,205.2 L643.5,203.8 L644.0,204.2 L644.5,203.9 L645.0,204.0 L645.5,205.3 L646.0,204.6 L646.5,205.2 L647.0,204.3 L647.5,205.1 L648.0,204.4 L648.5,204.1 L649.0,204.9 L649.5,205.2 L650.0,203.9 L650.5,204.7 L651.0,204.7 L651.5,204.0 L652.0,204.3 L652.5,203.9 L653.0,204.0 L653.5,204.1 L654.0,204.7 L654.5,204.7 L655.0,204.0 L655.5,203.7 L656.0,204.2 L656.5,204.8 L657.0,204.0 L657.5,204.2 L658.0,204.0 L658.5,205.0 L659.0,204.6 L659.5,203.8 L660.0,203.9 L660.5,204.3 L661.0,204.4 L661.5,204.1 L662.0,202.3 L662.5,200.3 L663.0,197.7 L663.5,192.3 L664.0,185.9 L664.5,178.8 L665.0,172.3 L665.5,163.5 L666.0,156.1 L666.5,148.0 L667.0,140.3 L667.5,133.5 L668.0,126.6 L668.5,119.3 L669.0,114.1 L669.5,111.5 L670.0,108.6 L670.5,107.3 L671.0,108.3 L671.5,107.4 L672.0,108.0 L672.5,107.4 L673.0,108.3 L673.5,108.1 L674.0,108.8 L674.5,110.9 L675.0,115.5 L675.5,120.9 L676.0,127.8 L676.5,133.7 L677.0,142.2 L677.5,149.6 L678.0,157.6 L678.5,164.8 L679.0,172.7 L679.5,180.6 L680.0,188.3 L680.5,193.0 L681.0,198.3 L681.5,201.9 L682.0,204.0 L682.5,203.6 L683.0,203.8 L683.5,205.2 L684.0,205.3 L684.5,204.5 L685.0,203.8 L685.5,205.2 L686.0,204.3 L686.5,205.1 L687.0,204.7 L687.5,205.0 L688.0,204.0 L688.5,205.0 L689.0,204.1 L689.5,204.3 L690.0,205.1 L690.5,205.0 L691.0,204.0 L691.5,204.0 L692.0,204.3 L692.5,204.5 L693.0,204.3 L693.5,203.9 L694.0,204.1 L694.5,204.9 L695.0,205.1 L695.5,203.8 L696.0,204.6 L696.5,204.9 L697.0,203.8 L697.5,205.0 L698.0,203.9 L698.5,204.7 L699.0,204.6 L699.5,204.7 L700.0,204.2 L700.5,204.4 L701.0,204.6 L701.5,204.4 L702.0,204.8 L702.5,204.4 L703.0,204.4 L703.5,203.7 L704.0,204.7 L704.5,204.5 L705.0,204.1 L705.5,204.9 L706.0,204.9 L706.5,204.4 L707.0,204.0 L707.5,204.5 L708.0,203.9 L708.5,203.9 L709.0,204.4 L709.5,203.8 L710.0,204.4 L710.5,204.5 L711.0,203.8 L711.5,204.7 L712.0,203.8 L712.5,204.9 L713.0,204.9 L713.5,204.5 L714.0,203.8 L714.5,204.5 L715.0,204.3 L715.5,205.2 L716.0,203.9 L716.5,205.1 L717.0,205.3 L717.5,204.9 L718.0,205.0 L718.5,204.0 L719.0,205.3 L719.5,204.5 L720.0,205.2 L720.5,205.2 L721.0,204.0 L721.5,205.0 L722.0,205.2 L722.5,203.8 L723.0,204.3 L723.5,204.9 L724.0,204.0 L724.5,205.1 L725.0,204.1 L725.5,205.0 L726.0,203.9 L726.5,204.5 L727.0,205.2 L727.5,204.0 L728.0,204.1 L728.5,204.5 L729.0,204.2 L729.5,203.8 L730.0,204.0 L730.5,204.0 L731.0,205.2 L731.5,204.8 L732.0,205.0 L732.5,203.5 L733.0,203.7 L733.5,200.8 L734.0,198.3 L734.5,193.8 L735.0,187.3 L735.5,181.2 L736.0,173.2 L736.5,165.5 L737.0,158.2 L737.5,149.1 L738.0,142.8 L738.5,134.6 L739.0,127.0 L739.5,121.2 L740.0,115.1 L740.5,112.5 L741.0,109.5 L741.5,108.0 L742.0,108.1 L742.5,107.5 L743.0,107.0 L743.5,107.9 L744.0,106.8 L744.5,108.0 L745.0,107.1 L745.5,107.7 L746.0,108.3 L746.5,107.6 L747.0,107.8 L747.5,107.2 L748.0,106.7 L748.5,106.8 L749.0,106.9 L749.5,107.7 L750.0,107.4 L750.5,107.5 L751.0,108.1 L751.5,106.9 L752.0,107.1 L752.5,107.7 L753.0,106.7 L753.5,106.7 L754.0,107.3 L754.5,106.9 L755.0,107.3 L755.5,107.1 L756.0,107.7 L756.5,107.8 L757.0,107.6 L757.5,109.3 L758.0,111.1 L758.5,114.0 L759.0,120.2 L759.5,125.4 L760.0,132.3 L760.5,139.8 L761.0,148.4 L761.5,156.6 L762.0,164.3 L762.5,171.4 L763.0,178.7 L763.5,185.4 L764.0,192.7 L764.5,197.5 L765.0,200.6 L765.5,203.2 L766.0,203.8 L766.5,205.0 L767.0,204.8 L767.5,204.1 L768.0,205.1 L768.5,203.8 L769.0,204.6 L769.5,204.3 L770.0,204.1 L770.5,203.8 L771.0,204.9 L771.5,203.7 L772.0,204.6 L772.5,205.2 L773.0,203.9 L773.5,204.0 L774.0,204.7 L774.5,204.5 L775.0,204.7 L775.5,205.0 L776.0,204.0 L776.5,204.2 L777.0,204.2 L777.5,203.8 L778.0,205.1 L778.5,205.0 L779.0,204.8 L779.5,203.7 L780.0,205.1 L780.5,204.9 L781.0,204.4 L781.5,204.9 L782.0,204.4 L782.5,204.1 L783.0,203.9 L783.5,204.1 L784.0,203.8 L784.5,204.2 L785.0,204.9 L785.5,204.8 L786.0,205.1 L786.5,204.8 L787.0,204.1 L787.5,204.6 L788.0,204.4 L788.5,205.0 L789.0,204.5 L789.5,204.1 L790.0,204.7 L790.5,205.2 L791.0,204.0 L791.5,205.1 L792.0,203.7 L792.5,204.1 L793.0,204.1 L793.5,204.9 L794.0,205.2 L794.5,204.9 L795.0,204.2 L795.5,205.1 L796.0,204.2 L796.5,204.1 L797.0,205.2 L797.5,204.7 L798.0,204.8 L798.5,204.8 L799.0,205.3 L799.5,204.5 L800.0,205.0 L800.5,204.8 L801.0,205.1 L801.5,204.4 L802.0,204.8 L802.5,204.3 L803.0,203.3 L803.5,201.8 L804.0,199.9 L804.5,195.0 L805.0,190.8 L805.5,182.9 L806.0,175.4 L806.5,167.8 L807.0,161.4 L807.5,152.6 L808.0,144.5 L808.5,136.6 L809.0,129.2 L809.5,123.5 L810.0,117.6 L810.5,113.3" fill="none" stroke="#ece98e" stroke-width="1.6"/><path d="M215.5,288.5 L216.0,288.6 L216.5,288.8 L217.0,289.0 L217.5,289.2 L218.0,289.4 L218.5,289.6 L219.0,289.8 L219.5,290.0 L220.0,290.2 L220.5,290.3 L221.0,290.5 L221.5,290.7 L222.0,290.9 L222.5,291.1 L223.0,291.3 L223.5,291.4 L224.0,291.5 L224.5,291.6 L225.0,291.7 L225.5,291.7 L226.0,291.7 L226.5,291.6 L227.0,291.6 L227.5,291.5 L228.0,291.4 L228.5,291.2 L229.0,291.0 L229.5,290.8 L230.0,290.7 L230.5,290.5 L231.0,290.3 L231.5,290.1 L232.0,289.9 L232.5,289.7 L233.0,289.5 L233.5,289.3 L234.0,289.1 L234.5,288.9 L235.0,288.8 L235.5,288.6 L236.0,288.5 L236.5,288.4 L237.0,288.4 L237.5,288.3 L238.0,288.4 L238.5,288.4 L239.0,288.5 L239.5,288.6 L240.0,288.7 L240.5,288.8 L241.0,289.0 L241.5,289.2 L242.0,289.4 L242.5,289.6 L243.0,289.8 L243.5,290.0 L244.0,290.2 L244.5,290.3 L245.0,290.5 L245.5,290.7 L246.0,290.9 L246.5,291.1 L247.0,291.3 L247.5,291.5 L248.0,291.7 L248.5,291.9 L249.0,292.1 L249.5,292.3 L250.0,292.5 L250.5,292.7 L251.0,292.9 L251.5,293.1 L252.0,293.3 L252.5,293.5 L253.0,293.7 L253.5,293.9 L254.0,294.1 L254.5,294.2 L255.0,294.4 L255.5,294.6 L256.0,294.8 L256.5,295.0 L257.0,295.2 L257.5,295.4 L258.0,295.6 L258.5,295.8 L259.0,295.9 L259.5,296.0 L260.0,296.1 L260.5,296.2 L261.0,296.2 L261.5,296.2 L262.0,296.2 L262.5,296.1 L263.0,296.0 L263.5,295.9 L264.0,295.8 L264.5,295.6 L265.0,295.4 L265.5,295.2 L266.0,295.0 L266.5,294.8 L267.0,294.6 L267.5,294.4 L268.0,294.2 L268.5,294.1 L269.0,293.9 L269.5,293.7 L270.0,293.5 L270.5,293.3 L271.0,293.2 L271.5,293.1 L272.0,293.0 L272.5,292.9 L273.0,292.9 L273.5,292.9 L274.0,292.9 L274.5,293.0 L275.0,293.1 L275.5,293.2 L276.0,293.3 L276.5,293.5 L277.0,293.7 L277.5,293.9 L278.0,294.1 L278.5,294.2 L279.0,294.4 L279.5,294.6 L280.0,294.8 L280.5,295.0 L281.0,295.2 L281.5,295.4 L282.0,295.6 L282.5,295.8 L283.0,296.0 L283.5,296.1 L284.0,296.2 L284.5,296.3 L285.0,296.4 L285.5,296.4 L286.0,296.4 L286.5,296.4 L287.0,296.3 L287.5,296.2 L288.0,296.1 L288.5,296.0 L289.0,295.8 L289.5,295.6 L290.0,295.4 L290.5,295.2 L291.0,295.0 L291.5,294.8 L292.0,294.6 L292.5,294.4 L293.0,294.2 L293.5,294.1 L294.0,293.9 L294.5,293.7 L295.0,293.5 L295.5,293.3 L296.0,293.1 L296.5,292.9 L297.0,292.7 L297.5,292.5 L298.0,292.3 L298.5,292.1 L299.0,291.9 L299.5,291.7 L300.0,291.5 L300.5,291.3 L301.0,291.1 L301.5,290.9 L302.0,290.7 L302.5,290.5 L303.0,290.3 L303.5,290.2 L304.0,290.0 L304.5,289.8 L305.0,289.6 L305.5,289.4 L306.0,289.2 L306.5,289.0 L307.0,288.8 L307.5,288.6 L308.0,288.4 L308.5,288.2 L309.0,288.0 L309.5,287.8 L310.0,287.6 L310.5,287.4 L311.0,287.2 L311.5,287.0 L312.0,286.8 L312.5,286.6 L313.0,286.4 L313.5,286.3 L314.0,286.1 L314.5,285.9 L315.0,285.7 L315.5,285.5 L316.0,285.3 L316.5,285.1 L317.0,284.9 L317.5,284.7 L318.0,284.5 L318.5,284.4 L319.0,284.2 L319.5,284.1 L320.0,284.0 L320.5,284.0 L321.0,284.0 L321.5,284.0 L322.0,284.0 L322.5,284.1 L323.0,284.2 L323.5,284.3 L324.0,284.5 L324.5,284.7 L325.0,284.9 L325.5,285.0 L326.0,285.2 L326.5,285.4 L327.0,285.6 L327.5,285.8 L328.0,286.0 L328.5,286.2 L329.0,286.4 L329.5,286.6 L330.0,286.8 L330.5,287.0 L331.0,287.1 L331.5,287.3 L332.0,287.4 L332.5,287.5 L333.0,287.6 L333.5,287.6 L334.0,287.6 L334.5,287.6 L335.0,287.5 L335.5,287.4 L336.0,287.3 L336.5,287.1 L337.0,287.0 L337.5,286.8 L338.0,286.6 L338.5,286.4 L339.0,286.2 L339.5,286.0 L340.0,285.8 L340.5,285.6 L341.0,285.4 L341.5,285.2 L342.0,285.0 L342.5,284.8 L343.0,284.7 L343.5,284.5 L344.0,284.3 L344.5,284.1 L345.0,283.9 L345.5,283.7 L346.0,283.5 L346.5,283.3 L347.0,283.1 L347.5,282.9 L348.0,282.7 L348.5,282.5 L349.0,282.3 L349.5,282.1 L350.0,281.9 L350.5,281.7 L351.0,281.5 L351.5,281.3 L352.0,281.1 L352.5,280.9 L353.0,280.8 L353.5,280.6 L354.0,280.4 L354.5,280.2 L355.0,280.0 L355.5,279.8 L356.0,279.6 L356.5,279.4 L357.0,279.2 L357.5,279.0 L358.0,278.8 L358.5,278.6 L359.0,278.4 L359.5,278.2 L360.0,278.0 L360.5,277.8 L361.0,277.6 L361.5,277.4 L362.0,277.2 L362.5,277.0 L363.0,276.9 L363.5,276.7 L364.0,276.5 L364.5,276.3 L365.0,276.1 L365.5,275.9 L366.0,275.8 L366.5,275.7 L367.0,275.6 L367.5,275.5 L368.0,275.5 L368.5,275.5 L369.0,275.5 L369.5,275.6 L370.0,275.7 L370.5,275.8 L371.0,275.9 L371.5,276.1 L372.0,276.3 L372.5,276.5 L373.0,276.7 L373.5,276.9 L374.0,277.0 L374.5,277.2 L375.0,277.4 L375.5,277.6 L376.0,277.8 L376.5,278.0 L377.0,278.2 L377.5,278.4 L378.0,278.6 L378.5,278.8 L379.0,279.0 L379.5,279.2 L380.0,279.4 L380.5,279.6 L381.0,279.8 L381.5,280.0 L382.0,280.2 L382.5,280.4 L383.0,280.6 L383.5,280.8 L384.0,280.9 L384.5,281.1 L385.0,281.3 L385.5,281.5 L386.0,281.7 L386.5,281.9 L387.0,282.1 L387.5,282.3 L388.0,282.5 L388.5,282.7 L389.0,282.9 L389.5,283.0 L390.0,283.2 L390.5,283.3 L391.0,283.4 L391.5,283.4 L392.0,283.4 L392.5,283.4 L393.0,283.4 L393.5,283.3 L394.0,283.2 L394.5,283.1 L395.0,282.9 L395.5,282.7 L396.0,282.5 L396.5,282.4 L397.0,282.2 L397.5,282.0 L398.0,281.8 L398.5,281.6 L399.0,281.4 L399.5,281.2 L400.0,281.0 L400.5,280.8 L401.0,280.6 L401.5,280.4 L402.0,280.2 L402.5,280.0 L403.0,279.8 L403.5,279.6 L404.0,279.4 L404.5,279.2 L405.0,279.0 L405.5,278.8 L406.0,278.6 L406.5,278.5 L407.0,278.3 L407.5,278.1 L408.0,277.9 L408.5,277.7 L409.0,277.5 L409.5,277.3 L410.0,277.1 L410.5,276.9 L411.0,276.7 L411.5,276.5 L412.0,276.3 L412.5,276.1 L413.0,276.0 L413.5,275.8 L414.0,275.7 L414.5,275.6 L415.0,275.5 L415.5,275.5 L416.0,275.5 L416.5,275.5 L417.0,275.6 L417.5,275.6 L418.0,275.8 L418.5,275.9 L419.0,276.1 L419.5,276.2 L420.0,276.4 L420.5,276.6 L421.0,276.8 L421.5,277.0 L422.0,277.2 L422.5,277.4 L423.0,277.6 L423.5,277.8 L424.0,278.0 L424.5,278.2 L425.0,278.4 L425.5,278.6 L426.0,278.8 L426.5,279.0 L427.0,279.2 L427.5,279.4 L428.0,279.5 L428.5,279.7 L429.0,279.9 L429.5,280.1 L430.0,280.3 L430.5,280.5 L431.0,280.7 L431.5,280.9 L432.0,281.1 L432.5,281.3 L433.0,281.5 L433.5,281.7 L434.0,281.9 L434.5,282.1 L435.0,282.3 L435.5,282.5 L436.0,282.7 L436.5,282.9 L437.0,283.0 L437.5,283.2 L438.0,283.4 L438.5,283.5 L439.0,283.6 L439.5,283.7 L440.0,283.8 L440.5,283.8 L441.0,283.8 L441.5,283.8 L442.0,283.7 L442.5,283.6 L443.0,283.5 L443.5,283.3 L444.0,283.2 L444.5,283.0 L445.0,282.8 L445.5,282.6 L446.0,282.4 L446.5,282.2 L447.0,282.0 L447.5,281.8 L448.0,281.6 L448.5,281.5 L449.0,281.3 L449.5,281.2 L450.0,281.1 L450.5,281.1 L451.0,281.1 L451.5,281.1 L452.0,281.1 L452.5,281.2 L453.0,281.3 L453.5,281.4 L454.0,281.5 L454.5,281.7 L455.0,281.9 L455.5,282.1 L456.0,282.3 L456.5,282.5 L457.0,282.7 L457.5,282.9 L458.0,283.1 L458.5,283.3 L459.0,283.4 L459.5,283.6 L460.0,283.8 L460.5,284.0 L461.0,284.2 L461.5,284.3 L462.0,284.5 L462.5,284.6 L463.0,284.6 L463.5,284.7 L464.0,284.7 L464.5,284.6 L465.0,284.6 L465.5,284.5 L466.0,284.4 L466.5,284.2 L467.0,284.1 L467.5,283.9 L468.0,283.7 L468.5,283.5 L469.0,283.3 L469.5,283.1 L470.0,282.9 L470.5,282.7 L471.0,282.6 L471.5,282.4 L472.0,282.2 L472.5,282.0 L473.0,281.8 L473.5,281.7 L474.0,281.6 L474.5,281.5 L475.0,281.5 L475.5,281.4 L476.0,281.5 L476.5,281.5 L477.0,281.6 L477.5,281.7 L478.0,281.8 L478.5,282.0 L479.0,282.1 L479.5,282.3 L480.0,282.5 L480.5,282.7 L481.0,282.9 L481.5,283.1 L482.0,283.3 L482.5,283.5 L483.0,283.7 L483.5,283.9 L484.0,284.1 L484.5,284.2 L485.0,284.4 L485.5,284.6 L486.0,284.7 L486.5,284.8 L487.0,284.9 L487.5,284.9 L488.0,284.9 L488.5,284.9 L489.0,284.9 L489.5,284.8 L490.0,284.7 L490.5,284.5 L491.0,284.4 L491.5,284.2 L492.0,284.0 L492.5,283.8 L493.0,283.6 L493.5,283.4 L494.0,283.3 L494.5,283.1 L495.0,282.9 L495.5,282.7 L496.0,282.5 L496.5,282.3 L497.0,282.1 L497.5,282.0 L498.0,281.9 L498.5,281.8 L499.0,281.8 L499.5,281.8 L500.0,281.8 L500.5,281.8 L501.0,281.9 L501.5,282.0 L502.0,282.1 L502.5,282.3 L503.0,282.4 L503.5,282.6 L504.0,282.8 L504.5,283.0 L505.0,283.2 L505.5,283.4 L506.0,283.6 L506.5,283.8 L507.0,284.0 L507.5,284.2 L508.0,284.4 L508.5,284.5 L509.0,284.7 L509.5,284.8 L510.0,284.9 L510.5,285.0 L511.0,285.0 L511.5,285.1 L512.0,285.0 L512.5,285.0 L513.0,284.9 L513.5,284.8 L514.0,284.7 L514.5,284.5 L515.0,284.3 L515.5,284.1 L516.0,284.0 L516.5,283.8 L517.0,283.6 L517.5,283.4 L518.0,283.2 L518.5,283.0 L519.0,282.8 L519.5,282.6 L520.0,282.4 L520.5,282.2 L521.0,282.0 L521.5,281.8 L522.0,281.6 L522.5,281.4 L523.0,281.2 L523.5,281.0 L524.0,280.8 L524.5,280.6 L525.0,280.4 L525.5,280.2 L526.0,280.1 L526.5,279.9 L527.0,279.7 L527.5,279.5 L528.0,279.3 L528.5,279.1 L529.0,278.9 L529.5,278.7 L530.0,278.5 L530.5,278.3 L531.0,278.1 L531.5,277.9 L532.0,277.7 L532.5,277.5 L533.0,277.3 L533.5,277.1 L534.0,276.9 L534.5,276.7 L535.0,276.5 L535.5,276.3 L536.0,276.2 L536.5,276.0 L537.0,275.8 L537.5,275.6 L538.0,275.4 L538.5,275.2 L539.0,275.0 L539.5,274.8 L540.0,274.6 L540.5,274.4 L541.0,274.2 L541.5,274.0 L542.0,273.8 L542.5,273.6 L543.0,273.4 L543.5,273.2 L544.0,273.0 L544.5,272.8 L545.0,272.6 L545.5,272.4 L546.0,272.3 L546.5,272.1 L547.0,271.9 L547.5,271.7 L548.0,271.5 L548.5,271.3 L549.0,271.1 L549.5,270.9 L550.0,270.7 L550.5,270.5 L551.0,270.3 L551.5,270.1 L552.0,269.9 L552.5,269.7 L553.0,269.5 L553.5,269.3 L554.0,269.1 L554.5,268.9 L555.0,268.7 L555.5,268.5 L556.0,268.4 L556.5,268.2 L557.0,268.0 L557.5,267.8 L558.0,267.6 L558.5,267.4 L559.0,267.2 L559.5,267.0 L560.0,266.8 L560.5,266.6 L561.0,266.4 L561.5,266.2 L562.0,266.0 L562.5,265.8 L563.0,265.6 L563.5,265.4 L564.0,265.2 L564.5,265.0 L565.0,264.8 L565.5,264.6 L566.0,264.5 L566.5,264.3 L567.0,264.1 L567.5,263.9 L568.0,263.7 L568.5,263.5 L569.0,263.3 L569.5,263.1 L570.0,262.9 L570.5,262.7 L571.0,262.5 L571.5,262.3 L572.0,262.1 L572.5,261.9 L573.0,261.7 L573.5,261.5 L574.0,261.3 L574.5,261.1 L575.0,260.9 L575.5,260.7 L576.0,260.6 L576.5,260.4 L577.0,260.2 L577.5,260.0 L578.0,259.8 L578.5,259.6 L579.0,259.4 L579.5,259.2 L580.0,259.0 L580.5,258.8 L581.0,258.6 L581.5,258.4 L582.0,258.2 L582.5,258.0 L583.0,257.8 L583.5,257.6 L584.0,257.4 L584.5,257.2 L585.0,257.0 L585.5,256.8 L586.0,256.7 L586.5,256.5 L587.0,256.3 L587.5,256.1 L588.0,255.9 L588.5,255.7 L589.0,255.5 L589.5,255.3 L590.0,255.1 L590.5,254.9 L591.0,254.7 L591.5,254.5 L592.0,254.4 L592.5,254.2 L593.0,254.1 L593.5,254.0 L594.0,253.9 L594.5,253.9 L595.0,253.9 L595.5,253.9 L596.0,253.9 L596.5,254.0 L597.0,254.2 L597.5,254.3 L598.0,254.5 L598.5,254.6 L599.0,254.8 L599.5,255.0 L600.0,255.2 L600.5,255.4 L601.0,255.6 L601.5,255.8 L602.0,256.0 L602.5,256.2 L603.0,256.4 L603.5,256.6 L604.0,256.8 L604.5,257.0 L605.0,257.2 L605.5,257.4 L606.0,257.5 L606.5,257.7 L607.0,257.9 L607.5,258.1 L608.0,258.3 L608.5,258.5 L609.0,258.7 L609.5,258.9 L610.0,259.1 L610.5,259.3 L611.0,259.5 L611.5,259.7 L612.0,259.9 L612.5,260.1 L613.0,260.3 L613.5,260.5 L614.0,260.7 L614.5,260.9 L615.0,261.1 L615.5,261.3 L616.0,261.4 L616.5,261.6 L617.0,261.8 L617.5,262.0 L618.0,262.2 L618.5,262.4 L619.0,262.6 L619.5,262.8 L620.0,263.0 L620.5,263.2 L621.0,263.4 L621.5,263.6 L622.0,263.8 L622.5,264.0 L623.0,264.2 L623.5,264.4 L624.0,264.6 L624.5,264.8 L625.0,265.0 L625.5,265.2 L626.0,265.3 L626.5,265.5 L627.0,265.7 L627.5,265.9 L628.0,266.1 L628.5,266.3 L629.0,266.5 L629.5,266.7 L630.0,266.9 L630.5,267.1 L631.0,267.3 L631.5,267.5 L632.0,267.7 L632.5,267.9 L633.0,268.1 L633.5,268.3 L634.0,268.5 L634.5,268.7 L635.0,268.9 L635.5,269.1 L636.0,269.2 L636.5,269.4 L637.0,269.6 L637.5,269.8 L638.0,270.0 L638.5,270.2 L639.0,270.4 L639.5,270.6 L640.0,270.8 L640.5,271.0 L641.0,271.2 L641.5,271.4 L642.0,271.6 L642.5,271.8 L643.0,272.0 L643.5,272.2 L644.0,272.4 L644.5,272.6 L645.0,272.8 L645.5,273.0 L646.0,273.1 L646.5,273.3 L647.0,273.5 L647.5,273.7 L648.0,273.9 L648.5,274.1 L649.0,274.3 L649.5,274.5 L650.0,274.7 L650.5,274.9 L651.0,275.1 L651.5,275.3 L652.0,275.5 L652.5,275.7 L653.0,275.9 L653.5,276.1 L654.0,276.3 L654.5,276.5 L655.0,276.7 L655.5,276.9 L656.0,277.0 L656.5,277.2 L657.0,277.4 L657.5,277.6 L658.0,277.8 L658.5,278.0 L659.0,278.2 L659.5,278.4 L660.0,278.6 L660.5,278.8 L661.0,279.0 L661.5,279.2 L662.0,279.4 L662.5,279.6 L663.0,279.8 L663.5,279.9 L664.0,280.1 L664.5,280.2 L665.0,280.3 L665.5,280.3 L666.0,280.4 L666.5,280.4 L667.0,280.3 L667.5,280.3 L668.0,280.2 L668.5,280.1 L669.0,279.9 L669.5,279.8 L670.0,279.6 L670.5,279.4 L671.0,279.2 L671.5,279.0 L672.0,278.8 L672.5,278.6 L673.0,278.4 L673.5,278.2 L674.0,278.0 L674.5,277.8 L675.0,277.7 L675.5,277.5 L676.0,277.4 L676.5,277.2 L677.0,277.2 L677.5,277.1 L678.0,277.1 L678.5,277.1 L679.0,277.1 L679.5,277.2 L680.0,277.3 L680.5,277.4 L681.0,277.6 L681.5,277.7 L682.0,277.9 L682.5,278.1 L683.0,278.3 L683.5,278.5 L684.0,278.7 L684.5,278.9 L685.0,279.1 L685.5,279.3 L686.0,279.5 L686.5,279.7 L687.0,279.9 L687.5,280.1 L688.0,280.2 L688.5,280.4 L689.0,280.6 L689.5,280.8 L690.0,281.0 L690.5,281.2 L691.0,281.4 L691.5,281.6 L692.0,281.8 L692.5,282.0 L693.0,282.2 L693.5,282.4 L694.0,282.6 L694.5,282.8 L695.0,283.0 L695.5,283.2 L696.0,283.4 L696.5,283.6 L697.0,283.8 L697.5,284.0 L698.0,284.1 L698.5,284.3 L699.0,284.5 L699.5,284.7 L700.0,284.9 L700.5,285.1 L701.0,285.3 L701.5,285.5 L702.0,285.7 L702.5,285.9 L703.0,286.1 L703.5,286.3 L704.0,286.5 L704.5,286.7 L705.0,286.9 L705.5,287.1 L706.0,287.3 L706.5,287.5 L707.0,287.7 L707.5,287.9 L708.0,288.0 L708.5,288.2 L709.0,288.4 L709.5,288.6 L710.0,288.8 L710.5,289.0 L711.0,289.2 L711.5,289.4 L712.0,289.6 L712.5,289.8 L713.0,290.0 L713.5,290.2 L714.0,290.4 L714.5,290.6 L715.0,290.8 L715.5,291.0 L716.0,291.2 L716.5,291.4 L717.0,291.6 L717.5,291.8 L718.0,291.9 L718.5,292.1 L719.0,292.3 L719.5,292.5 L720.0,292.7 L720.5,292.9 L721.0,293.1 L721.5,293.3 L722.0,293.5 L722.5,293.7 L723.0,293.9 L723.5,294.1 L724.0,294.3 L724.5,294.5 L725.0,294.7 L725.5,294.9 L726.0,295.1 L726.5,295.3 L727.0,295.5 L727.5,295.7 L728.0,295.8 L728.5,296.0 L729.0,296.2 L729.5,296.4 L730.0,296.6 L730.5,296.8 L731.0,297.0 L731.5,297.2 L732.0,297.4 L732.5,297.6 L733.0,297.8 L733.5,298.0 L734.0,298.2 L734.5,298.3 L735.0,298.5 L735.5,298.6 L736.0,298.7 L736.5,298.8 L737.0,298.8 L737.5,298.8 L738.0,298.8 L738.5,298.7 L739.0,298.7 L739.5,298.5 L740.0,298.4 L740.5,298.2 L741.0,298.1 L741.5,297.9 L742.0,297.7 L742.5,297.5 L743.0,297.3 L743.5,297.1 L744.0,296.9 L744.5,296.7 L745.0,296.5 L745.5,296.3 L746.0,296.1 L746.5,295.9 L747.0,295.7 L747.5,295.5 L748.0,295.3 L748.5,295.1 L749.0,295.0 L749.5,294.8 L750.0,294.6 L750.5,294.4 L751.0,294.2 L751.5,294.0 L752.0,293.8 L752.5,293.6 L753.0,293.4 L753.5,293.2 L754.0,293.0 L754.5,292.8 L755.0,292.6 L755.5,292.4 L756.0,292.2 L756.5,292.0 L757.0,291.8 L757.5,291.6 L758.0,291.5 L758.5,291.3 L759.0,291.1 L759.5,291.0 L760.0,290.8 L760.5,290.7 L761.0,290.7 L761.5,290.6 L762.0,290.6 L762.5,290.7 L763.0,290.7 L763.5,290.8 L764.0,291.0 L764.5,291.1 L765.0,291.3 L765.5,291.5 L766.0,291.6 L766.5,291.8 L767.0,292.0 L767.5,292.2 L768.0,292.4 L768.5,292.6 L769.0,292.8 L769.5,293.0 L770.0,293.2 L770.5,293.4 L771.0,293.6 L771.5,293.8 L772.0,294.0 L772.5,294.2 L773.0,294.4 L773.5,294.6 L774.0,294.8 L774.5,295.0 L775.0,295.1 L775.5,295.3 L776.0,295.5 L776.5,295.7 L777.0,295.9 L777.5,296.1 L778.0,296.3 L778.5,296.5 L779.0,296.7 L779.5,296.9 L780.0,297.1 L780.5,297.3 L781.0,297.5 L781.5,297.7 L782.0,297.9 L782.5,298.1 L783.0,298.3 L783.5,298.5 L784.0,298.7 L784.5,298.9 L785.0,299.0 L785.5,299.2 L786.0,299.4 L786.5,299.6 L787.0,299.8 L787.5,300.0 L788.0,300.2 L788.5,300.4 L789.0,300.6 L789.5,300.8 L790.0,301.0 L790.5,301.2 L791.0,301.4 L791.5,301.6 L792.0,301.8 L792.5,302.0 L793.0,302.2 L793.5,302.4 L794.0,302.6 L794.5,302.8 L795.0,302.9 L795.5,303.1 L796.0,303.3 L796.5,303.5 L797.0,303.7 L797.5,303.9 L798.0,304.1 L798.5,304.3 L799.0,304.5 L799.5,304.7 L800.0,304.9 L800.5,305.1 L801.0,305.3 L801.5,305.5 L802.0,305.7 L802.5,305.9 L803.0,306.1 L803.5,306.3 L804.0,306.4 L804.5,306.6 L805.0,306.8 L805.5,306.9 L806.0,307.0 L806.5,307.1 L807.0,307.2 L807.5,307.2 L808.0,307.2 L808.5,307.1 L809.0,307.0 L809.5,306.9 L810.0,306.8 L810.5,306.7" fill="none" stroke="#f0f000" stroke-width="1.8"/><path d="M215.5,458.5 L216.0,455.8 L216.5,440.9 L217.0,428.6 L217.5,413.0 L218.0,414.1 L218.5,407.5 L219.0,410.2 L219.5,407.9 L220.0,406.2 L220.5,405.8 L221.0,397.9 L221.5,391.0 L222.0,375.2 L222.5,359.5 L223.0,359.5 L223.5,359.5 L224.0,359.5 L224.5,359.5 L225.0,359.5 L225.5,359.5 L226.0,359.5 L226.5,359.5 L227.0,359.5 L227.5,359.5 L228.0,359.5 L228.5,365.2 L229.0,378.9 L229.5,395.5 L230.0,402.7 L230.5,408.2 L231.0,408.7 L231.5,407.9 L232.0,408.3 L232.5,410.0 L233.0,417.0 L233.5,430.3 L234.0,443.8 L234.5,457.4 L235.0,458.5 L235.5,458.5 L236.0,458.5 L236.5,458.5 L237.0,458.5 L237.5,458.5 L238.0,458.5 L238.5,458.5 L239.0,458.5 L239.5,458.5 L240.0,458.5 L240.5,453.7 L241.0,436.2 L241.5,421.9 L242.0,416.5 L242.5,410.5 L243.0,407.9 L243.5,407.7 L244.0,409.0 L244.5,408.6 L245.0,409.0 L245.5,408.7 L246.0,407.5 L246.5,409.4 L247.0,409.3 L247.5,408.8 L248.0,409.5 L248.5,409.2 L249.0,407.2 L249.5,408.5 L250.0,408.6 L250.5,409.4 L251.0,407.7 L251.5,407.4 L252.0,409.0 L252.5,409.4 L253.0,407.8 L253.5,404.4 L254.0,410.9 L254.5,408.8 L255.0,408.6 L255.5,406.9 L256.0,405.1 L256.5,403.0 L257.0,392.0 L257.5,375.9 L258.0,359.9 L258.5,359.5 L259.0,359.5 L259.5,359.5 L260.0,359.5 L260.5,359.5 L261.0,359.5 L261.5,359.5 L262.0,359.5 L262.5,359.5 L263.0,359.5 L263.5,359.5 L264.0,361.8 L264.5,379.3 L265.0,389.8 L265.5,401.4 L266.0,407.5 L266.5,408.2 L267.0,406.0 L267.5,409.5 L268.0,409.0 L268.5,416.6 L269.0,423.8 L269.5,440.1 L270.0,458.5 L270.5,458.5 L271.0,458.5 L271.5,458.5 L272.0,458.5 L272.5,458.5 L273.0,458.5 L273.5,458.5 L274.0,458.5 L274.5,458.5 L275.0,458.5 L275.5,458.5 L276.0,458.5 L276.5,440.4 L277.0,425.7 L277.5,415.5 L278.0,412.2 L278.5,409.3 L279.0,407.7 L279.5,410.8 L280.0,410.1 L280.5,408.0 L281.0,400.9 L281.5,392.6 L282.0,374.9 L282.5,359.5 L283.0,359.5 L283.5,359.5 L284.0,359.5 L284.5,359.5 L285.0,359.5 L285.5,359.5 L286.0,359.5 L286.5,359.5 L287.0,359.5 L287.5,359.5 L288.0,359.5 L288.5,360.1 L289.0,378.7 L289.5,391.7 L290.0,400.8 L290.5,404.0 L291.0,408.9 L291.5,410.9 L292.0,408.0 L292.5,412.6 L293.0,408.9 L293.5,408.0 L294.0,405.8 L294.5,408.5 L295.0,411.2 L295.5,410.7 L296.0,408.7 L296.5,408.4 L297.0,407.5 L297.5,407.6 L298.0,406.1 L298.5,406.7 L299.0,409.5 L299.5,407.2 L300.0,408.5 L300.5,408.4 L301.0,407.4 L301.5,407.6 L302.0,407.7 L302.5,412.1 L303.0,411.9 L303.5,408.1 L304.0,410.2 L304.5,408.3 L305.0,406.4 L305.5,407.3 L306.0,410.6 L306.5,410.6 L307.0,409.4 L307.5,413.3 L308.0,408.4 L308.5,409.1 L309.0,407.8 L309.5,409.9 L310.0,411.9 L310.5,408.2 L311.0,411.5 L311.5,409.2 L312.0,409.8 L312.5,410.6 L313.0,411.1 L313.5,408.6 L314.0,409.2 L314.5,409.6 L315.0,408.4 L315.5,410.6 L316.0,410.6 L316.5,417.1 L317.0,433.4 L317.5,446.2 L318.0,458.5 L318.5,458.5 L319.0,458.5 L319.5,458.5 L320.0,458.5 L320.5,458.5 L321.0,458.5 L321.5,458.5 L322.0,458.5 L322.5,458.5 L323.0,458.5 L323.5,458.5 L324.0,451.2 L324.5,431.7 L325.0,420.3 L325.5,412.1 L326.0,412.2 L326.5,408.8 L327.0,408.3 L327.5,407.8 L328.0,409.0 L328.5,405.2 L329.0,401.1 L329.5,394.1 L330.0,376.8 L330.5,359.5 L331.0,359.5 L331.5,359.5 L332.0,359.5 L332.5,359.5 L333.0,359.5 L333.5,359.5 L334.0,359.5 L334.5,359.5 L335.0,359.5 L335.5,359.5 L336.0,359.5 L336.5,359.9 L337.0,378.9 L337.5,391.5 L338.0,402.5 L338.5,408.1 L339.0,406.6 L339.5,409.6 L340.0,408.0 L340.5,411.9 L341.0,408.5 L341.5,407.3 L342.0,407.5 L342.5,407.0 L343.0,409.3 L343.5,404.9 L344.0,409.2 L344.5,409.1 L345.0,409.5 L345.5,407.7 L346.0,408.8 L346.5,409.4 L347.0,411.3 L347.5,410.3 L348.0,407.3 L348.5,408.0 L349.0,409.1 L349.5,408.7 L350.0,407.0 L350.5,407.3 L351.0,410.6 L351.5,406.5 L352.0,407.8 L352.5,407.2 L353.0,409.2 L353.5,406.6 L354.0,407.7 L354.5,408.8 L355.0,405.6 L355.5,406.1 L356.0,409.8 L356.5,407.5 L357.0,408.7 L357.5,408.7 L358.0,407.8 L358.5,409.3 L359.0,407.8 L359.5,407.5 L360.0,407.6 L360.5,410.0 L361.0,407.4 L361.5,408.7 L362.0,409.7 L362.5,408.3 L363.0,410.5 L363.5,414.9 L364.0,425.1 L364.5,439.7 L365.0,458.5 L365.5,458.5 L366.0,458.5 L366.5,458.5 L367.0,458.5 L367.5,458.5 L368.0,458.5 L368.5,458.5 L369.0,458.5 L369.5,458.5 L370.0,458.5 L370.5,458.5 L371.0,455.6 L371.5,442.2 L372.0,423.6 L372.5,416.8 L373.0,411.9 L373.5,408.0 L374.0,409.9 L374.5,408.5 L375.0,410.2 L375.5,409.4 L376.0,409.7 L376.5,410.9 L377.0,408.8 L377.5,409.5 L378.0,407.1 L378.5,408.5 L379.0,408.2 L379.5,410.1 L380.0,407.5 L380.5,408.1 L381.0,407.3 L381.5,410.1 L382.0,411.7 L382.5,407.8 L383.0,408.2 L383.5,407.7 L384.0,410.3 L384.5,410.1 L385.0,409.5 L385.5,411.0 L386.0,411.1 L386.5,405.5 L387.0,406.1 L387.5,397.1 L388.0,388.4 L388.5,368.4 L389.0,359.5 L389.5,359.5 L390.0,359.5 L390.5,359.5 L391.0,359.5 L391.5,359.5 L392.0,359.5 L392.5,359.5 L393.0,359.5 L393.5,359.5 L394.0,359.5 L394.5,359.5 L395.0,367.6 L395.5,382.8 L396.0,396.5 L396.5,402.5 L397.0,405.8 L397.5,407.5 L398.0,407.6 L398.5,409.7 L399.0,408.6 L399.5,411.3 L400.0,409.9 L400.5,410.1 L401.0,408.5 L401.5,413.2 L402.0,407.2 L402.5,408.5 L403.0,407.6 L403.5,407.2 L404.0,407.8 L404.5,410.5 L405.0,409.6 L405.5,410.6 L406.0,408.7 L406.5,407.7 L407.0,407.6 L407.5,409.1 L408.0,408.6 L408.5,411.2 L409.0,408.0 L409.5,408.7 L410.0,406.9 L410.5,412.5 L411.0,414.8 L411.5,424.0 L412.0,437.0 L412.5,455.6 L413.0,458.5 L413.5,458.5 L414.0,458.5 L414.5,458.5 L415.0,458.5 L415.5,458.5 L416.0,458.5 L416.5,458.5 L417.0,458.5 L417.5,458.5 L418.0,458.5 L418.5,458.5 L419.0,441.7 L419.5,430.7 L420.0,417.8 L420.5,413.4 L421.0,411.1 L421.5,410.6 L422.0,407.8 L422.5,411.7 L423.0,409.5 L423.5,409.4 L424.0,409.1 L424.5,408.6 L425.0,410.7 L425.5,408.6 L426.0,410.1 L426.5,408.7 L427.0,407.1 L427.5,409.2 L428.0,408.4 L428.5,409.9 L429.0,410.1 L429.5,408.0 L430.0,408.1 L430.5,407.4 L431.0,409.5 L431.5,408.7 L432.0,406.5 L432.5,407.1 L433.0,409.3 L433.5,410.0 L434.0,407.7 L434.5,410.0 L435.0,406.0 L435.5,402.0 L436.0,398.0 L436.5,389.4 L437.0,372.9 L437.5,359.5 L438.0,359.5 L438.5,359.5 L439.0,359.5 L439.5,359.5 L440.0,359.5 L440.5,359.5 L441.0,359.5 L441.5,359.5 L442.0,359.5 L442.5,359.5 L443.0,359.5 L443.5,359.5 L444.0,380.2 L444.5,392.6 L445.0,404.1 L445.5,408.1 L446.0,411.2 L446.5,416.3 L447.0,427.4 L447.5,443.7 L448.0,458.5 L448.5,458.5 L449.0,458.5 L449.5,458.5 L450.0,458.5 L450.5,458.5 L451.0,458.5 L451.5,458.5 L452.0,458.5 L452.5,458.5 L453.0,458.5 L453.5,458.5 L454.0,453.8 L454.5,437.7 L455.0,425.3 L455.5,413.4 L456.0,408.4 L456.5,408.8 L457.0,408.4 L457.5,407.5 L458.0,409.4 L458.5,406.9 L459.0,401.4 L459.5,394.3 L460.0,381.0 L460.5,364.7 L461.0,359.5 L461.5,359.5 L462.0,359.5 L462.5,359.5 L463.0,359.5 L463.5,359.5 L464.0,359.5 L464.5,359.5 L465.0,359.5 L465.5,359.5 L466.0,359.5 L466.5,359.5 L467.0,374.1 L467.5,392.3 L468.0,397.7 L468.5,406.3 L469.0,406.8 L469.5,408.7 L470.0,408.5 L470.5,409.2 L471.0,417.6 L471.5,431.1 L472.0,447.8 L472.5,458.5 L473.0,458.5 L473.5,458.5 L474.0,458.5 L474.5,458.5 L475.0,458.5 L475.5,458.5 L476.0,458.5 L476.5,458.5 L477.0,458.5 L477.5,458.5 L478.0,458.5 L478.5,451.9 L479.0,433.3 L479.5,419.6 L480.0,411.0 L480.5,409.5 L481.0,409.2 L481.5,410.3 L482.0,408.0 L482.5,407.4 L483.0,401.0 L483.5,395.4 L484.0,382.7 L484.5,366.2 L485.0,359.5 L485.5,359.5 L486.0,359.5 L486.5,359.5 L487.0,359.5 L487.5,359.5 L488.0,359.5 L488.5,359.5 L489.0,359.5 L489.5,359.5 L490.0,359.5 L490.5,359.5 L491.0,371.0 L491.5,387.5 L492.0,401.2 L492.5,402.5 L493.0,406.9 L493.5,407.9 L494.0,409.3 L494.5,413.9 L495.0,419.5 L495.5,430.5 L496.0,445.5 L496.5,458.5 L497.0,458.5 L497.5,458.5 L498.0,458.5 L498.5,458.5 L499.0,458.5 L499.5,458.5 L500.0,458.5 L500.5,458.5 L501.0,458.5 L501.5,458.5 L502.0,458.5 L502.5,449.2 L503.0,433.8 L503.5,419.4 L504.0,414.1 L504.5,409.7 L505.0,408.8 L505.5,407.5 L506.0,406.3 L506.5,403.6 L507.0,393.6 L507.5,384.6 L508.0,367.1 L508.5,359.5 L509.0,359.5 L509.5,359.5 L510.0,359.5 L510.5,359.5 L511.0,359.5 L511.5,359.5 L512.0,359.5 L512.5,359.5 L513.0,359.5 L513.5,359.5 L514.0,359.5 L514.5,369.5 L515.0,386.2 L515.5,395.7 L516.0,404.6 L516.5,405.9 L517.0,408.3 L517.5,406.0 L518.0,411.9 L518.5,406.3 L519.0,406.2 L519.5,410.5 L520.0,406.4 L520.5,406.7 L521.0,407.0 L521.5,406.8 L522.0,409.3 L522.5,411.0 L523.0,405.6 L523.5,408.4 L524.0,408.8 L524.5,405.4 L525.0,408.9 L525.5,409.0 L526.0,406.9 L526.5,408.0 L527.0,409.6 L527.5,406.4 L528.0,406.9 L528.5,406.9 L529.0,408.7 L529.5,408.9 L530.0,407.1 L530.5,409.9 L531.0,409.3 L531.5,410.4 L532.0,411.0 L532.5,409.0 L533.0,407.0 L533.5,407.7 L534.0,411.0 L534.5,406.6 L535.0,407.3 L535.5,406.8 L536.0,407.8 L536.5,406.3 L537.0,406.9 L537.5,407.8 L538.0,410.3 L538.5,407.3 L539.0,408.9 L539.5,408.8 L540.0,409.2 L540.5,408.4 L541.0,409.4 L541.5,410.3 L542.0,410.1 L542.5,408.6 L543.0,406.4 L543.5,410.9 L544.0,407.3 L544.5,407.6 L545.0,410.4 L545.5,409.3 L546.0,409.7 L546.5,408.5 L547.0,409.0 L547.5,408.4 L548.0,407.2 L548.5,407.4 L549.0,409.1 L549.5,407.8 L550.0,411.0 L550.5,406.7 L551.0,409.2 L551.5,408.2 L552.0,406.7 L552.5,409.4 L553.0,405.7 L553.5,408.2 L554.0,406.3 L554.5,408.1 L555.0,410.1 L555.5,408.4 L556.0,406.8 L556.5,406.4 L557.0,409.2 L557.5,407.0 L558.0,408.8 L558.5,406.6 L559.0,407.2 L559.5,411.4 L560.0,407.0 L560.5,409.5 L561.0,408.3 L561.5,409.1 L562.0,407.1 L562.5,406.5 L563.0,409.9 L563.5,408.2 L564.0,408.2 L564.5,407.8 L565.0,408.1 L565.5,409.9 L566.0,406.6 L566.5,407.9 L567.0,406.1 L567.5,409.3 L568.0,407.0 L568.5,407.2 L569.0,406.1 L569.5,407.6 L570.0,405.7 L570.5,407.6 L571.0,409.0 L571.5,406.8 L572.0,406.5 L572.5,406.1 L573.0,408.3 L573.5,408.7 L574.0,407.4 L574.5,407.5 L575.0,408.8 L575.5,409.7 L576.0,409.3 L576.5,408.7 L577.0,406.8 L577.5,411.1 L578.0,409.5 L578.5,407.5 L579.0,405.9 L579.5,407.9 L580.0,406.3 L580.5,406.1 L581.0,408.8 L581.5,409.7 L582.0,408.6 L582.5,409.6 L583.0,411.2 L583.5,407.3 L584.0,409.7 L584.5,408.6 L585.0,410.8 L585.5,409.4 L586.0,410.6 L586.5,408.8 L587.0,409.5 L587.5,408.9 L588.0,409.8 L588.5,408.7 L589.0,407.1 L589.5,409.9 L590.0,413.3 L590.5,422.4 L591.0,436.8 L591.5,448.1 L592.0,458.5 L592.5,458.5 L593.0,458.5 L593.5,458.5 L594.0,458.5 L594.5,458.5 L595.0,458.5 L595.5,458.5 L596.0,458.5 L596.5,458.5 L597.0,458.5 L597.5,458.5 L598.0,442.6 L598.5,426.8 L599.0,414.0 L599.5,411.5 L600.0,410.2 L600.5,410.2 L601.0,408.0 L601.5,406.9 L602.0,409.8 L602.5,409.3 L603.0,409.3 L603.5,406.6 L604.0,412.2 L604.5,408.3 L605.0,409.7 L605.5,409.2 L606.0,408.5 L606.5,407.9 L607.0,409.8 L607.5,409.3 L608.0,411.5 L608.5,407.8 L609.0,407.4 L609.5,409.9 L610.0,405.1 L610.5,409.8 L611.0,409.7 L611.5,410.8 L612.0,409.4 L612.5,406.6 L613.0,408.1 L613.5,407.1 L614.0,408.7 L614.5,408.5 L615.0,409.4 L615.5,408.0 L616.0,408.3 L616.5,404.1 L617.0,406.9 L617.5,408.4 L618.0,406.6 L618.5,409.6 L619.0,407.3 L619.5,411.8 L620.0,408.4 L620.5,409.8 L621.0,408.6 L621.5,411.4 L622.0,410.2 L622.5,409.0 L623.0,409.0 L623.5,409.7 L624.0,409.4 L624.5,408.1 L625.0,409.5 L625.5,408.7 L626.0,407.4 L626.5,410.4 L627.0,409.5 L627.5,405.1 L628.0,407.3 L628.5,409.2 L629.0,406.5 L629.5,407.2 L630.0,410.1 L630.5,408.6 L631.0,408.8 L631.5,412.8 L632.0,407.5 L632.5,406.4 L633.0,409.1 L633.5,409.9 L634.0,408.3 L634.5,407.6 L635.0,407.6 L635.5,410.0 L636.0,409.1 L636.5,406.9 L637.0,410.8 L637.5,409.9 L638.0,407.0 L638.5,409.6 L639.0,408.9 L639.5,410.5 L640.0,407.9 L640.5,411.2 L641.0,408.5 L641.5,408.0 L642.0,409.6 L642.5,408.9 L643.0,407.7 L643.5,409.7 L644.0,408.0 L644.5,409.6 L645.0,407.6 L645.5,409.0 L646.0,407.9 L646.5,411.2 L647.0,408.4 L647.5,406.8 L648.0,409.1 L648.5,407.5 L649.0,405.6 L649.5,409.1 L650.0,407.9 L650.5,404.9 L651.0,410.2 L651.5,407.6 L652.0,409.1 L652.5,409.6 L653.0,409.1 L653.5,409.4 L654.0,408.3 L654.5,408.0 L655.0,405.6 L655.5,408.2 L656.0,409.4 L656.5,407.4 L657.0,407.5 L657.5,405.7 L658.0,409.9 L658.5,409.6 L659.0,405.9 L659.5,409.8 L660.0,410.3 L660.5,407.9 L661.0,404.4 L661.5,399.7 L662.0,392.9 L662.5,377.0 L663.0,361.2 L663.5,359.5 L664.0,359.5 L664.5,359.5 L665.0,359.5 L665.5,359.5 L666.0,359.5 L666.5,359.5 L667.0,359.5 L667.5,359.5 L668.0,359.5 L668.5,359.5 L669.0,362.5 L669.5,378.5 L670.0,389.7 L670.5,398.6 L671.0,407.7 L671.5,403.3 L672.0,409.0 L672.5,410.8 L673.0,411.0 L673.5,420.2 L674.0,427.3 L674.5,443.0 L675.0,458.5 L675.5,458.5 L676.0,458.5 L676.5,458.5 L677.0,458.5 L677.5,458.5 L678.0,458.5 L678.5,458.5 L679.0,458.5 L679.5,458.5 L680.0,458.5 L680.5,458.5 L681.0,453.6 L681.5,436.2 L682.0,425.1 L682.5,414.0 L683.0,411.4 L683.5,410.6 L684.0,408.6 L684.5,408.4 L685.0,406.5 L685.5,411.0 L686.0,406.1 L686.5,409.4 L687.0,409.5 L687.5,407.8 L688.0,407.8 L688.5,409.5 L689.0,409.1 L689.5,407.5 L690.0,408.4 L690.5,407.4 L691.0,408.8 L691.5,407.9 L692.0,406.0 L692.5,410.4 L693.0,409.6 L693.5,412.8 L694.0,406.7 L694.5,406.1 L695.0,404.8 L695.5,410.2 L696.0,408.6 L696.5,410.1 L697.0,408.4 L697.5,409.9 L698.0,408.0 L698.5,409.4 L699.0,406.7 L699.5,410.3 L700.0,406.8 L700.5,412.4 L701.0,410.4 L701.5,407.8 L702.0,408.3 L702.5,409.1 L703.0,407.6 L703.5,406.6 L704.0,405.8 L704.5,409.9 L705.0,410.5 L705.5,412.2 L706.0,411.5 L706.5,408.7 L707.0,410.8 L707.5,406.5 L708.0,409.9 L708.5,405.9 L709.0,406.8 L709.5,408.3 L710.0,409.8 L710.5,406.8 L711.0,408.0 L711.5,409.8 L712.0,407.1 L712.5,409.3 L713.0,409.5 L713.5,409.9 L714.0,406.8 L714.5,410.1 L715.0,408.8 L715.5,406.5 L716.0,406.3 L716.5,408.9 L717.0,407.9 L717.5,405.6 L718.0,410.0 L718.5,409.9 L719.0,409.2 L719.5,410.3 L720.0,409.2 L720.5,408.8 L721.0,409.7 L721.5,409.7 L722.0,408.2 L722.5,409.4 L723.0,407.7 L723.5,408.6 L724.0,407.2 L724.5,409.6 L725.0,410.0 L725.5,406.5 L726.0,407.5 L726.5,406.8 L727.0,407.6 L727.5,407.4 L728.0,408.9 L728.5,409.8 L729.0,407.4 L729.5,407.0 L730.0,406.8 L730.5,407.1 L731.0,405.2 L731.5,409.3 L732.0,408.0 L732.5,405.3 L733.0,391.7 L733.5,381.7 L734.0,364.1 L734.5,359.5 L735.0,359.5 L735.5,359.5 L736.0,359.5 L736.5,359.5 L737.0,359.5 L737.5,359.5 L738.0,359.5 L738.5,359.5 L739.0,359.5 L739.5,359.5 L740.0,359.5 L740.5,373.1 L741.0,388.3 L741.5,400.3 L742.0,407.2 L742.5,410.9 L743.0,409.7 L743.5,407.9 L744.0,409.3 L744.5,409.6 L745.0,410.0 L745.5,408.4 L746.0,408.9 L746.5,409.0 L747.0,408.5 L747.5,408.6 L748.0,409.8 L748.5,405.3 L749.0,408.4 L749.5,408.7 L750.0,406.7 L750.5,409.6 L751.0,409.4 L751.5,410.0 L752.0,409.4 L752.5,405.7 L753.0,407.1 L753.5,407.8 L754.0,410.3 L754.5,408.7 L755.0,406.5 L755.5,407.5 L756.0,408.0 L756.5,409.2 L757.0,415.9 L757.5,426.7 L758.0,443.0 L758.5,455.8 L759.0,458.5 L759.5,458.5 L760.0,458.5 L760.5,458.5 L761.0,458.5 L761.5,458.5 L762.0,458.5 L762.5,458.5 L763.0,458.5 L763.5,458.5 L764.0,458.5 L764.5,456.9 L765.0,440.1 L765.5,424.6 L766.0,417.5 L766.5,412.6 L767.0,410.9 L767.5,406.2 L768.0,408.8 L768.5,409.6 L769.0,406.6 L769.5,408.2 L770.0,409.1 L770.5,409.3 L771.0,408.8 L771.5,407.4 L772.0,409.3 L772.5,407.5 L773.0,408.6 L773.5,407.4 L774.0,408.1 L774.5,408.3 L775.0,407.5 L775.5,408.6 L776.0,409.3 L776.5,408.8 L777.0,408.6 L777.5,409.0 L778.0,406.9 L778.5,405.9 L779.0,407.0 L779.5,410.8 L780.0,407.6 L780.5,404.4 L781.0,409.7 L781.5,407.2 L782.0,409.0 L782.5,409.3 L783.0,405.6 L783.5,408.9 L784.0,406.0 L784.5,408.7 L785.0,408.2 L785.5,410.4 L786.0,406.0 L786.5,407.2 L787.0,406.6 L787.5,410.6 L788.0,408.1 L788.5,409.0 L789.0,408.3 L789.5,409.3 L790.0,408.4 L790.5,408.4 L791.0,407.4 L791.5,408.0 L792.0,409.2 L792.5,408.6 L793.0,407.2 L793.5,408.4 L794.0,408.9 L794.5,406.4 L795.0,406.6 L795.5,407.0 L796.0,409.1 L796.5,408.1 L797.0,408.2 L797.5,408.6 L798.0,406.9 L798.5,409.4 L799.0,407.5 L799.5,407.2 L800.0,408.7 L800.5,408.5 L801.0,410.9 L801.5,405.8 L802.0,407.5 L802.5,403.3 L803.0,397.8 L803.5,386.6 L804.0,372.9 L804.5,359.5 L805.0,359.5 L805.5,359.5 L806.0,359.5 L806.5,359.5 L807.0,359.5 L807.5,359.5 L808.0,359.5 L808.5,359.5 L809.0,359.5 L809.5,359.5 L810.0,359.5" fill="none" stroke="#12e4e4" stroke-width="1.1"/><path d="M216.00 456.1V458.5M216.25 446.5V458.5M216.50 433.2V450.5M216.75 433.4V441.9M217.00 417.1V433.7M217.25 416.3V435.3M217.50 406.8V419.0M217.75 407.2V420.5M218.00 408.1V419.4M218.25 399.4V424.2M218.50 400.7V414.7M218.75 397.3V411.5M219.00 398.4V417.4M219.25 400.2V413.3M219.50 400.4V412.7M219.75 395.5V410.9M220.00 399.5V411.1M220.25 402.5V412.6M220.50 392.1V409.0M220.75 395.3V410.1M221.00 393.0V408.0M221.25 393.8V405.4M221.50 378.6V398.8M221.75 384.1V396.8M222.00 365.9V383.6M222.25 367.5V379.1M222.50 359.5V362.0M222.75 359.5V363.2M228.50 359.5V372.9M228.75 359.5V374.7M229.00 373.3V388.4M229.25 373.4V392.6M229.50 386.4V403.3M229.75 391.5V401.1M230.00 397.9V412.5M230.25 394.7V411.9M230.50 403.3V414.6M230.75 401.6V416.8M231.00 403.0V421.0M231.25 403.8V421.0M231.50 397.5V419.0M231.75 400.0V415.9M232.00 399.8V418.9M232.25 398.5V421.5M232.50 402.0V416.4M232.75 402.1V421.4M233.00 416.1V430.4M233.25 409.0V426.3M233.50 423.4V433.4M233.75 418.6V436.7M234.00 437.9V453.0M234.25 430.1V448.4M234.50 448.0V458.5M234.75 457.3V458.5M240.50 449.2V458.5M240.75 449.1V458.5M241.00 434.1V444.4M241.25 427.9V446.8M241.50 418.5V434.7M241.75 417.6V433.8M242.00 408.7V419.7M242.25 404.7V419.0M242.50 399.4V415.2M242.75 403.4V421.3M243.00 406.2V416.4M243.25 401.2V419.5M243.50 403.9V419.0M243.75 397.4V419.9M244.00 395.9V415.0M244.25 395.5V416.8M244.50 404.9V415.1M244.75 396.4V412.9M245.00 399.4V413.5M245.25 402.8V412.2M245.50 395.5V421.5M245.75 402.4V420.8M246.00 398.1V411.9M246.25 398.4V417.9M246.50 397.0V415.4M246.75 406.3V415.9M247.00 400.9V419.0M247.25 397.9V414.0M247.50 395.5V421.5M247.75 396.2V416.2M248.00 401.5V416.2M248.25 405.3V419.0M248.50 401.2V414.9M248.75 399.5V421.1M249.00 399.7V420.8M249.25 397.2V416.7M249.50 400.2V414.9M249.75 404.8V416.8M250.00 398.6V412.1M250.25 396.0V417.3M250.50 401.0V415.4M250.75 399.7V417.4M251.00 403.7V414.5M251.25 402.4V415.0M251.50 397.4V421.5M251.75 399.2V418.1M252.00 405.7V414.8M252.25 401.8V413.6M252.50 396.2V418.9M252.75 396.8V413.7M253.00 402.5V417.0M253.25 397.6V417.3M253.50 398.9V413.3M253.75 401.1V421.0M254.00 402.1V417.0M254.25 402.3V416.4M254.50 399.0V417.3M254.75 397.7V421.1M255.00 401.3V420.2M255.25 400.5V421.3M255.50 402.5V409.9M255.75 401.3V419.3M256.00 397.4V414.9M256.25 398.8V411.3M256.50 390.2V411.0M256.75 398.5V408.2M257.00 381.2V402.9M257.25 388.5V397.4M257.50 364.9V381.1M257.75 371.6V388.4M258.00 359.5V370.9M258.25 359.5V372.8M264.00 359.5V370.0M264.25 359.5V366.7M264.50 372.5V387.2M264.75 368.6V382.5M265.00 378.9V404.6M265.25 386.0V399.9M265.50 398.2V413.3M265.75 396.5V407.3M266.00 398.6V406.1M266.25 396.4V415.2M266.50 401.4V412.5M266.75 403.0V413.7M267.00 401.6V412.6M267.25 395.8V419.7M267.50 397.2V422.3M267.75 401.0V413.4M268.00 401.7V424.2M268.25 403.7V423.4M268.50 405.6V427.0M268.75 403.0V429.0M269.00 420.1V432.4M269.25 413.4V432.2M269.50 433.3V447.5M269.75 432.2V448.3M270.00 454.1V458.5M270.25 444.2V458.5M276.00 449.3V458.5M276.25 450.6V458.5M276.50 426.8V447.5M276.75 427.2V445.5M277.00 419.3V437.5M277.25 419.4V430.9M277.50 407.8V429.0M277.75 410.1V427.1M278.00 407.1V423.2M278.25 404.5V419.3M278.50 402.5V415.2M278.75 401.7V415.6M279.00 402.7V421.2M279.25 397.5V420.4M279.50 397.1V412.5M279.75 402.5V414.9M280.00 402.1V419.3M280.25 399.0V417.3M280.50 400.3V415.1M280.75 394.1V413.5M281.00 396.2V406.5M281.25 388.0V410.2M281.50 382.2V403.0M281.75 378.6V399.1M282.00 371.7V384.4M282.25 369.5V385.9M282.50 359.5V372.8M282.75 359.5V365.0M288.50 359.5V361.2M288.75 359.5V372.4M289.00 372.1V386.1M289.25 365.8V381.4M289.50 384.8V400.7M289.75 383.0V401.8M290.00 392.3V404.4M290.25 388.0V414.0M290.50 400.3V412.2M290.75 397.2V417.5M291.00 398.1V417.4M291.25 403.8V414.5M291.50 401.2V415.9M291.75 400.6V417.7M292.00 406.0V415.9M292.25 399.1V418.8M292.50 399.9V416.7M292.75 396.6V415.5M293.00 399.1V412.1M293.25 406.3V417.6M293.50 398.3V421.5M293.75 396.9V415.7M294.00 395.5V412.7M294.25 403.5V417.2M294.50 400.5V419.4M294.75 399.8V413.3M295.00 398.4V417.4M295.25 399.3V417.3M295.50 399.1V413.2M295.75 405.7V418.2M296.00 396.9V414.3M296.25 402.7V414.3M296.50 399.4V419.0M296.75 399.7V414.1M297.00 398.6V419.7M297.25 399.4V421.5M297.50 399.7V419.5M297.75 401.5V418.0M298.00 402.3V415.9M298.25 401.0V415.2M298.50 397.9V421.0M298.75 400.9V413.5M299.00 402.6V413.0M299.25 406.4V416.2M299.50 403.1V415.3M299.75 399.5V419.2M300.00 400.8V416.5M300.25 403.3V417.3M300.50 396.1V413.2M300.75 404.5V414.3M301.00 405.6V417.4M301.25 396.6V417.1M301.50 401.1V417.8M301.75 402.1V414.3M302.00 408.2V421.5M302.25 397.7V414.3M302.50 398.0V416.5M302.75 399.4V411.6M303.00 399.1V420.3M303.25 395.5V412.5M303.50 397.0V419.5M303.75 400.2V417.4M304.00 399.7V420.0M304.25 399.5V415.2M304.50 399.8V421.5M304.75 399.1V415.4M305.00 403.5V416.1M305.25 397.4V420.6M305.50 397.9V417.0M305.75 395.9V414.7M306.00 399.1V418.8M306.25 396.0V413.1M306.50 396.2V415.9M306.75 404.8V415.5M307.00 395.5V421.5M307.25 404.3V415.1M307.50 401.5V421.3M307.75 396.9V417.9M308.00 402.8V416.0M308.25 401.3V414.4M308.50 403.1V418.7M308.75 396.0V416.6M309.00 403.9V414.6M309.25 402.9V419.3M309.50 402.1V415.7M309.75 401.1V418.5M310.00 395.5V416.7M310.25 398.5V416.2M310.50 401.7V414.5M310.75 398.9V415.4M311.00 397.6V414.6M311.25 395.5V421.5M311.50 396.2V411.0M311.75 401.2V413.0M312.00 399.3V417.8M312.25 401.4V413.5M312.50 399.6V412.4M312.75 400.4V421.5M313.00 399.8V417.0M313.25 403.2V418.0M313.50 402.6V417.4M313.75 401.5V413.8M314.00 399.0V415.9M314.25 402.6V413.3M314.50 404.0V418.1M314.75 401.8V411.3M315.00 401.4V415.3M315.25 395.8V417.1M315.50 404.5V416.4M315.75 404.2V421.7M316.00 400.7V419.6M316.25 406.8V425.7M316.50 412.4V427.0M316.75 416.1V426.8M317.00 417.6V436.4M317.25 423.4V443.1M317.50 435.8V455.8M317.75 445.5V457.8M318.00 452.1V458.5M318.25 454.8V458.5M323.50 455.9V458.5M324.00 449.1V456.8M324.25 443.9V458.5M324.50 426.0V441.3M324.75 427.4V440.7M325.00 410.6V434.0M325.25 413.0V434.0M325.50 405.8V421.2M325.75 405.7V426.6M326.00 397.2V423.2M326.25 397.5V419.8M326.50 400.1V414.9M326.75 404.9V414.8M327.00 404.5V421.6M327.25 397.0V421.6M327.50 398.6V410.4M327.75 398.2V419.5M328.00 396.7V415.2M328.25 400.4V416.0M328.50 398.3V418.8M328.75 398.0V411.4M329.00 388.0V407.0M329.25 393.7V411.2M329.50 381.8V399.2M329.75 382.6V402.4M330.00 365.0V386.1M330.25 364.2V384.8M330.50 359.5V370.0M330.75 359.5V367.6M336.50 359.5V372.8M336.75 359.5V363.6M337.00 364.2V388.5M337.25 370.4V386.4M337.50 383.5V398.2M337.75 384.3V398.8M338.00 392.3V410.7M338.25 394.3V414.0M338.50 401.7V417.5M338.75 396.4V413.0M339.00 401.9V417.9M339.25 397.5V412.9M339.50 406.8V417.0M339.75 395.8V417.5M340.00 400.7V419.8M340.25 401.0V419.7M340.50 402.6V413.4M340.75 395.5V421.5M341.00 401.6V420.8M341.25 402.2V421.5M341.50 402.5V418.6M341.75 398.6V416.8M342.00 395.5V413.6M342.25 397.3V420.6M342.50 395.5V417.0M342.75 397.0V415.4M343.00 401.3V412.7M343.25 398.3V419.1M343.50 403.8V419.6M343.75 398.0V417.0M344.00 397.1V411.4M344.25 404.6V416.5M344.50 403.7V421.2M344.75 402.9V415.1M345.00 399.8V412.6M345.25 401.2V414.4M345.50 401.0V415.1M345.75 402.7V413.0M346.00 402.2V417.2M346.25 400.2V416.5M346.50 398.4V421.5M346.75 401.4V421.5M347.00 404.4V417.9M347.25 403.0V415.2M347.50 397.0V415.1M347.75 400.8V413.5M348.00 403.1V415.2M348.25 400.4V418.5M348.50 399.1V412.3M348.75 399.1V415.9M349.00 397.1V414.5M349.25 399.5V415.9M349.50 401.6V421.5M349.75 396.6V414.8M350.00 396.9V418.0M350.25 402.2V417.8M350.50 397.8V415.5M350.75 396.2V421.1M351.00 402.5V419.1M351.25 395.5V421.5M351.50 396.5V416.3M351.75 400.4V417.0M352.00 401.1V418.5M352.25 395.5V412.6M352.50 399.9V421.4M352.75 407.4V421.5M353.00 397.1V420.7M353.25 400.8V418.7M353.50 395.5V421.5M353.75 399.2V417.3M354.00 402.2V418.4M354.25 398.3V417.7M354.50 408.0V416.0M354.75 395.5V417.3M355.00 400.3V410.8M355.25 401.6V421.5M355.50 395.5V416.7M355.75 399.5V421.5M356.00 399.2V411.7M356.25 396.6V418.8M356.50 400.8V415.9M356.75 403.3V420.8M357.00 401.6V420.3M357.25 398.6V410.9M357.50 402.7V421.5M357.75 400.4V421.2M358.00 399.2V421.5M358.25 399.9V413.7M358.50 399.8V412.4M358.75 398.4V413.6M359.00 402.4V415.0M359.25 403.0V421.5M359.50 405.7V414.9M359.75 400.8V420.3M360.00 398.0V415.4M360.25 399.1V414.3M360.50 400.7V415.0M360.75 403.4V416.4M361.00 401.2V417.8M361.25 406.5V415.7M361.50 398.3V419.8M361.75 397.9V417.7M362.00 395.7V418.6M362.25 395.7V416.8M362.50 402.5V416.3M362.75 402.9V413.7M363.00 400.5V420.7M363.25 405.9V417.8M363.50 403.0V427.5M363.75 404.6V424.6M364.00 419.3V430.6M364.25 414.9V434.1M364.50 432.5V446.6M364.75 428.5V452.8M365.00 445.3V458.5M365.25 446.1V458.5M371.00 449.7V458.5M371.25 448.3V458.5M371.50 428.9V447.9M371.75 431.4V451.7M372.00 416.4V437.7M372.25 414.5V434.9M372.50 403.0V423.4M372.75 403.0V424.3M373.00 403.8V424.2M373.25 403.0V418.2M373.50 399.5V413.6M373.75 403.4V415.0M374.00 403.5V416.7M374.25 400.4V418.2M374.50 400.3V414.4M374.75 402.0V418.6M375.00 399.7V418.5M375.25 403.9V416.6M375.50 395.5V419.6M375.75 402.8V414.0M376.00 401.8V410.5M376.25 404.7V416.0M376.50 395.6V419.5M376.75 403.1V418.1M377.00 395.7V415.4M377.25 397.7V421.5M377.50 395.5V416.5M377.75 399.2V420.6M378.00 397.7V413.8M378.25 405.9V415.4M378.50 401.3V415.0M378.75 397.5V416.9M379.00 397.7V413.1M379.25 399.9V414.7M379.50 395.5V412.7M379.75 400.6V419.7M380.00 399.5V417.0M380.25 397.6V410.8M380.50 401.8V418.4M380.75 407.5V417.6M381.00 402.1V419.3M381.25 399.3V416.9M381.50 400.7V417.6M381.75 399.4V417.2M382.00 401.1V420.1M382.25 400.3V415.6M382.50 398.1V418.0M382.75 400.5V421.5M383.00 399.7V414.5M383.25 395.5V414.4M383.50 395.7V413.3M383.75 404.8V416.6M384.00 401.4V417.7M384.25 401.4V417.1M384.50 395.5V413.1M384.75 397.8V417.3M385.00 399.2V413.1M385.25 398.5V415.7M385.50 402.2V421.4M385.75 397.7V411.9M386.00 401.5V417.9M386.25 401.1V414.4M386.50 398.0V414.4M386.75 400.8V413.8M387.00 393.8V406.0M387.25 392.4V417.3M387.50 391.0V405.0M387.75 386.3V406.0M388.00 378.6V394.8M388.25 373.4V397.9M388.50 360.4V383.4M388.75 365.8V383.4M389.00 359.5V360.7M389.25 359.5V363.2M395.00 359.5V373.3M395.25 359.5V376.7M395.50 378.7V388.2M395.75 373.3V393.3M396.00 383.0V404.2M396.25 384.3V402.0M396.50 391.2V413.1M396.75 392.0V414.7M397.00 400.1V418.0M397.25 400.6V414.2M397.50 403.2V416.8M397.75 401.4V413.3M398.00 402.1V415.1M398.25 401.6V419.5M398.50 403.3V417.5M398.75 401.4V414.1M399.00 402.3V414.9M399.25 402.9V415.8M399.50 399.4V413.5M399.75 395.6V417.1M400.00 402.8V416.9M400.25 403.4V421.5M400.50 403.7V416.6M400.75 395.5V414.2M401.00 399.7V418.7M401.25 395.5V416.2M401.50 395.5V413.2M401.75 397.6V415.0M402.00 400.5V420.4M402.25 399.3V414.1M402.50 400.8V419.0M402.75 395.5V419.2M403.00 402.4V416.5M403.25 400.2V420.4M403.50 400.6V420.2M403.75 396.2V419.2M404.00 401.2V418.2M404.25 403.8V419.3M404.50 402.7V417.5M404.75 401.6V418.9M405.00 398.5V416.2M405.25 395.7V411.9M405.50 400.8V415.0M405.75 401.8V417.5M406.00 400.5V410.9M406.25 403.4V413.5M406.50 400.1V415.8M406.75 401.6V418.7M407.00 400.2V411.3M407.25 399.6V420.8M407.50 402.8V419.6M407.75 400.7V412.1M408.00 400.0V417.6M408.25 402.6V415.2M408.50 397.3V411.5M408.75 397.0V415.5M409.00 397.9V416.6M409.25 405.5V418.3M409.50 403.6V419.9M409.75 400.7V420.5M410.00 404.4V418.0M410.25 400.2V416.6M410.50 403.5V418.3M410.75 398.5V417.5M411.00 408.5V422.5M411.25 401.6V425.0M411.50 414.6V433.3M411.75 412.8V430.8M412.00 431.6V449.0M412.25 426.1V446.2M412.50 447.8V458.5M412.75 443.0V458.2M418.50 447.8V458.5M418.75 451.7V458.5M419.00 431.1V451.1M419.25 433.6V452.6M419.50 421.2V439.3M419.75 418.7V430.3M420.00 410.4V429.1M420.25 405.2V425.2M420.50 401.8V413.4M420.75 402.7V419.5M421.00 401.2V418.1M421.25 398.4V420.8M421.50 400.2V418.7M421.75 399.9V411.0M422.00 396.3V416.2M422.25 396.7V417.4M422.50 398.8V421.5M422.75 403.3V418.7M423.00 395.5V416.8M423.25 403.7V414.8M423.50 395.5V418.5M423.75 401.4V411.9M424.00 400.0V412.7M424.25 399.9V419.2M424.50 397.2V417.6M424.75 396.9V418.0M425.00 400.0V413.2M425.25 400.8V416.2M425.50 396.6V419.7M425.75 400.2V421.5M426.00 404.2V414.9M426.25 399.0V419.4M426.50 399.4V414.9M426.75 399.7V415.9M427.00 402.7V414.9M427.25 404.6V417.6M427.50 397.8V420.0M427.75 401.7V412.6M428.00 397.6V415.3M428.25 401.4V417.3M428.50 402.1V414.2M428.75 399.0V417.3M429.00 399.3V414.3M429.25 402.8V413.5M429.50 399.5V415.4M429.75 400.4V416.7M430.00 398.5V413.1M430.25 399.2V421.3M430.50 401.2V419.9M430.75 397.5V416.4M431.00 396.3V415.0M431.25 401.0V417.4M431.50 401.0V412.3M431.75 396.0V416.3M432.00 395.5V415.8M432.25 400.0V421.5M432.50 401.0V414.3M432.75 395.6V416.0M433.00 406.1V414.0M433.25 400.5V417.6M433.50 399.8V421.5M433.75 400.0V413.3M434.00 398.3V413.0M434.25 400.2V414.5M434.50 395.3V412.9M434.75 401.1V411.5M435.00 399.4V412.3M435.25 403.5V415.1M435.50 395.8V416.2M435.75 401.9V411.1M436.00 388.9V405.3M436.25 393.5V407.7M436.50 381.1V402.2M436.75 378.0V395.7M437.00 363.5V386.9M437.25 361.4V385.1M437.50 359.5V360.3M437.75 359.5V364.0M443.50 359.5V366.7M443.75 359.5V371.7M444.00 375.8V389.3M444.25 379.0V390.4M444.50 384.4V399.6M444.75 387.6V405.7M445.00 398.1V406.1M445.25 396.4V414.8M445.50 400.5V417.7M445.75 400.4V414.1M446.00 409.6V424.3M446.25 403.4V424.3M446.50 404.3V422.7M446.75 408.1V425.0M447.00 419.6V437.1M447.25 426.1V432.7M447.50 438.1V448.3M447.75 436.9V449.9M448.00 455.1V458.5M448.25 453.2V458.5M454.00 444.1V458.5M454.25 445.4V458.5M454.50 424.8V443.5M454.75 427.7V441.3M455.00 409.9V433.3M455.25 411.4V435.4M455.50 403.6V426.1M455.75 405.5V424.1M456.00 401.3V416.9M456.25 402.3V416.2M456.50 399.7V420.3M456.75 407.5V420.4M457.00 403.0V415.0M457.25 402.3V420.1M457.50 399.3V414.4M457.75 399.4V417.3M458.00 394.9V415.7M458.25 403.2V414.8M458.50 401.9V416.7M458.75 398.6V413.2M459.00 396.8V408.0M459.25 389.4V411.4M459.50 384.3V397.2M459.75 390.4V407.1M460.00 377.0V386.2M460.25 369.1V383.9M460.50 359.5V369.6M460.75 359.5V371.5M466.50 359.5V360.6M466.75 359.5V365.0M467.00 367.0V383.2M467.25 369.3V386.9M467.50 380.7V395.6M467.75 376.7V392.7M468.00 395.3V412.6M468.25 388.8V408.8M468.50 401.1V418.1M468.75 397.1V415.8M469.00 399.6V420.5M469.25 404.4V420.5M469.50 403.1V415.0M469.75 403.7V416.3M470.00 398.6V421.8M470.25 398.9V422.8M470.50 406.5V418.8M470.75 406.8V417.3M471.00 411.6V425.6M471.25 413.6V426.3M471.50 417.6V439.8M471.75 423.7V433.0M472.00 441.5V454.9M472.25 440.5V454.6M472.75 456.7V458.5M478.25 454.5V458.5M478.50 446.5V458.5M478.75 446.8V458.5M479.00 429.8V442.2M479.25 425.6V445.0M479.50 410.9V430.0M479.75 408.9V427.0M480.00 400.6V423.4M480.25 406.6V426.6M480.50 405.3V420.0M480.75 403.7V413.9M481.00 395.9V414.8M481.25 400.5V420.0M481.50 395.9V418.1M481.75 402.0V419.2M482.00 407.6V418.3M482.25 400.8V416.8M482.50 398.0V418.2M482.75 398.0V416.3M483.00 393.0V406.6M483.25 393.4V412.0M483.50 388.9V403.8M483.75 383.0V404.7M484.00 379.8V391.4M484.25 370.6V395.5M484.50 359.5V373.6M484.75 359.5V377.0M490.50 359.5V361.0M490.75 359.5V363.3M491.00 359.5V378.6M491.25 359.5V380.1M491.50 375.1V392.5M491.75 374.3V394.5M492.00 396.8V405.7M492.25 390.5V409.7M492.50 394.9V415.3M492.75 396.1V413.9M493.00 399.4V415.8M493.25 399.2V412.2M493.50 401.2V416.8M493.75 401.5V411.7M494.00 396.8V418.6M494.25 399.7V413.6M494.50 400.0V417.3M494.75 407.3V421.9M495.00 408.4V427.9M495.25 410.8V430.4M495.50 418.1V439.7M495.75 422.7V436.1M496.00 435.5V453.9M496.25 438.5V456.3M496.50 451.2V458.5M496.75 454.7V458.5M502.50 437.1V458.5M502.75 445.2V457.0M503.00 421.9V446.5M503.25 426.5V445.0M503.50 408.0V431.5M503.75 408.0V430.2M504.00 406.3V426.6M504.25 405.0V420.2M504.50 399.9V420.9M504.75 402.5V413.3M505.00 401.8V415.6M505.25 404.0V417.6M505.50 400.7V414.5M505.75 403.2V411.3M506.00 401.6V416.2M506.25 399.1V419.8M506.50 396.0V412.7M506.75 390.4V413.2M507.00 391.2V405.9M507.25 387.8V401.6M507.50 380.7V395.6M507.75 375.9V392.5M508.00 361.0V372.9M508.25 359.5V378.5M508.50 359.5V362.5M514.00 359.5V361.9M514.25 359.5V365.8M514.50 364.0V376.7M514.75 359.5V377.8M515.00 374.1V393.9M515.25 381.0V396.5M515.50 386.9V403.9M515.75 388.2V403.2M516.00 396.1V413.6M516.25 402.7V417.3M516.50 394.2V414.6M516.75 394.2V414.2M517.00 404.7V408.8M517.25 403.8V418.2M517.50 401.4V413.2M517.75 400.5V418.0M518.00 396.7V414.4M518.25 399.1V418.8M518.50 400.0V416.0M518.75 401.4V418.2M519.00 399.2V416.2M519.25 403.5V419.2M519.50 400.4V417.0M519.75 397.7V413.1M520.00 401.5V417.7M520.25 404.2V417.1M520.50 405.8V413.2M520.75 405.0V416.0M521.00 395.5V417.8M521.25 401.3V419.0M521.50 400.6V414.0M521.75 400.8V417.9M522.00 400.3V414.5M522.25 402.3V413.8M522.50 402.0V421.5M522.75 401.6V417.9M523.00 395.5V415.2M523.25 397.9V418.1M523.50 405.0V421.3M523.75 402.9V412.9M524.00 397.6V420.7M524.25 399.6V410.9M524.50 400.1V418.3M524.75 402.6V415.6M525.00 398.0V415.7M525.25 402.3V420.5M525.50 402.6V418.0M525.75 396.9V420.8M526.00 398.3V416.9M526.25 399.3V418.3M526.50 404.9V409.7M526.75 397.9V421.5M527.00 395.5V416.4M527.25 401.2V415.2M527.50 397.9V421.1M527.75 397.7V417.1M528.00 397.5V417.3M528.25 399.9V415.3M528.50 398.7V415.9M528.75 403.1V417.2M529.00 400.4V418.0M529.25 400.8V413.5M529.50 405.0V417.2M529.75 397.8V413.8M530.00 407.1V419.0M530.25 399.0V416.2M530.50 399.4V415.3M530.75 398.1V418.2M531.00 403.6V415.5M531.25 401.2V416.3M531.50 398.7V416.3M531.75 404.1V414.1M532.00 397.4V414.8M532.25 401.4V418.1M532.50 400.3V419.0M532.75 399.3V411.6M533.00 400.5V416.2M533.25 395.5V415.1M533.50 400.4V416.0M533.75 395.5V421.5M534.00 400.5V421.5M534.25 399.6V416.5M534.50 399.1V413.4M534.75 398.2V413.3M535.00 395.5V416.8M535.25 398.4V420.0M535.50 395.5V418.6M535.75 403.1V417.7M536.00 399.0V415.4M536.25 402.5V416.6M536.50 395.5V416.0M536.75 401.0V414.2M537.00 395.5V415.4M537.25 402.6V413.2M537.50 406.0V417.4M537.75 396.6V415.3M538.00 396.5V413.3M538.25 395.5V411.9M538.50 400.2V416.9M538.75 401.8V421.2M539.00 395.5V411.9M539.25 400.1V419.8M539.50 402.4V415.9M539.75 395.8V414.7M540.00 399.6V418.9M540.25 404.3V418.1M540.50 404.1V415.3M540.75 398.0V414.5M541.00 400.6V421.5M541.25 406.2V417.1M541.50 403.6V420.5M541.75 403.4V418.2M542.00 406.9V414.7M542.25 398.6V415.1M542.50 398.8V412.9M542.75 401.7V415.8M543.00 401.1V417.7M543.25 395.5V413.1M543.50 403.2V412.1M543.75 398.9V421.5M544.00 402.4V415.3M544.25 399.8V413.2M544.50 403.9V415.6M544.75 397.6V421.5M545.00 396.4V417.5M545.25 398.2V416.1M545.50 402.1V413.3M545.75 403.9V417.3M546.00 398.1V416.7M546.25 403.4V416.8M546.50 404.2V415.2M546.75 396.2V416.3M547.00 401.3V417.2M547.25 402.9V414.5M547.50 397.5V418.9M547.75 398.1V421.5M548.00 403.9V417.1M548.25 398.8V414.9M548.50 396.3V415.4M548.75 396.1V421.5M549.00 403.9V418.7M549.25 398.9V414.7M549.50 400.1V421.5M549.75 399.2V414.6M550.00 404.7V413.3M550.25 398.6V416.5M550.50 399.4V418.9M550.75 402.6V417.8M551.00 395.5V415.4M551.25 398.3V417.3M551.50 402.0V421.5M551.75 400.6V421.5M552.00 398.5V416.9M552.25 400.2V415.8M552.50 404.9V416.4M552.75 395.8V415.9M553.00 399.2V418.5M553.25 395.5V419.4M553.50 401.3V417.2M553.75 399.8V418.0M554.00 406.1V417.5M554.25 401.0V418.1M554.50 395.5V415.9M554.75 399.1V412.2M555.00 402.6V417.4M555.25 396.3V417.3M555.50 398.2V421.5M555.75 401.2V416.9M556.00 400.5V412.7M556.25 397.1V421.5M556.50 404.7V416.9M556.75 395.5V414.4M557.00 403.2V420.4M557.25 403.2V411.9M557.50 401.9V417.6M557.75 399.9V411.9M558.00 403.6V414.0M558.25 400.3V420.1M558.50 396.2V416.3M558.75 399.2V415.4M559.00 400.1V420.8M559.25 395.9V420.0M559.50 401.0V419.1M559.75 396.1V415.4M560.00 405.2V418.3M560.25 403.5V416.3M560.50 402.3V419.2M560.75 403.1V416.4M561.00 395.5V413.4M561.25 403.7V412.9M561.50 403.0V421.5M561.75 405.9V417.8M562.00 395.5V414.3M562.25 398.1V413.6M562.50 400.1V414.3M562.75 401.2V414.1M563.00 401.7V414.6M563.25 395.5V411.5M563.50 399.5V414.6M563.75 404.7V417.0M564.00 395.5V415.7M564.25 395.5V412.3M564.50 402.4V417.1M564.75 405.4V413.6M565.00 395.5V417.1M565.25 399.6V421.3M565.50 398.0V415.6M565.75 395.5V419.5M566.00 398.8V413.9M566.25 396.4V414.6M566.50 401.2V412.2M566.75 403.7V420.1M567.00 403.4V421.5M567.25 396.9V421.5M567.50 398.0V416.7M567.75 398.1V419.0M568.00 396.1V418.9M568.25 399.1V416.2M568.50 403.9V419.1M568.75 403.6V419.5M569.00 404.1V415.2M569.25 398.0V417.7M569.50 404.9V420.2M569.75 403.6V411.6M570.00 395.5V415.9M570.25 399.1V414.0M570.50 400.2V421.4M570.75 398.5V421.5M571.00 401.5V417.2M571.25 398.0V413.1M571.50 399.4V415.1M571.75 398.2V421.4M572.00 400.6V420.1M572.25 404.6V419.8M572.50 403.9V415.1M572.75 398.9V419.9M573.00 399.1V414.9M573.25 399.6V417.2M573.50 403.4V414.7M573.75 396.4V413.8M574.00 397.9V411.0M574.25 401.6V421.5M574.50 395.5V419.1M574.75 397.2V418.1M575.00 396.4V417.9M575.25 401.1V416.5M575.50 397.3V419.3M575.75 401.5V417.5M576.00 401.6V415.1M576.25 398.5V415.4M576.50 402.7V419.5M576.75 396.9V415.8M577.00 402.0V418.6M577.25 403.3V418.2M577.50 402.7V421.5M577.75 402.7V415.8M578.00 401.8V413.6M578.25 403.6V421.1M578.50 395.5V419.1M578.75 396.9V417.9M579.00 400.5V417.0M579.25 401.6V417.3M579.50 401.2V417.0M579.75 405.5V418.5M580.00 399.4V413.7M580.25 402.9V411.9M580.50 400.3V412.9M580.75 398.1V415.0M581.00 400.8V414.1M581.25 403.0V415.8M581.50 397.5V417.6M581.75 404.0V416.7M582.00 398.9V417.8M582.25 397.4V417.1M582.50 401.0V418.5M582.75 396.4V413.2M583.00 398.8V415.1M583.25 400.2V414.6M583.50 404.4V415.5M583.75 396.3V415.7M584.00 401.6V414.7M584.25 400.6V421.5M584.50 397.2V415.6M584.75 404.2V415.2M585.00 402.4V419.2M585.25 402.5V412.0M585.50 403.0V421.5M585.75 399.9V411.9M586.00 404.3V419.1M586.25 397.2V417.4M586.50 398.2V419.8M586.75 402.4V417.4M587.00 402.8V415.1M587.25 397.3V421.4M587.50 398.4V414.8M587.75 397.6V418.8M588.00 403.2V416.0M588.25 402.1V421.5M588.50 400.8V417.8M588.75 398.5V415.9M589.00 401.3V413.0M589.25 401.0V418.0M589.50 402.7V423.4M589.75 402.4V415.0M590.00 409.1V421.3M590.25 406.4V422.0M590.50 417.3V429.3M590.75 414.7V428.1M591.00 424.8V449.5M591.25 426.0V439.8M591.50 445.5V458.5M591.75 441.8V458.5M597.50 454.3V458.5M597.75 453.7V458.5M598.00 436.3V449.2M598.25 437.6V449.3M598.50 420.6V434.4M598.75 422.8V432.8M599.00 405.2V426.2M599.25 404.4V430.4M599.50 405.1V419.0M599.75 399.7V419.3M600.00 402.0V419.0M600.25 401.0V416.2M600.50 403.3V411.6M600.75 400.2V417.3M601.00 398.5V421.5M601.25 401.6V416.7M601.50 396.9V411.6M601.75 400.4V419.1M602.00 399.6V417.9M602.25 399.1V419.4M602.50 395.5V416.2M602.75 396.3V417.3M603.00 398.2V421.5M603.25 403.0V412.3M603.50 401.3V420.9M603.75 401.3V416.4M604.00 400.8V412.4M604.25 401.8V415.9M604.50 400.1V413.1M604.75 398.6V413.1M605.00 397.7V414.8M605.25 395.5V419.8M605.50 405.2V414.5M605.75 400.1V415.2M606.00 400.9V421.2M606.25 404.8V411.8M606.50 405.4V415.9M606.75 395.9V418.4M607.00 395.5V413.3M607.25 404.8V417.6M607.50 398.5V416.5M607.75 402.0V417.7M608.00 402.4V416.5M608.25 401.2V415.5M608.50 403.5V413.8M608.75 403.4V421.0M609.00 395.5V417.1M609.25 405.9V418.0M609.50 402.9V415.3M609.75 401.2V416.8M610.00 401.3V412.9M610.25 403.0V417.7M610.50 398.2V418.0M610.75 401.1V414.6M611.00 401.6V413.3M611.25 398.0V413.7M611.50 400.3V416.6M611.75 400.3V414.2M612.00 395.8V415.9M612.25 401.2V417.2M612.50 402.8V415.3M612.75 404.0V413.6M613.00 395.8V419.1M613.25 399.2V415.5M613.50 401.9V415.0M613.75 400.7V420.9M614.00 395.5V416.8M614.25 400.5V418.9M614.50 400.8V416.2M614.75 399.6V421.5M615.00 395.5V421.5M615.25 402.9V418.9M615.50 396.3V415.8M615.75 398.0V417.3M616.00 401.4V421.2M616.25 401.7V417.9M616.50 395.5V415.0M616.75 400.0V413.9M617.00 401.3V417.3M617.25 401.0V418.7M617.50 403.9V421.5M617.75 400.2V419.3M618.00 400.8V415.3M618.25 397.9V416.6M618.50 403.8V418.7M618.75 398.0V418.4M619.00 395.5V411.6M619.25 399.6V418.5M619.50 399.3V412.8M619.75 396.4V419.8M620.00 400.7V414.5M620.25 398.7V416.1M620.50 398.8V419.6M620.75 395.5V417.7M621.00 398.5V416.5M621.25 400.4V414.4M621.50 395.5V417.7M621.75 404.9V418.4M622.00 401.2V420.8M622.25 400.9V419.9M622.50 395.5V415.6M622.75 395.5V415.8M623.00 397.6V413.5M623.25 403.3V421.5M623.50 399.7V416.5M623.75 401.8V411.7M624.00 398.6V413.2M624.25 398.2V418.0M624.50 404.1V413.8M624.75 403.3V415.8M625.00 405.6V419.1M625.25 395.5V421.5M625.50 398.7V421.5M625.75 400.8V419.9M626.00 396.2V419.4M626.25 400.2V412.4M626.50 403.0V419.9M626.75 402.1V421.4M627.00 398.1V421.5M627.25 398.1V418.7M627.50 397.5V419.0M627.75 404.6V413.4M628.00 401.4V413.3M628.25 403.7V416.5M628.50 399.7V415.2M628.75 395.5V416.1M629.00 401.4V421.5M629.25 404.5V417.9M629.50 402.9V419.3M629.75 406.4V421.5M630.00 401.2V419.2M630.25 403.1V421.5M630.50 399.5V416.8M630.75 395.5V417.4M631.00 404.6V416.1M631.25 399.2V414.9M631.50 396.5V414.7M631.75 404.5V421.5M632.00 399.1V414.9M632.25 399.8V417.4M632.50 398.4V414.1M632.75 401.7V417.4M633.00 404.1V413.4M633.25 401.7V417.0M633.50 402.7V420.9M633.75 403.1V416.5M634.00 401.8V415.9M634.25 400.2V421.5M634.50 401.1V415.3M634.75 402.9V419.5M635.00 403.7V417.9M635.25 395.5V419.2M635.50 400.5V421.5M635.75 395.7V415.3M636.00 395.5V416.6M636.25 404.5V415.8M636.50 404.6V417.7M636.75 399.7V412.9M637.00 403.3V417.6M637.25 398.8V416.3M637.50 400.6V414.4M637.75 397.5V418.6M638.00 398.9V418.5M638.25 402.5V417.9M638.50 396.6V418.0M638.75 401.1V419.5M639.00 403.3V417.8M639.25 397.4V417.9M639.50 396.9V416.2M639.75 406.4V414.5M640.00 404.8V417.5M640.25 395.5V415.2M640.50 404.0V415.0M640.75 402.3V421.5M641.00 405.2V416.1M641.25 403.1V420.2M641.50 402.0V419.8M641.75 399.1V412.4M642.00 403.5V421.5M642.25 396.8V414.7M642.50 399.9V421.5M642.75 402.7V412.1M643.00 402.0V414.6M643.25 397.2V415.7M643.50 397.0V412.7M643.75 395.5V417.8M644.00 399.5V417.7M644.25 401.4V418.5M644.50 396.2V415.0M644.75 399.3V413.0M645.00 405.6V411.1M645.25 400.1V421.5M645.50 398.4V417.0M645.75 395.5V413.5M646.00 399.4V419.2M646.25 400.2V418.2M646.50 400.7V411.2M646.75 401.0V415.9M647.00 399.2V420.3M647.25 400.3V419.9M647.50 395.5V421.5M647.75 402.0V417.1M648.00 400.8V421.5M648.25 401.3V421.2M648.50 403.0V419.8M648.75 401.9V416.6M649.00 395.9V421.4M649.25 404.7V416.3M649.50 396.3V414.9M649.75 395.5V420.3M650.00 403.4V418.1M650.25 401.4V419.1M650.50 403.4V414.6M650.75 397.8V413.4M651.00 403.7V418.4M651.25 396.8V413.1M651.50 400.0V421.5M651.75 396.9V418.6M652.00 403.6V419.9M652.25 395.5V415.2M652.50 400.8V415.9M652.75 395.5V414.0M653.00 402.0V412.2M653.25 400.9V416.7M653.50 403.0V418.2M653.75 402.1V417.5M654.00 405.0V418.5M654.25 399.9V415.1M654.50 399.1V415.6M654.75 396.5V417.4M655.00 398.3V415.4M655.25 396.4V419.2M655.50 402.9V420.4M655.75 398.5V415.4M656.00 402.7V413.7M656.25 400.1V414.2M656.50 404.9V421.5M656.75 398.0V418.7M657.00 401.8V414.8M657.25 403.7V416.7M657.50 397.7V421.3M657.75 403.6V412.8M658.00 400.7V412.5M658.25 397.3V416.2M658.50 400.9V418.2M658.75 395.5V414.9M659.00 402.3V413.7M659.25 398.4V412.6M659.50 399.9V418.8M659.75 401.5V420.8M660.00 397.8V414.4M660.25 398.0V421.3M660.50 403.6V419.5M660.75 402.8V413.9M661.00 397.2V418.8M661.25 397.2V411.5M661.50 396.5V406.7M661.75 392.0V414.0M662.00 384.0V398.6M662.25 380.1V402.8M662.50 366.4V388.3M662.75 373.4V386.7M663.00 359.5V368.1M663.25 359.5V361.4M669.00 359.5V365.8M669.25 359.5V367.5M669.50 372.2V383.8M669.75 367.4V379.5M670.00 378.6V401.9M670.25 378.6V398.3M670.50 388.0V408.9M670.75 397.7V410.9M671.00 400.9V415.2M671.25 396.7V414.4M671.50 394.7V419.3M671.75 395.4V412.2M672.00 401.5V414.3M672.25 397.6V416.7M672.50 398.6V414.1M672.75 399.6V417.6M673.00 401.5V419.0M673.25 407.7V422.7M673.50 409.2V422.9M673.75 405.9V424.9M674.00 421.2V438.7M674.25 421.3V434.7M674.50 432.6V450.9M674.75 436.9V450.4M675.00 450.4V458.5M675.25 448.8V458.5M681.00 445.6V458.5M681.25 444.1V458.5M681.50 424.9V441.8M681.75 428.9V446.4M682.00 417.0V430.8M682.25 419.9V434.1M682.50 407.3V427.6M682.75 406.4V421.8M683.00 404.4V419.0M683.25 400.6V419.5M683.50 399.0V419.6M683.75 400.4V413.4M684.00 400.5V420.6M684.25 397.5V416.8M684.50 400.4V419.5M684.75 397.5V419.8M685.00 395.5V416.9M685.25 403.0V411.3M685.50 402.3V418.3M685.75 400.8V413.9M686.00 403.9V416.0M686.25 399.7V415.6M686.50 401.7V413.0M686.75 403.8V417.6M687.00 398.0V412.2M687.25 395.5V419.3M687.50 396.8V415.0M687.75 402.1V412.1M688.00 398.3V417.5M688.25 402.8V421.5M688.50 403.4V414.0M688.75 395.5V421.1M689.00 400.0V418.2M689.25 402.9V416.0M689.50 403.1V418.7M689.75 400.9V421.5M690.00 399.8V421.5M690.25 396.5V421.5M690.50 402.8V419.5M690.75 396.1V420.7M691.00 400.5V412.9M691.25 401.3V416.9M691.50 401.9V414.9M691.75 400.1V416.3M692.00 401.2V416.6M692.25 395.5V419.6M692.50 402.5V421.3M692.75 396.8V415.5M693.00 402.8V421.5M693.25 395.5V418.5M693.50 396.4V417.2M693.75 400.3V417.2M694.00 400.1V420.4M694.25 401.3V419.6M694.50 402.2V414.3M694.75 403.5V420.0M695.00 403.5V417.8M695.25 397.5V411.6M695.50 397.2V421.5M695.75 403.5V416.6M696.00 403.4V417.8M696.25 402.3V414.0M696.50 402.1V417.5M696.75 400.3V417.4M697.00 400.6V419.2M697.25 397.1V415.8M697.50 399.6V419.0M697.75 401.1V417.4M698.00 404.2V421.5M698.25 403.5V418.0M698.50 398.4V412.6M698.75 401.0V417.1M699.00 400.8V416.5M699.25 395.9V420.3M699.50 403.1V421.5M699.75 401.9V416.0M700.00 400.6V417.1M700.25 401.3V417.6M700.50 397.6V418.0M700.75 399.9V421.2M701.00 396.2V415.1M701.25 402.8V421.5M701.50 403.5V421.5M701.75 397.2V416.6M702.00 400.8V419.4M702.25 400.5V421.0M702.50 402.0V415.6M702.75 395.5V421.5M703.00 402.7V415.7M703.25 401.4V417.6M703.50 403.2V419.1M703.75 399.3V419.7M704.00 397.5V421.5M704.25 400.8V414.9M704.50 404.3V413.5M704.75 404.9V413.4M705.00 395.5V417.6M705.25 402.1V417.6M705.50 399.5V414.9M705.75 399.2V413.2M706.00 402.0V419.1M706.25 404.0V417.6M706.50 405.8V421.5M706.75 403.0V414.0M707.00 400.4V421.3M707.25 402.3V414.4M707.50 405.1V421.5M707.75 397.2V413.9M708.00 401.0V418.1M708.25 402.6V419.4M708.50 410.1V415.3M708.75 402.6V416.8M709.00 400.9V419.2M709.25 400.7V414.3M709.50 402.4V416.9M709.75 399.1V414.4M710.00 401.3V421.5M710.25 399.2V419.0M710.50 401.8V416.4M710.75 401.3V414.9M711.00 400.9V421.5M711.25 400.8V417.0M711.50 400.5V416.0M711.75 399.7V414.1M712.00 406.0V415.7M712.25 402.4V415.4M712.50 403.3V416.2M712.75 397.9V420.7M713.00 397.3V421.3M713.25 401.7V418.9M713.50 398.7V421.5M713.75 401.6V415.7M714.00 402.5V412.1M714.25 399.5V410.7M714.50 403.9V420.4M714.75 400.9V415.3M715.00 397.9V411.5M715.25 395.9V419.8M715.50 402.8V416.7M715.75 407.4V421.5M716.00 400.1V418.5M716.25 401.9V414.9M716.50 403.1V416.6M716.75 397.5V410.6M717.00 395.5V420.3M717.25 402.0V417.7M717.50 399.3V418.6M717.75 404.2V420.7M718.00 402.8V413.8M718.25 395.5V419.7M718.50 403.1V413.3M718.75 402.0V414.2M719.00 402.9V417.5M719.25 395.5V415.3M719.50 399.6V421.0M719.75 398.8V419.2M720.00 395.5V416.1M720.25 398.0V412.8M720.50 395.5V414.1M720.75 403.0V416.9M721.00 399.0V416.4M721.25 402.5V413.2M721.50 402.5V420.1M721.75 398.4V413.8M722.00 396.0V415.8M722.25 395.5V413.1M722.50 401.4V419.9M722.75 403.1V421.5M723.00 400.3V421.5M723.25 403.5V417.8M723.50 402.3V416.1M723.75 403.3V415.4M724.00 405.3V417.1M724.25 399.0V421.3M724.50 400.4V418.4M724.75 407.1V417.5M725.00 405.8V418.0M725.25 395.5V413.5M725.50 399.9V417.3M725.75 402.6V412.6M726.00 401.6V416.5M726.25 399.9V414.7M726.50 402.4V416.3M726.75 396.3V418.9M727.00 400.4V418.8M727.25 401.0V413.6M727.50 400.4V418.0M727.75 400.5V416.6M728.00 404.1V416.2M728.25 396.3V415.1M728.50 398.9V415.9M728.75 400.8V420.5M729.00 395.9V418.1M729.25 395.5V413.4M729.50 404.7V418.2M729.75 403.2V418.6M730.00 402.4V421.5M730.25 397.2V416.1M730.50 397.8V412.9M730.75 400.1V416.8M731.00 399.0V412.7M731.25 400.0V419.9M731.50 404.3V414.9M731.75 401.5V415.7M732.00 395.4V413.9M732.25 395.9V416.7M732.50 397.3V406.4M732.75 391.9V415.4M733.00 382.0V405.2M733.25 385.6V400.0M733.50 368.0V392.5M733.75 374.9V391.2M734.00 359.5V370.6M734.25 359.5V363.9M740.00 359.5V366.0M740.25 359.5V368.9M740.50 368.0V378.0M740.75 367.8V379.4M741.00 386.6V397.5M741.25 379.9V399.9M741.50 393.1V410.4M741.75 386.6V405.4M742.00 394.5V416.2M742.25 394.0V409.2M742.50 394.5V417.2M742.75 399.2V416.8M743.00 399.7V417.5M743.25 399.5V420.2M743.50 401.7V413.7M743.75 399.3V417.3M744.00 403.2V412.0M744.25 396.1V421.5M744.50 401.9V419.8M744.75 401.3V416.3M745.00 401.9V412.8M745.25 401.3V412.5M745.50 401.4V416.3M745.75 405.5V413.5M746.00 402.6V415.1M746.25 402.6V416.7M746.50 405.0V414.2M746.75 396.5V421.5M747.00 398.3V414.5M747.25 396.3V420.7M747.50 395.9V417.7M747.75 398.8V417.9M748.00 396.9V417.4M748.25 400.1V415.4M748.50 403.0V417.2M748.75 395.5V413.6M749.00 399.9V413.9M749.25 398.2V416.6M749.50 403.3V413.0M749.75 405.4V418.1M750.00 400.1V417.0M750.25 404.9V416.9M750.50 403.2V413.0M750.75 401.9V419.0M751.00 402.0V417.3M751.25 403.2V415.7M751.50 399.5V412.3M751.75 400.8V418.2M752.00 401.8V415.2M752.25 400.2V415.0M752.50 402.0V415.7M752.75 398.6V418.2M753.00 402.2V419.4M753.25 397.9V415.3M753.50 405.0V416.8M753.75 402.2V421.5M754.00 401.5V417.7M754.25 400.5V417.4M754.50 397.1V417.0M754.75 399.2V421.5M755.00 405.2V416.8M755.25 401.5V415.2M755.50 404.8V417.8M755.75 405.6V417.1M756.00 401.9V416.9M756.25 400.5V419.0M756.50 405.5V420.4M756.75 404.5V423.2M757.00 411.0V419.1M757.25 414.7V423.4M757.50 417.2V427.6M757.75 418.8V437.4M758.00 436.5V448.1M758.25 433.8V450.0M758.50 451.4V458.5M758.75 450.6V458.5M764.50 444.2V458.5M764.75 446.6V458.5M765.00 426.8V448.6M765.25 429.5V446.5M765.50 420.5V438.4M765.75 419.7V431.0M766.00 409.1V423.0M766.25 414.2V423.6M766.50 405.8V419.0M766.75 404.8V418.0M767.00 396.6V416.2M767.25 404.4V413.2M767.50 395.7V415.9M767.75 402.0V416.5M768.00 398.7V412.8M768.25 398.7V416.3M768.50 397.5V414.8M768.75 403.1V419.7M769.00 396.3V421.5M769.25 401.1V421.5M769.50 401.9V417.6M769.75 402.6V414.3M770.00 400.6V416.2M770.25 403.3V417.2M770.50 404.0V410.6M770.75 398.5V421.0M771.00 395.5V415.4M771.25 403.6V419.8M771.50 401.8V417.0M771.75 400.7V415.6M772.00 401.9V415.6M772.25 395.5V417.7M772.50 404.5V416.1M772.75 401.8V414.5M773.00 401.0V418.2M773.25 395.5V416.4M773.50 402.4V416.5M773.75 400.6V410.8M774.00 405.3V421.3M774.25 397.2V415.1M774.50 396.9V414.6M774.75 398.0V413.2M775.00 400.1V421.5M775.25 405.4V418.9M775.50 399.5V415.6M775.75 401.9V409.3M776.00 403.5V420.4M776.25 399.5V414.3M776.50 395.5V414.8M776.75 396.7V416.4M777.00 404.9V421.5M777.25 402.1V416.2M777.50 403.6V415.6M777.75 395.5V413.8M778.00 402.5V417.8M778.25 401.6V419.2M778.50 396.2V410.6M778.75 398.2V421.5M779.00 401.9V416.7M779.25 399.5V421.5M779.50 401.2V415.3M779.75 396.0V414.5M780.00 403.8V418.2M780.25 404.2V420.9M780.50 397.2V415.0M780.75 400.7V415.2M781.00 399.3V419.6M781.25 395.5V415.8M781.50 400.2V415.2M781.75 405.8V421.5M782.00 399.5V415.1M782.25 403.1V417.9M782.50 402.9V413.6M782.75 403.4V418.1M783.00 396.6V418.0M783.25 401.3V416.4M783.50 401.9V411.4M783.75 398.5V414.7M784.00 396.9V417.6M784.25 400.2V414.6M784.50 395.5V419.2M784.75 395.5V413.2M785.00 395.5V413.0M785.25 400.2V417.3M785.50 402.8V421.5M785.75 405.3V419.2M786.00 398.5V417.3M786.25 405.9V415.5M786.50 401.9V418.7M786.75 398.5V410.9M787.00 399.3V417.4M787.25 395.5V418.7M787.50 400.2V418.6M787.75 398.3V413.4M788.00 399.6V417.7M788.25 403.7V414.0M788.50 402.9V420.5M788.75 397.7V412.6M789.00 401.9V419.0M789.25 403.0V419.3M789.50 401.6V413.8M789.75 395.5V417.3M790.00 395.5V419.9M790.25 397.6V414.3M790.50 399.3V421.5M790.75 395.9V414.9M791.00 395.5V421.3M791.25 399.5V421.5M791.50 400.3V417.1M791.75 402.3V421.5M792.00 396.4V419.1M792.25 399.6V419.6M792.50 398.5V415.1M792.75 400.4V414.8M793.00 402.4V415.4M793.25 400.2V413.2M793.50 398.9V416.8M793.75 397.4V419.2M794.00 395.5V420.0M794.25 403.1V419.5M794.50 402.7V412.2M794.75 404.4V416.4M795.00 404.8V417.0M795.25 402.4V416.6M795.50 399.1V415.3M795.75 398.0V419.3M796.00 400.8V417.4M796.25 401.6V416.3M796.50 402.4V416.6M796.75 399.9V420.0M797.00 396.0V413.3M797.25 398.2V411.8M797.50 397.5V417.3M797.75 404.0V416.8M798.00 399.4V419.0M798.25 396.6V411.2M798.50 401.5V416.6M798.75 400.3V415.7M799.00 395.5V415.1M799.25 401.6V421.5M799.50 402.3V414.9M799.75 405.4V417.6M800.00 401.3V416.6M800.25 396.9V418.6M800.50 395.5V412.0M800.75 397.3V413.3M801.00 401.9V415.4M801.25 402.1V417.7M801.50 401.2V414.1M801.75 400.2V411.0M802.00 396.5V411.8M802.25 401.7V417.0M802.50 393.7V415.4M802.75 397.6V414.3M803.00 393.1V404.9M803.25 390.5V399.8M803.50 379.1V390.3M803.75 373.4V392.2M804.00 368.3V379.4M804.25 359.5V375.5M804.50 359.5V360.7M804.75 359.5V365.8" fill="none" stroke="#12e4e4" stroke-width="0.6"/><path d="M215,515.5 L511.3,515.5 Q512.3,515.5 512.6,510 L513.2,503 Q513.6,496 515.5,495 L520,494.4 L523.8,494.8 Q524.8,495.5 525.2,500 L525.8,508 Q526.3,514.5 529,515.2 L532,515.5 L811,515.5" fill="none" stroke="#f07cc8" stroke-width="2"/><rect x="215.5" y="92.5" width="596" height="127" fill="none" stroke="#dc6c30" stroke-width="1.1"/><rect x="215.5" y="225.5" width="596" height="127" fill="none" stroke="#dc6c30" stroke-width="1.1"/><rect x="215.5" y="358.5" width="596" height="101" fill="none" stroke="#dc6c30" stroke-width="1.1"/><rect x="215.5" y="465.5" width="596" height="101" fill="none" stroke="#dc6c30" stroke-width="1.1"/></svg>
<div class="t" style="left:219.5px;top:98.7px;font-size:10.1px;color:#e8e890">Channel 1: Data</div>
<div class="t" style="left:219.5px;top:231.7px;font-size:10.1px;color:#f0f000">Function 1: Integral of Channel 1</div>
<div class="t" style="left:219.5px;top:364.2px;font-size:10.1px;color:#10d8d8">Function 2: Differential on Channel 1</div>
<div class="t" style="left:219.5px;top:471.7px;font-size:10.1px;color:#e880c0">Channel 4: Trigger</div>
<div class="t" style="left:199.5px;top:151.5px;font-size:8.4px;color:#e8e890">C1</div>
<svg style="position:absolute;left:209px;top:153px" width="6" height="6"><path d="M0 3 H5 M2.5 0.8 L5 3 L2.5 5.2" stroke="#e8e890" stroke-width="0.9" fill="none"/></svg>
<div class="t" style="left:199.5px;top:284.5px;font-size:8.4px;color:#f0f000">F1</div>
<svg style="position:absolute;left:209px;top:286px" width="6" height="6"><path d="M0 3 H5 M2.5 0.8 L5 3 L2.5 5.2" stroke="#f0f000" stroke-width="0.9" fill="none"/></svg>
<div class="t" style="left:199.5px;top:404.5px;font-size:8.4px;color:#10d8d8">F2</div>
<svg style="position:absolute;left:209px;top:406px" width="6" height="6"><path d="M0 3 H5 M2.5 0.8 L5 3 L2.5 5.2" stroke="#10d8d8" stroke-width="0.9" fill="none"/></svg>
<div class="t" style="left:197.5px;top:511.5px;font-size:8.4px;color:#e880c0">C4</div>
<svg style="position:absolute;left:209px;top:513px" width="6" height="6"><path d="M0 3 H5 M2.5 0.8 L5 3 L2.5 5.2" stroke="#e880c0" stroke-width="0.9" fill="none"/></svg>
<svg style="position:absolute;left:811px;top:500px" width="6" height="6"><path d="M6 3 H1 M3.5 0.8 L1 3 L3.5 5.2" stroke="#e880c0" stroke-width="0.9" fill="none"/></svg>
<div class="t" style="left:817px;top:498.5px;font-size:8.4px;color:#e880c0">T</div>
<div style="left:198px;top:57px;width:85px;height:27px;border:1px solid #d8d070;border-radius:3px"></div>
<div style="left:467px;top:57px;width:86px;height:27px;border:1px solid #c86898;border-radius:3px"></div>
<div style="left:561.5px;top:57px;width:132.5px;height:27px;border:1px solid #c8c8b8;border-radius:3px"></div>
<div style="left:703.4px;top:57px;width:114.60000000000002px;height:27px;border:1px solid #c8c8b8;border-radius:3px"></div>
<div class="t" style="left:200.5px;top:60.8px;font-size:8.6px;font-weight:bold;color:#f0e880">100 mV/</div>
<div class="t" style="left:202.5px;top:73.5px;font-size:8.6px;font-weight:bold;color:#f0e880">0 V</div>
<div class="t" style="left:470px;top:60.8px;font-size:8.6px;font-weight:bold;color:#f090c8">100 mV/</div>
<div class="t" style="left:472px;top:73.5px;font-size:8.6px;font-weight:bold;color:#f090c8">0 V</div>
<div class="t" style="left:564.3px;top:60.8px;font-size:8.6px;font-weight:bold;color:#f0f0f0">100 ns/</div>
<div class="t" style="left:617px;top:60.8px;font-size:8.6px;font-weight:bold;color:#f0f0f0">RT</div>
<div class="t" style="left:651.2px;top:60.8px;font-size:8.6px;font-weight:bold;color:#f0f0f0">Sample</div>
<div class="t" style="left:564.3px;top:73.5px;font-size:8.6px;font-weight:bold;color:#f0f0f0">500 MSa/s</div>
<div class="t" style="left:611.7px;top:73.5px;font-size:8.6px;font-weight:bold;color:#f0f0f0">500 S</div>
<div class="t" style="left:645.2px;top:73.5px;font-size:8.6px;font-weight:bold;color:#20e020">25.36 kWfm</div>
<div class="t" style="left:706px;top:60.8px;font-size:8.6px;font-weight:bold;color:#f080c0">Ch4 /</div>
<div class="t" style="left:738.6px;top:60.8px;font-size:8.6px;font-weight:bold;color:#f0f0f0">Edge</div>
<div class="t" style="left:784px;top:60.8px;font-size:8.6px;font-weight:bold;color:#f080c8">High</div>
<div class="t" style="left:706px;top:73.5px;font-size:8.6px;font-weight:bold;color:#3838e0">Trig'd</div>
<div class="t" style="left:749.3px;top:73.5px;font-size:8.6px;font-weight:bold;color:#f070c0">F=393.698□5 kHz</div>
<div style="left:215px;top:576px;width:596px;height:1px;background:#9a9a9a"></div>
<svg style="position:absolute;left:211px;top:571px" width="9" height="11"><path d="M1 0.5 H8 M4.5 0.5 V9.5 M1 9.5 H8" stroke="#aaa" stroke-width="1"/><path d="M2 10 L4.5 7 L7 10Z" fill="#aaa"/></svg>
<div style="left:810px;top:572px;width:1px;height:5px;background:#9a9a9a"></div>
<svg style="position:absolute;left:509px;top:571px" width="9" height="11"><path d="M0.5 10 L4 6 V10Z M8.5 10 L5 6 V10Z" fill="#f08030"/><path d="M1 1.5 H8 M4.5 1.5 V10" stroke="#70a8ea" stroke-width="1.2"/><path d="M1 1 V2.5 M8 1 V2.5" stroke="#70a8ea" stroke-width="1"/></svg>
<div class="b" style="left:945px;top:37px;width:44px;height:14px;"><svg style="position:absolute;left:5px;top:0px" width="15" height="14"><rect x="0.5" y="9" width="13" height="4" rx="1.5" fill="#cfe0f6" stroke="#3a6ac8" stroke-width="0.8"/><rect x="1" y="0.5" width="12" height="10.5" rx="2.5" fill="#2f64c0"/><text x="7" y="8.5" font-family="Liberation Sans" font-weight="bold" font-size="9" fill="#fff" text-anchor="middle">?</text></svg><div class="bl" style="position:absolute;left:22px;top:0;line-height:14px;font-size:9.20px">Help</div></div>
<div class="b" style="left:995px;top:37px;width:15px;height:14px;"><div class="bl" style="line-height:14px;font-size:9.20px;text-align:center;width:100%"><svg style="position:absolute;left:1px;top:0px" width="16" height="14"><path d="M3 2 Q8 7 12 12 M13 2 Q7 6 4 12" stroke="#e01010" stroke-width="2.2" fill="none" stroke-linecap="round"/></svg></div></div>
<div style="left:844.3px;top:59.2px;width:168px;height:14px;border:1px solid #6a6a6a;border-radius:3px;overflow:hidden;background:linear-gradient(#fff,#ececec 50%,#dcdcdc)"><div style="left:0;top:0;width:56px;height:14px;background:linear-gradient(#9cc3dc,#5f98c8 55%,#4a88c0);border-right:1px solid #6a6a6a"></div><div style="left:113px;top:0;width:1px;height:14px;background:#8a8a8a"></div><div class="bl" style="left:0;top:0;width:56px;text-align:center;line-height:14px;font-size:9.00px;color:#fff">Function</div><div class="bl" style="left:57px;top:0;width:56px;text-align:center;line-height:14px;font-size:9.20px">Scaling</div><div class="bl" style="left:114px;top:0;width:55px;text-align:center;line-height:14px;font-size:9.20px">Zoom</div></div>
<div class="b" style="left:846px;top:85px;width:33px;height:13px;"><div style="left:4px;top:3px;width:8px;height:7px;border:1px solid #222;background:#ffff00"></div><div class="bl" style="position:absolute;left:18px;top:0;line-height:13px;font-size:9.00px">F1</div></div>
<div class="b" style="left:889px;top:85px;width:33px;height:13px;"><div style="left:4px;top:3px;width:8px;height:7px;border:1px solid #222;background:#00ffff"></div><div class="bl" style="position:absolute;left:18px;top:0;line-height:13px;font-size:9.00px">F2</div></div>
<div class="bs" style="left:933px;top:85px;width:33px;height:13px;"><div style="left:4px;top:3px;width:8px;height:7px;border:1px solid #222;background:#00e040"></div><div class="bl" style="position:absolute;left:18px;top:0;line-height:13px;font-size:9.00px">F3</div></div>
<div class="b" style="left:976px;top:85px;width:33px;height:13px;"><div style="left:4px;top:3px;width:8px;height:7px;border:1px solid #222;background:#ff0080"></div><div class="bl" style="position:absolute;left:18px;top:0;line-height:13px;font-size:9.00px">F4</div></div>
<div class="b" style="left:855px;top:109px;width:59px;height:13px;"><svg style="position:absolute;left:5px;top:0px" width="14" height="14"><rect x="0" y="0.5" width="13" height="13" rx="1" fill="#18c018"/><path d="M4 4.5 A3.6 3.6 0 1 0 9 4.5" stroke="#fff" stroke-width="1.4" fill="none"/><path d="M6.5 2.3 V6.8" stroke="#fff" stroke-width="1.4"/></svg><div class="bl" style="position:absolute;left:24px;top:0;line-height:13px;font-size:9.30px">On</div></div>
<div class="bd" style="left:941px;top:109px;width:58px;height:13px;"><svg style="position:absolute;left:4px;top:0px" width="16" height="14"><path d="M1 9 Q8 2 15 9 Q8 14 1 9Z" fill="#fff" stroke="#ddd" stroke-width="0.7"/><circle cx="7.5" cy="9" r="2.8" fill="#e4eaf4"/><path d="M2 6 Q8 0 14 6" stroke="#ddd" stroke-width="0.8" fill="none"/></svg><div class="bl" style="position:absolute;left:24px;top:0;line-height:13px;font-size:9.40px">Visible</div></div>
<div class="t" style="left:846.7px;top:134.73px;font-size:10.2px;font-weight:bold;color:#333;transform:scaleX(0.918);transform-origin:0 0;">Category</div>
<div style="left:846.4px;top:147.7px;width:82px;height:58.5px;border:1px solid #6a6a6a;border-radius:3px 0 0 3px;overflow:hidden;background:#fff"></div>
<div style="left:928.4px;top:147.7px;width:81px;height:43.5px;border:1px solid #6a6a6a;border-left:none;border-radius:0 3px 3px 0;overflow:hidden;background:#fff"></div>
<div style="left:847.4px;top:148.7px;width:81.0px;height:13.300000000000011px;background:linear-gradient(#fff,#f2f2f2 50%,#e0e0e0);overflow:hidden"><svg style="position:absolute;left:3px;top:0px" width="18" height="14"><path d="M2 3.8 H7 M4.5 1.3 V6.3 M10 3.8 H15" stroke="#111" stroke-width="1.5"/><path d="M2.4 8.8 L6.6 13 M6.6 8.8 L2.4 13" stroke="#111" stroke-width="1.3"/><path d="M10 10.9 H15" stroke="#111" stroke-width="1.3"/><circle cx="12.5" cy="8.7" r="0.9" fill="#111"/><circle cx="12.5" cy="13.1" r="0.9" fill="#111"/></svg><div class="bl" style="left:23px;top:0;line-height:13.300000000000011px;font-size:9.20px;color:#3a3a3a">Arithmetic</div></div>
<div style="left:847.4px;top:163.0px;width:81.0px;height:13.900000000000006px;background:linear-gradient(#fff,#f2f2f2 50%,#e0e0e0);overflow:hidden"><svg style="position:absolute;left:2px;top:0px" width="20" height="14"><path d="M1 7.5 H19 M9 1.5 V14" stroke="#222" stroke-width="1"/><path d="M2 8 Q5 15 9 8 Q12.5 0.5 17 5.5" stroke="#1a3ad8" stroke-width="1.6" fill="none"/></svg><div class="bl" style="left:23px;top:0;line-height:13.900000000000006px;font-size:9.20px;color:#3a3a3a">Trigonometry</div></div>
<div style="left:847.4px;top:177.9px;width:81.0px;height:13.900000000000006px;background:linear-gradient(#fff,#f2f2f2 50%,#e0e0e0);overflow:hidden"><svg style="position:absolute;left:2px;top:0px" width="20" height="14"><path d="M1 4.5 H5 M1 10 H5 M15 7.3 H19" stroke="#111" stroke-width="1.3"/><path d="M4.5 1.8 H9 Q15 1.8 15 7.3 Q15 12.8 9 12.8 H4.5 Z" fill="#fff" stroke="#111" stroke-width="1.4"/></svg><div class="bl" style="left:23px;top:0;line-height:13.900000000000006px;font-size:9.20px;color:#3a3a3a">Bit Operation</div></div>
<div style="left:847.4px;top:192.8px;width:81.0px;height:13.899999999999977px;background:linear-gradient(#fff,#f2f2f2 50%,#e0e0e0);overflow:hidden"><div style="left:4px;top:-1px;font:italic 13px 'Liberation Serif';color:#111">f<span style="font-size:10px">ω</span></div><div class="bl" style="left:23px;top:0;line-height:13.899999999999977px;font-size:9.20px;color:#3a3a3a">Formula Editor</div></div>
<div style="left:929.4px;top:148.7px;width:80.0px;height:13.300000000000011px;background:linear-gradient(#fff,#f2f2f2 50%,#e0e0e0);overflow:hidden"><div style="left:5px;top:1px;font:bold 9.5px 'Liberation Sans';color:#111">{<i>x</i>}</div><div class="bl" style="left:23px;top:0;line-height:13.300000000000011px;font-size:9.20px;color:#3a3a3a">Algebra</div></div>
<div style="left:929.4px;top:163.0px;width:80.0px;height:13.900000000000006px;background:linear-gradient(#fff,#f2f2f2 50%,#e0e0e0);overflow:hidden"><svg style="position:absolute;left:3px;top:0px" width="20" height="14"><path d="M1 13 H19" stroke="#111" stroke-width="1"/><path d="M2 1 Q3 2 5 12 Q7 6 9 12 Q11.5 8 14 12 Q15.5 10.5 17 12" stroke="#111" stroke-width="1.1" fill="none"/></svg><div class="bl" style="left:23px;top:0;line-height:13.900000000000006px;font-size:9.20px;color:#3a3a3a">FFT</div></div>
<div style="left:929.4px;top:177.9px;width:80.0px;height:13.900000000000006px;background:linear-gradient(#9cc3dc,#5f98c8 55%,#4a88c0);overflow:hidden"><div style="left:3px;top:1px;width:16px;height:12px;background:#fff;border-radius:2px;font:bold 11px 'Liberation Serif';color:#111;text-align:center;line-height:12px">Σ</div><div class="bl" style="left:23.5px;top:0;line-height:13.900000000000006px;font-size:9.20px;color:#fff">Miscellaneous</div></div>
<div style="left:847px;top:162.0px;width:163px;height:1px;background:#8a8a8a"></div>
<div style="left:847px;top:176.9px;width:163px;height:1px;background:#8a8a8a"></div>
<div style="left:847px;top:191.8px;width:82px;height:1px;background:#8a8a8a"></div>
<div style="left:928.4px;top:148px;width:1px;height:44px;background:#8a8a8a"></div>
<div class="t" style="left:867.8px;top:216.23px;font-size:10.2px;font-weight:bold;color:#333;transform:scaleX(0.917);transform-origin:0 0;">Operator</div>
<div style="left:867px;top:228px;width:121px;height:58px;border:1px solid #5a5a5a;border-radius:3px;overflow:hidden;background:#fff"><div style="left:0;top:0px;width:121px;height:14px;background:linear-gradient(#fff,#f2f2f2 50%,#e0e0e0);border-top:none"><svg style="position:absolute;left:3px;top:0px" width="18" height="14"><path d="M2 12 L7 3 L16 8" stroke="#3a8ae0" stroke-width="0.8" fill="none" stroke-dasharray="1.2 1"/><circle cx="2" cy="12" r="1.3" fill="#1818c0"/><circle cx="7" cy="3" r="1.3" fill="#1818c0"/><circle cx="16" cy="8" r="1.3" fill="#1818c0"/></svg><div class="bl" style="left:24px;top:0;line-height:14px;font-size:9.20px;color:#3a3a3a">Linear Interpolation</div></div><div style="left:0;top:14px;width:121px;height:14px;background:linear-gradient(#fff,#f2f2f2 50%,#e0e0e0);border-top:1px solid #8a8a8a"><svg style="position:absolute;left:3px;top:0px" width="18" height="14"><path d="M2 12 Q6 0 16 8" stroke="#3a8ae0" stroke-width="0.8" fill="none" stroke-dasharray="1.2 1"/><circle cx="2" cy="12" r="1.3" fill="#1818c0"/><circle cx="7" cy="3" r="1.3" fill="#1818c0"/><circle cx="16" cy="8" r="1.3" fill="#1818c0"/></svg><div class="bl" style="left:24px;top:0;line-height:14px;font-size:9.20px;color:#3a3a3a">Sin(x)/x Interpolation</div></div><div style="left:0;top:29px;width:121px;height:14px;background:linear-gradient(#9cc3dc,#5f98c8 55%,#4a88c0);border-top:1px solid #8a8a8a"><svg style="position:absolute;left:3px;top:0px" width="18" height="14"><rect x="1" y="0.5" width="15" height="13" rx="2" fill="#fff"/><path d="M4 10 L7 6 L9 8 L13 4" stroke="#3a6ac0" stroke-width="0.9" fill="none"/></svg><div class="bl" style="left:24px;top:0;line-height:14px;font-size:9.20px;color:#fff">Trend</div></div><div style="left:0;top:44px;width:121px;height:14px;background:linear-gradient(#fff,#f2f2f2 50%,#e0e0e0);border-top:1px solid #8a8a8a"><svg style="position:absolute;left:3px;top:0px" width="18" height="14"><path d="M1 10 L3 4 L4 11 L6 3 L7 10 L9 2 L10 11 L12 3 L13 10 L15 4 L17 11" stroke="#1a1ad0" stroke-width="0.9" fill="none"/><path d="M1 9 Q9 4 17 10" stroke="#e02020" stroke-width="1.3" fill="none"/></svg><div class="bl" style="left:24px;top:0;line-height:14px;font-size:9.20px;color:#3a3a3a">Smoothing</div></div></div>
<div class="t" style="left:847px;top:311.56px;font-size:10.2px;font-weight:bold;color:#222;transform:scaleX(0.906);transform-origin:0 0;">Operand 1</div>
<div class="t" style="left:932.7px;top:311.56px;font-size:10.2px;font-weight:bold;color:#b4b4b4;transform:scaleX(0.920);transform-origin:0 0;">Operand 2</div>
<div style="left:846px;top:323.6px;width:77px;height:12.899999999999977px;border:1px solid #444;border-radius:3px;background:#000;overflow:hidden"><div class="bl" style="left:3px;line-height:12.899999999999977px;font-size:9.00px;color:#f2ec9a">Ch1</div><div style="left:62px;top:0;width:15px;height:12.899999999999977px;background:linear-gradient(#fff,#e0e0e0);border-left:1px solid #777"></div><svg style="position:absolute;left:65px;top:3px" width="10" height="9"><polygon points="0.5,0.5 9.5,0.5 5,8.5" fill="#333"/></svg></div>
<div style="left:931.8px;top:323.6px;width:76.90000000000009px;height:12.899999999999977px;border:1px solid #dadada;border-radius:3px;background:#fff"><div class="bl" style="left:0;width:60.90000000000009px;text-align:center;line-height:12.899999999999977px;font-size:9.00px;color:#c8c8c8">Ch1</div><div style="left:61.90000000000009px;top:0;width:1px;height:12.899999999999977px;background:#dadada"></div><svg style="position:absolute;left:64.90000000000009px;top:3px" width="10" height="8"><polygon points="1,1 9,1 5,7" fill="#d8d8d8"/></svg></div>
<div class="t" style="left:847.6px;top:348.06px;font-size:10.2px;font-weight:bold;color:#b4b4b4;transform:scaleX(0.896);transform-origin:0 0;">Smooth Length</div>
<div class="t" style="left:932.7px;top:348.06px;font-size:10.2px;font-weight:bold;color:#b4b4b4;transform:scaleX(0.915);transform-origin:0 0;">Upsample to</div>
<div style="left:846px;top:360px;width:77px;height:18px;border:1px solid #dadada;border-radius:3px 3px 0 0;background:#fff"></div>
<div class="dt" style="left:846px;width:79px;text-align:center;top:363.5px;color:#c8c8c8">7</div>
<div style="left:847px;top:376px;width:77px;height:1px;background:#e2e2e2"></div>
<div style="left:846px;top:378px;width:77px;height:12px;border:1px solid #dadada;border-radius:0 0 3px 3px;background:#fff"></div>
<svg style="position:absolute;left:846px;top:378px" width="79" height="14"><rect x="16.5" y="1" width="1.2" height="12" fill="#e4e4e4"/><polygon points="5.8,4.5 11.6,4.5 8.7,9.5" fill="#d0d0d0"/><rect x="33.5" y="1" width="1.2" height="12" fill="#e4e4e4"/><polygon points="22.6,9.5 28.4,9.5 25.5,4.5" fill="#d0d0d0"/><rect x="45.5" y="1" width="1.2" height="12" fill="#e4e4e4"/><text x="39.8" y="10.8" font-family="Liberation Sans" font-size="10.5" font-weight="bold" text-anchor="middle" fill="#d0d0d0">D</text><rect x="61.5" y="1" width="1.2" height="12" fill="#e4e4e4"/><polygon points="50.4,3.9 57.8,3.9 54.1,10.1" fill="#d0d0d0"/><polygon points="67.0,10.1 74.4,10.1 70.7,3.9" fill="#d0d0d0"/></svg>
<div style="left:932px;top:360px;width:77px;height:18px;border:1px solid #dadada;border-radius:3px 3px 0 0;background:#fff"></div>
<div class="dt" style="left:932px;width:79px;text-align:center;top:363.5px;color:#c8c8c8">8192</div>
<div style="left:933px;top:376px;width:77px;height:1px;background:#e2e2e2"></div>
<div style="left:932px;top:378px;width:77px;height:12px;border:1px solid #dadada;border-radius:0 0 3px 3px;background:#fff"></div>
<svg style="position:absolute;left:932px;top:378px" width="79" height="14"><rect x="16.5" y="1" width="1.2" height="12" fill="#e4e4e4"/><polygon points="5.8,4.5 11.6,4.5 8.7,9.5" fill="#d0d0d0"/><rect x="33.5" y="1" width="1.2" height="12" fill="#e4e4e4"/><polygon points="22.6,9.5 28.4,9.5 25.5,4.5" fill="#d0d0d0"/><rect x="45.5" y="1" width="1.2" height="12" fill="#e4e4e4"/><text x="39.8" y="10.8" font-family="Liberation Sans" font-size="10.5" font-weight="bold" text-anchor="middle" fill="#d0d0d0">D</text><rect x="61.5" y="1" width="1.2" height="12" fill="#e4e4e4"/><polygon points="50.4,3.9 57.8,3.9 54.1,10.1" fill="#d0d0d0"/><polygon points="67.0,10.1 74.4,10.1 70.7,3.9" fill="#d0d0d0"/></svg>
<div class="t" style="left:847px;top:400.56px;font-size:10.2px;font-weight:bold;color:#b4b4b4;transform:scaleX(0.914);transform-origin:0 0;">Histicon Meas</div>
<div class="t" style="left:954.2px;top:400.56px;font-size:10.2px;font-weight:bold;color:#b4b4b4;transform:scaleX(0.890);transform-origin:0 0;">Scale, σ/div</div>
<div style="left:846px;top:412.6px;width:97.39999999999998px;height:13.0px;border:1px solid #dadada;border-radius:3px;background:#fff"><div class="bl" style="left:0;width:81.39999999999998px;text-align:center;line-height:13.0px;font-size:9.00px;color:#c8c8c8">No Items</div><div style="left:82.39999999999998px;top:0;width:1px;height:13.0px;background:#dadada"></div><svg style="position:absolute;left:85.39999999999998px;top:3px" width="10" height="8"><polygon points="1,1 9,1 5,7" fill="#d8d8d8"/></svg></div>
<div style="left:952.4px;top:412.6px;width:56.3px;height:28.7px;border:1px solid #dadada;border-radius:3px;background:#fff;overflow:hidden"><div style="left:0;top:0;width:29px;height:14.5px;background:linear-gradient(#eaeaea,#dadada)"></div><div style="left:29px;top:0;width:1px;height:29px;background:#e2e2e2"></div><div style="left:0;top:14.5px;width:57px;height:1px;background:#e2e2e2"></div><div class="bl" style="left:0;width:29px;text-align:center;top:0;line-height:14.5px;font-size:9.00px;color:#c4c4c4">1</div><div class="bl" style="left:30px;width:27px;text-align:center;top:0;line-height:14.5px;font-size:9.00px;color:#c4c4c4">2</div><div class="bl" style="left:0;width:29px;text-align:center;top:15px;line-height:14px;font-size:9.00px;color:#c4c4c4">5</div><div class="bl" style="left:30px;width:27px;text-align:center;top:15px;line-height:14px;font-size:9.00px;color:#c4c4c4">10</div></div>
<div class="t" style="left:847px;top:438.56px;font-size:10.2px;font-weight:bold;color:#222;transform:scaleX(0.948);transform-origin:0 0;">Trend Parameter</div>
<div style="left:846px;top:450.6px;width:77px;height:12.799999999999955px;border:1px solid #444;border-radius:3px;background:#000;overflow:hidden"><div class="bl" style="left:3px;line-height:12.799999999999955px;font-size:9.00px;color:#f2ec9a"><span style='color:#fff'>Pos Width</span></div><div style="left:62px;top:0;width:15px;height:12.799999999999955px;background:linear-gradient(#fff,#e0e0e0);border-left:1px solid #777"></div><svg style="position:absolute;left:65px;top:3px" width="10" height="9"><polygon points="0.5,0.5 9.5,0.5 5,8.5" fill="#333"/></svg></div>
<div style="left:841px;top:509.5px;width:172px;height:1.5px;background:#888"></div>
<div class="t" style="left:841px;top:514.29px;font-size:11px;font-weight:bold;color:#1f64aa;transform:scaleX(0.939);transform-origin:0 0;">Actions for Function</div>
<div class="b" style="left:846px;top:527px;width:76px;height:14px;"><svg style="position:absolute;left:3px;top:1px" width="18" height="13"><path d="M2 1 V12 M6 1 V12 M2 6.5 H16" stroke="#1818c8" stroke-width="1.8" fill="none"/></svg><div class="bl" style="position:absolute;left:24px;top:0;line-height:14px;font-size:9.10px">Measure..</div></div>
<div class="b" style="left:932px;top:527px;width:77px;height:14px;"><svg style="position:absolute;left:4px;top:0px" width="15" height="14"><path d="M1 1 H12 L14 3 V13 H1Z" fill="#222"/><rect x="3.5" y="1" width="7" height="4" fill="#fff"/><rect x="8" y="1.6" width="1.6" height="2.8" fill="#222"/><rect x="3" y="8" width="9" height="5" fill="#8a8ae8"/></svg><div class="bl" style="position:absolute;left:24px;top:0;line-height:14px;font-size:8.80px">Save..</div></div>
<div class="b" style="left:846px;top:550px;width:76px;height:14px;"><svg style="position:absolute;left:3px;top:0px" width="18" height="14"><path d="M5 3 L10 1 L16 8 L10 13 L5 7Z" fill="#f0b020" stroke="#c08010" stroke-width="0.6"/><circle cx="4" cy="4" r="2.3" fill="none" stroke="#333" stroke-width="0.9"/></svg><div class="bl" style="position:absolute;left:24px;top:0;line-height:14px;font-size:9.00px">Label</div></div>
<div class="bs" style="left:189.1px;top:679.6px;width:20.400000000000006px;height:29.600000000000023px"><div style="left:5.7px;top:17px;width:8px;height:6px;border:1px solid #333;background:#ffff80"></div><div class="bl" style="left:0;top:2.5px;width:100%;text-align:center;font-size:9.40px;line-height:10px">Ch1</div></div>
<div style="left:215px;top:679px;width:72px;height:15px;background:#000;border-radius:3px 3px 0 0"></div>
<div class="dt" style="left:219.5px;top:682.0px;color:#f2ec9a">100 mV/div</div>
<div style="left:215px;top:694px;width:70px;height:3px;background:#fff;border-left:1px solid #8a8a8a;border-right:1px solid #8a8a8a"></div>
<div style="left:216px;top:694px;width:50px;height:2.5px;background:#9040e0"></div>
<div style="left:215px;top:697px;width:70px;height:12px;border:1px solid #8a8a8a;border-radius:0 0 3px 3px;background:linear-gradient(#fff,#f0f0f0 50%,#e2e2e2)"></div>
<svg style="position:absolute;left:215px;top:697px" width="72" height="14"><rect x="15.5" y="1" width="1.2" height="12" fill="#9a9a9a"/><polygon points="5.0,4.5 10.8,4.5 7.9,9.5" fill="#333"/><rect x="30.5" y="1" width="1.2" height="12" fill="#9a9a9a"/><polygon points="20.4,9.5 26.2,9.5 23.3,4.5" fill="#333"/><rect x="41.5" y="1" width="1.2" height="12" fill="#9a9a9a"/><text x="36.3" y="10.8" font-family="Liberation Sans" font-size="10.5" font-weight="bold" text-anchor="middle" fill="#333">D</text><rect x="56.5" y="1" width="1.2" height="12" fill="#9a9a9a"/><polygon points="45.6,3.9 53.0,3.9 49.3,10.1" fill="#333"/><polygon points="60.7,10.1 68.1,10.1 64.4,3.9" fill="#333"/></svg>
<div style="left:189.1px;top:720.4px;width:20.400000000000006px;height:22.600000000000023px;border:1px solid #6a6a6a;border-radius:3px;background:linear-gradient(#fff,#e6e6e6);overflow:hidden"><div style="left:0;top:0;width:100%;height:11.300000000000011px;background:linear-gradient(#9cc3dc,#5f98c8 55%,#4a88c0);border-bottom:1px solid #6a6a6a"></div><div class="bl" style="left:0;width:100%;text-align:center;top:0;line-height:12.300000000000011px;font-size:9.40px;color:#fff">Pos</div><div class="bl" style="left:0;width:100%;text-align:center;top:12.300000000000011px;line-height:10.300000000000011px;font-size:9.40px">Ofs</div></div>
<div style="left:215px;top:716px;width:72px;height:15px;background:#000;border-radius:3px 3px 0 0"></div>
<div class="dt" style="left:221.5px;top:719.0px;color:#f2ec9a">0 div</div>
<div style="left:215px;top:731px;width:70px;height:3px;background:#fff;border-left:1px solid #8a8a8a;border-right:1px solid #8a8a8a"></div>
<div style="left:251px;top:731px;width:1px;height:2px;background:#e04040"></div>
<div style="left:215px;top:734px;width:70px;height:12px;border:1px solid #8a8a8a;border-radius:0 0 3px 3px;background:linear-gradient(#fff,#f0f0f0 50%,#e2e2e2)"></div>
<svg style="position:absolute;left:215px;top:734px" width="72" height="14"><rect x="15.5" y="1" width="1.2" height="12" fill="#9a9a9a"/><polygon points="5.0,4.5 10.8,4.5 7.9,9.5" fill="#333"/><rect x="30.5" y="1" width="1.2" height="12" fill="#9a9a9a"/><polygon points="20.4,9.5 26.2,9.5 23.3,4.5" fill="#333"/><rect x="41.5" y="1" width="1.2" height="12" fill="#9a9a9a"/><text x="36.3" y="10.8" font-family="Liberation Sans" font-size="10.5" font-weight="bold" text-anchor="middle" fill="#333">0</text><rect x="56.5" y="1" width="1.2" height="12" fill="#9a9a9a"/><polygon points="45.6,3.9 53.0,3.9 49.3,10.1" fill="#333"/><polygon points="60.7,10.1 68.1,10.1 64.4,3.9" fill="#333"/></svg>
<div class="b" style="left:291.6px;top:679.6px;width:20.599999999999966px;height:29.600000000000023px"><div style="left:5.8px;top:17px;width:8px;height:6px;border:1px solid #333;background:#80ffff"></div><div class="bl" style="left:0;top:2.5px;width:100%;text-align:center;font-size:9.40px;line-height:10px">Ch2</div></div>
<div style="left:317px;top:679px;width:70px;height:17px;border:1px solid #dadada;border-radius:3px 3px 0 0;background:#fff"></div>
<div class="dt" style="left:317px;width:72px;text-align:center;top:682.0px;color:#c8c8c8">100 mV/div</div>
<div style="left:318px;top:694px;width:70px;height:1px;background:#e2e2e2"></div>
<div style="left:317px;top:697px;width:70px;height:12px;border:1px solid #dadada;border-radius:0 0 3px 3px;background:#fff"></div>
<svg style="position:absolute;left:317px;top:697px" width="72" height="14"><rect x="15.5" y="1" width="1.2" height="12" fill="#e4e4e4"/><polygon points="5.0,4.5 10.8,4.5 7.9,9.5" fill="#d0d0d0"/><rect x="30.5" y="1" width="1.2" height="12" fill="#e4e4e4"/><polygon points="20.4,9.5 26.2,9.5 23.3,4.5" fill="#d0d0d0"/><rect x="41.5" y="1" width="1.2" height="12" fill="#e4e4e4"/><text x="36.3" y="10.8" font-family="Liberation Sans" font-size="10.5" font-weight="bold" text-anchor="middle" fill="#d0d0d0">D</text><rect x="56.5" y="1" width="1.2" height="12" fill="#e4e4e4"/><polygon points="45.6,3.9 53.0,3.9 49.3,10.1" fill="#d0d0d0"/><polygon points="60.7,10.1 68.1,10.1 64.4,3.9" fill="#d0d0d0"/></svg>
<div style="left:291.6px;top:720.4px;width:20.599999999999966px;height:22.600000000000023px;border:1px solid #dadada;border-radius:3px;background:#fff;overflow:hidden"><div style="left:0;top:0;width:100%;height:11.300000000000011px;background:linear-gradient(#ececec,#dcdcdc);border-bottom:1px solid #e0e0e0"></div><div class="bl" style="left:0;width:100%;text-align:center;top:0;line-height:12.300000000000011px;font-size:9.20px;color:#d0d0d0">Pos</div><div class="bl" style="left:0;width:100%;text-align:center;top:12.300000000000011px;line-height:10.300000000000011px;font-size:9.20px;color:#c8c8c8">Ofs</div></div>
<div style="left:317px;top:716px;width:70px;height:17px;border:1px solid #dadada;border-radius:3px 3px 0 0;background:#fff"></div>
<div class="dt" style="left:317px;width:72px;text-align:center;top:719.0px;color:#c8c8c8">0 div</div>
<div style="left:318px;top:731px;width:70px;height:1px;background:#e2e2e2"></div>
<div style="left:317px;top:734px;width:70px;height:12px;border:1px solid #dadada;border-radius:0 0 3px 3px;background:#fff"></div>
<svg style="position:absolute;left:317px;top:734px" width="72" height="14"><rect x="15.5" y="1" width="1.2" height="12" fill="#e4e4e4"/><polygon points="5.0,4.5 10.8,4.5 7.9,9.5" fill="#d0d0d0"/><rect x="30.5" y="1" width="1.2" height="12" fill="#e4e4e4"/><polygon points="20.4,9.5 26.2,9.5 23.3,4.5" fill="#d0d0d0"/><rect x="41.5" y="1" width="1.2" height="12" fill="#e4e4e4"/><text x="36.3" y="10.8" font-family="Liberation Sans" font-size="10.5" font-weight="bold" text-anchor="middle" fill="#d0d0d0">0</text><rect x="56.5" y="1" width="1.2" height="12" fill="#e4e4e4"/><polygon points="45.6,3.9 53.0,3.9 49.3,10.1" fill="#d0d0d0"/><polygon points="60.7,10.1 68.1,10.1 64.4,3.9" fill="#d0d0d0"/></svg>
<div class="b" style="left:395px;top:679.6px;width:19.600000000000023px;height:29.600000000000023px"><div style="left:5.3px;top:17px;width:8px;height:6px;border:1px solid #333;background:#80ff80"></div><div class="bl" style="left:0;top:2.5px;width:100%;text-align:center;font-size:9.40px;line-height:10px">Ch3</div></div>
<div style="left:420px;top:679px;width:70px;height:17px;border:1px solid #dadada;border-radius:3px 3px 0 0;background:#fff"></div>
<div class="dt" style="left:420px;width:72px;text-align:center;top:682.0px;color:#c8c8c8">100 mV/div</div>
<div style="left:421px;top:694px;width:70px;height:1px;background:#e2e2e2"></div>
<div style="left:420px;top:697px;width:70px;height:12px;border:1px solid #dadada;border-radius:0 0 3px 3px;background:#fff"></div>
<svg style="position:absolute;left:420px;top:697px" width="72" height="14"><rect x="15.5" y="1" width="1.2" height="12" fill="#e4e4e4"/><polygon points="5.0,4.5 10.8,4.5 7.9,9.5" fill="#d0d0d0"/><rect x="30.5" y="1" width="1.2" height="12" fill="#e4e4e4"/><polygon points="20.4,9.5 26.2,9.5 23.3,4.5" fill="#d0d0d0"/><rect x="41.5" y="1" width="1.2" height="12" fill="#e4e4e4"/><text x="36.3" y="10.8" font-family="Liberation Sans" font-size="10.5" font-weight="bold" text-anchor="middle" fill="#d0d0d0">D</text><rect x="56.5" y="1" width="1.2" height="12" fill="#e4e4e4"/><polygon points="45.6,3.9 53.0,3.9 49.3,10.1" fill="#d0d0d0"/><polygon points="60.7,10.1 68.1,10.1 64.4,3.9" fill="#d0d0d0"/></svg>
<div style="left:395px;top:720.4px;width:19.600000000000023px;height:22.600000000000023px;border:1px solid #dadada;border-radius:3px;background:#fff;overflow:hidden"><div style="left:0;top:0;width:100%;height:11.300000000000011px;background:linear-gradient(#ececec,#dcdcdc);border-bottom:1px solid #e0e0e0"></div><div class="bl" style="left:0;width:100%;text-align:center;top:0;line-height:12.300000000000011px;font-size:9.20px;color:#d0d0d0">Pos</div><div class="bl" style="left:0;width:100%;text-align:center;top:12.300000000000011px;line-height:10.300000000000011px;font-size:9.20px;color:#c8c8c8">Ofs</div></div>
<div style="left:420px;top:716px;width:70px;height:17px;border:1px solid #dadada;border-radius:3px 3px 0 0;background:#fff"></div>
<div class="dt" style="left:420px;width:72px;text-align:center;top:719.0px;color:#c8c8c8">0 div</div>
<div style="left:421px;top:731px;width:70px;height:1px;background:#e2e2e2"></div>
<div style="left:420px;top:734px;width:70px;height:12px;border:1px solid #dadada;border-radius:0 0 3px 3px;background:#fff"></div>
<svg style="position:absolute;left:420px;top:734px" width="72" height="14"><rect x="15.5" y="1" width="1.2" height="12" fill="#e4e4e4"/><polygon points="5.0,4.5 10.8,4.5 7.9,9.5" fill="#d0d0d0"/><rect x="30.5" y="1" width="1.2" height="12" fill="#e4e4e4"/><polygon points="20.4,9.5 26.2,9.5 23.3,4.5" fill="#d0d0d0"/><rect x="41.5" y="1" width="1.2" height="12" fill="#e4e4e4"/><text x="36.3" y="10.8" font-family="Liberation Sans" font-size="10.5" font-weight="bold" text-anchor="middle" fill="#d0d0d0">0</text><rect x="56.5" y="1" width="1.2" height="12" fill="#e4e4e4"/><polygon points="45.6,3.9 53.0,3.9 49.3,10.1" fill="#d0d0d0"/><polygon points="60.7,10.1 68.1,10.1 64.4,3.9" fill="#d0d0d0"/></svg>
<div class="bs" style="left:497px;top:679.6px;width:20.600000000000023px;height:29.600000000000023px"><div style="left:5.8px;top:17px;width:8px;height:6px;border:1px solid #333;background:#ff80c0"></div><div class="bl" style="left:0;top:2.5px;width:100%;text-align:center;font-size:9.40px;line-height:10px">Ch4</div></div>
<div style="left:522px;top:679px;width:72px;height:15px;background:#000;border-radius:3px 3px 0 0"></div>
<div class="dt" style="left:526.5px;top:682.0px;color:#f080c0">100 mV/div</div>
<div style="left:522px;top:694px;width:70px;height:3px;background:#fff;border-left:1px solid #8a8a8a;border-right:1px solid #8a8a8a"></div>
<div style="left:523px;top:694px;width:50px;height:2.5px;background:#9040e0"></div>
<div style="left:522px;top:697px;width:70px;height:12px;border:1px solid #8a8a8a;border-radius:0 0 3px 3px;background:linear-gradient(#fff,#f0f0f0 50%,#e2e2e2)"></div>
<svg style="position:absolute;left:522px;top:697px" width="72" height="14"><rect x="15.5" y="1" width="1.2" height="12" fill="#9a9a9a"/><polygon points="5.0,4.5 10.8,4.5 7.9,9.5" fill="#333"/><rect x="30.5" y="1" width="1.2" height="12" fill="#9a9a9a"/><polygon points="20.4,9.5 26.2,9.5 23.3,4.5" fill="#333"/><rect x="41.5" y="1" width="1.2" height="12" fill="#9a9a9a"/><text x="36.3" y="10.8" font-family="Liberation Sans" font-size="10.5" font-weight="bold" text-anchor="middle" fill="#333">D</text><rect x="56.5" y="1" width="1.2" height="12" fill="#9a9a9a"/><polygon points="45.6,3.9 53.0,3.9 49.3,10.1" fill="#333"/><polygon points="60.7,10.1 68.1,10.1 64.4,3.9" fill="#333"/></svg>
<div style="left:497px;top:720.4px;width:20.600000000000023px;height:22.600000000000023px;border:1px solid #6a6a6a;border-radius:3px;background:linear-gradient(#fff,#e6e6e6);overflow:hidden"><div style="left:0;top:0;width:100%;height:11.300000000000011px;background:linear-gradient(#9cc3dc,#5f98c8 55%,#4a88c0);border-bottom:1px solid #6a6a6a"></div><div class="bl" style="left:0;width:100%;text-align:center;top:0;line-height:12.300000000000011px;font-size:9.40px;color:#fff">Pos</div><div class="bl" style="left:0;width:100%;text-align:center;top:12.300000000000011px;line-height:10.300000000000011px;font-size:9.40px">Ofs</div></div>
<div style="left:522px;top:716px;width:72px;height:15px;background:#000;border-radius:3px 3px 0 0"></div>
<div class="dt" style="left:528.5px;top:719.0px;color:#f080c0">0 div</div>
<div style="left:522px;top:731px;width:70px;height:3px;background:#fff;border-left:1px solid #8a8a8a;border-right:1px solid #8a8a8a"></div>
<div style="left:558px;top:731px;width:1px;height:2px;background:#e04040"></div>
<div style="left:522px;top:734px;width:70px;height:12px;border:1px solid #8a8a8a;border-radius:0 0 3px 3px;background:linear-gradient(#fff,#f0f0f0 50%,#e2e2e2)"></div>
<svg style="position:absolute;left:522px;top:734px" width="72" height="14"><rect x="15.5" y="1" width="1.2" height="12" fill="#9a9a9a"/><polygon points="5.0,4.5 10.8,4.5 7.9,9.5" fill="#333"/><rect x="30.5" y="1" width="1.2" height="12" fill="#9a9a9a"/><polygon points="20.4,9.5 26.2,9.5 23.3,4.5" fill="#333"/><rect x="41.5" y="1" width="1.2" height="12" fill="#9a9a9a"/><text x="36.3" y="10.8" font-family="Liberation Sans" font-size="10.5" font-weight="bold" text-anchor="middle" fill="#333">0</text><rect x="56.5" y="1" width="1.2" height="12" fill="#9a9a9a"/><polygon points="45.6,3.9 53.0,3.9 49.3,10.1" fill="#333"/><polygon points="60.7,10.1 68.1,10.1 64.4,3.9" fill="#333"/></svg>
<div style="left:632.2px;top:678.6px;width:73.5px;height:32.5px;border-radius:4px;box-shadow:0 0 0 1.3px #4f7f9f"></div>
<div style="left:633px;top:679px;width:73px;height:15px;background:#000;border-radius:3px 3px 0 0"></div>
<div class="dt" style="left:637.5px;top:682.0px;color:#f4f4f4">100 ns/div</div>
<div style="left:633px;top:694px;width:71px;height:3px;background:#fff;border-left:1px solid #8a8a8a;border-right:1px solid #8a8a8a"></div>
<div style="left:634px;top:694px;width:4px;height:2.5px;background:#9040e0"></div>
<div style="left:633px;top:697px;width:71px;height:12px;border:1px solid #8a8a8a;border-radius:0 0 3px 3px;background:linear-gradient(#fff,#f0f0f0 50%,#e2e2e2)"></div>
<svg style="position:absolute;left:633px;top:697px" width="73" height="14"><rect x="15.5" y="1" width="1.2" height="12" fill="#9a9a9a"/><polygon points="10.5,4.1 10.5,9.9 5.5,7.0" fill="#333"/><rect x="30.5" y="1" width="1.2" height="12" fill="#9a9a9a"/><polygon points="21.1,4.1 21.1,9.9 26.0,7.0" fill="#333"/><rect x="41.5" y="1" width="1.2" height="12" fill="#9a9a9a"/><text x="36.8" y="10.8" font-family="Liberation Sans" font-size="10.5" font-weight="bold" text-anchor="middle" fill="#333">D</text><rect x="57.5" y="1" width="1.2" height="12" fill="#9a9a9a"/><polygon points="53.1,3.3 53.1,10.7 46.8,7.0" fill="#333"/><polygon points="62.2,3.3 62.2,10.7 68.4,7.0" fill="#333"/></svg>
<div style="left:604.6px;top:720.4px;width:24.0px;height:22.600000000000023px;border:1px solid #6a6a6a;border-radius:3px;background:linear-gradient(#fff,#e6e6e6);overflow:hidden"><div style="left:0;top:0;width:100%;height:11.300000000000011px;background:linear-gradient(#9cc3dc,#5f98c8 55%,#4a88c0);border-bottom:1px solid #6a6a6a"></div><div class="bl" style="left:0;width:100%;text-align:center;top:0;line-height:12.300000000000011px;font-size:9.40px;color:#fff">Pos</div><div class="bl" style="left:0;width:100%;text-align:center;top:12.300000000000011px;line-height:10.300000000000011px;font-size:9.40px"><span style='font-size:8.8px'>Delay</span></div></div>
<div style="left:633px;top:716px;width:73px;height:15px;background:#000;border-radius:3px 3px 0 0"></div>
<div class="dt" style="left:637.5px;top:719.0px;color:#f4f4f4">50 %</div>
<div style="left:633px;top:731px;width:71px;height:3px;background:#fff;border-left:1px solid #8a8a8a;border-right:1px solid #8a8a8a"></div>
<div style="left:634px;top:731px;width:36px;height:2.5px;background:#9040e0"></div>
<div style="left:633px;top:734px;width:71px;height:12px;border:1px solid #8a8a8a;border-radius:0 0 3px 3px;background:linear-gradient(#fff,#f0f0f0 50%,#e2e2e2)"></div>
<svg style="position:absolute;left:633px;top:734px" width="73" height="14"><rect x="15.5" y="1" width="1.2" height="12" fill="#9a9a9a"/><polygon points="10.5,4.1 10.5,9.9 5.5,7.0" fill="#333"/><rect x="30.5" y="1" width="1.2" height="12" fill="#9a9a9a"/><polygon points="21.1,4.1 21.1,9.9 26.0,7.0" fill="#333"/><rect x="41.5" y="1" width="1.2" height="12" fill="#9a9a9a"/><text x="36.8" y="10.8" font-family="Liberation Sans" font-size="10.5" font-weight="bold" text-anchor="middle" fill="#333">D</text><rect x="57.5" y="1" width="1.2" height="12" fill="#9a9a9a"/><polygon points="53.1,3.3 53.1,10.7 46.8,7.0" fill="#333"/><polygon points="62.2,3.3 62.2,10.7 68.4,7.0" fill="#333"/></svg>
<div style="left:716px;top:680px;width:28.6px;height:48.5px;border:1px solid #6a6a6a;border-radius:3px;overflow:hidden;background:#fff"><div style="left:0;top:0;width:100%;height:12px;background:linear-gradient(#fff,#e8e8e8);border-bottom:1px solid #8a8a8a"></div><div style="left:0;top:12.6px;width:100%;height:11.5px;background:linear-gradient(#fff,#e8e8e8);border-bottom:1px solid #8a8a8a"></div><div style="left:0;top:25px;width:100%;height:11.5px;background:linear-gradient(#fff,#e8e8e8);border-bottom:1px solid #8a8a8a"></div><div style="left:0;top:37.4px;width:100%;height:12px;background:linear-gradient(#9cc3dc,#5f98c8 55%,#4a88c0)"></div><div class="bl" style="left:0;width:100%;text-align:center;top:1px;font-size:9.20px;line-height:11px">Ch1</div><div class="bl" style="left:0;width:100%;text-align:center;top:13.5px;font-size:9.20px;line-height:11px">Ch2</div><div class="bl" style="left:0;width:100%;text-align:center;top:26px;font-size:9.20px;line-height:11px">Ch3</div><div class="bl" style="left:0;width:100%;text-align:center;top:38.5px;font-size:9.20px;line-height:11px;color:#fff">Ch4</div></div>
<div style="left:751px;top:679px;width:74px;height:15px;background:#000;border-radius:3px 3px 0 0"></div>
<div class="dt" style="left:755.5px;top:682.0px;color:#f080c0">100 mV</div>
<div style="left:751px;top:694px;width:72px;height:3px;background:#fff;border-left:1px solid #8a8a8a;border-right:1px solid #8a8a8a"></div>
<div style="left:752px;top:694px;width:0px;height:2.5px;background:#9040e0"></div>
<div style="left:786px;top:694.5px;width:5px;height:2.5px;background:#9040e0"></div>
<div style="left:751px;top:697px;width:72px;height:12px;border:1px solid #8a8a8a;border-radius:0 0 3px 3px;background:linear-gradient(#fff,#f0f0f0 50%,#e2e2e2)"></div>
<svg style="position:absolute;left:751px;top:697px" width="74" height="14"><rect x="15.5" y="1" width="1.2" height="12" fill="#9a9a9a"/><polygon points="5.2,4.5 11.0,4.5 8.1,9.5" fill="#333"/><rect x="31.5" y="1" width="1.2" height="12" fill="#9a9a9a"/><polygon points="21.0,9.5 26.8,9.5 23.9,4.5" fill="#333"/><rect x="42.5" y="1" width="1.2" height="12" fill="#9a9a9a"/><text x="37.3" y="10.8" font-family="Liberation Sans" font-size="10.5" font-weight="bold" text-anchor="middle" fill="#333">0</text><rect x="57.5" y="1" width="1.2" height="12" fill="#9a9a9a"/><polygon points="47.0,3.9 54.4,3.9 50.7,10.1" fill="#333"/><polygon points="62.5,10.1 69.9,10.1 66.2,3.9" fill="#333"/></svg>
<div style="left:751px;top:715.9px;width:71.7px;height:11.3px;border:1px solid #6a6a6a;border-radius:3px;overflow:hidden;background:linear-gradient(#fff,#e6e6e6)"><div style="left:0;top:0;width:37px;height:12px;background:linear-gradient(#9cc3dc,#5f98c8 55%,#4a88c0);border-right:1px solid #6a6a6a"></div><div class="bl" style="left:0;width:37px;text-align:center;top:0;line-height:11.3px;font-size:9.20px;color:#fff">Freerun</div><div class="bl" style="left:38px;width:34px;text-align:center;top:0;line-height:11.3px;font-size:9.20px">Trig'd</div></div>
<div style="left:714.4px;top:733.8px;width:108.3px;height:11.6px;border:1px solid #6a6a6a;border-radius:3px;overflow:hidden;background:linear-gradient(#fff,#e6e6e6)"><div style="left:0;top:0;width:37px;height:12px;background:linear-gradient(#9cc3dc,#5f98c8 55%,#4a88c0);border-right:1px solid #6a6a6a"></div><div style="left:73px;top:0;width:1px;height:12px;background:#8a8a8a"></div><div class="bl" style="left:0;width:37px;text-align:center;top:0;line-height:11.6px;font-size:9.20px;color:#fff">Pos</div><div class="bl" style="left:38px;width:35px;text-align:center;top:0;line-height:11.6px;font-size:9.20px">Neg</div><div class="bl" style="left:74px;width:35px;text-align:center;top:0;line-height:11.6px;font-size:9.20px">Bislope</div></div>
<div style="left:189.2px;top:753px;width:634.5px;height:29.5px;border:1px solid #6a6a6a;border-radius:3px;background:linear-gradient(#f6f6f6,#e8e8e8)"></div>
<div style="left:190.2px;top:754px;width:78.5px;height:14.299999999999955px;background:linear-gradient(#9cc3dc,#5f98c8 55%,#4a88c0);overflow:hidden"><svg style="position:absolute;left:5px;top:1px" width="14" height="13"><rect width="14" height="13" fill="#a8a8a0"/><ellipse cx="7" cy="6.5" rx="6" ry="4" transform="rotate(40 7 6.5)" fill="#d8a040"/><ellipse cx="7" cy="6.5" rx="2.5" ry="1.5" transform="rotate(40 7 6.5)" fill="#f8f0c0"/></svg><div class="bl" style="left:24px;top:0;line-height:14.299999999999955px;font-size:9.00px;color:#fff">Channels</div></div>
<div style="left:269.7px;top:754px;width:78.90000000000003px;height:14.299999999999955px;background:linear-gradient(#fff,#f0f0f0 50%,#e2e2e2);overflow:hidden"><svg style="position:absolute;left:3px;top:1px" width="18" height="13"><path d="M1 12 V2 H5 V12 M7 12 V2 H11 V12" stroke="#111" stroke-width="1.6" fill="none"/><circle cx="3" cy="7" r="1.2" fill="#e02020"/><circle cx="6" cy="5" r="1.2" fill="#20c020"/><circle cx="9" cy="8" r="1.2" fill="#e020e0"/><circle cx="12" cy="6" r="1.2" fill="#2020e0"/><circle cx="14" cy="9" r="1.2" fill="#e0e020"/></svg><div class="bl" style="left:24px;top:0;line-height:14.299999999999955px;font-size:9.00px;color:#3a3a3a">Acquire</div></div>
<div style="left:349.6px;top:754px;width:78.0px;height:14.299999999999955px;background:linear-gradient(#fff,#f0f0f0 50%,#e2e2e2);overflow:hidden"><svg style="position:absolute;left:3px;top:1px" width="18" height="13"><path d="M1 12 H8 V2 H16" stroke="#1818c8" stroke-width="1.4" fill="none"/><path d="M3 7 H13" stroke="#e02020" stroke-width="1.2"/><path d="M3 7 L6 5 V9Z M13 7 L10 5 V9Z" fill="#e02020"/></svg><div class="bl" style="left:24px;top:0;line-height:14.299999999999955px;font-size:9.00px;color:#3a3a3a">Trigger</div></div>
<div style="left:428.6px;top:754px;width:78.79999999999995px;height:14.299999999999955px;background:linear-gradient(#fff,#f0f0f0 50%,#e2e2e2);overflow:hidden"><svg style="position:absolute;left:4px;top:1px" width="18" height="13"><rect x="0.5" y="1.5" width="16" height="10" fill="#222" stroke="#666"/><rect x="2" y="3.5" width="13" height="6" fill="#20a020"/><path d="M2 6.5 H15" stroke="#ff0" stroke-width="0.8" stroke-dasharray="1 1"/></svg><div class="bl" style="left:24px;top:0;line-height:14.299999999999955px;font-size:9.00px;color:#3a3a3a">Display</div></div>
<div style="left:508.4px;top:754px;width:78.0px;height:14.299999999999955px;background:linear-gradient(#fff,#f0f0f0 50%,#e2e2e2);overflow:hidden"><svg style="position:absolute;left:3px;top:0px" width="15" height="14"><path d="M1 1 H12 L14 3 V13 H1Z" fill="#222"/><rect x="3.5" y="1" width="7" height="4" fill="#fff"/><rect x="3" y="8" width="9" height="5" fill="#8a8ae8"/></svg><div class="bl" style="left:24px;top:0;line-height:14.299999999999955px;font-size:9.00px;color:#3a3a3a">Save/Recall</div></div>
<div style="left:587.4px;top:754px;width:78.80000000000007px;height:14.299999999999955px;background:linear-gradient(#fff,#f0f0f0 50%,#e2e2e2);overflow:hidden"><svg style="position:absolute;left:5px;top:0px" width="20" height="14"><path d="M1 13 Q5 13 7 4 Q9 -1 11 4 Q13 13 18 13" stroke="#1818c8" stroke-width="1.4" fill="none"/><path d="M6 2 V14 M12 2 V14" stroke="#e02020" stroke-width="0.9" stroke-dasharray="1 1"/></svg><div class="bl" style="left:24px;top:0;line-height:14.299999999999955px;font-size:9.00px;color:#3a3a3a">Marker</div></div>
<div style="left:667.2px;top:754px;width:78.09999999999991px;height:14.299999999999955px;background:linear-gradient(#fff,#f0f0f0 50%,#e2e2e2);overflow:hidden"><svg style="position:absolute;left:3px;top:1px" width="18" height="13"><path d="M2 1 V12 M6 1 V12 M2 6.5 H16" stroke="#1818c8" stroke-width="1.8" fill="none"/></svg><div class="bl" style="left:24px;top:0;line-height:14.299999999999955px;font-size:9.00px;color:#3a3a3a">Measure</div></div>
<div style="left:746.3px;top:754px;width:78.40000000000009px;height:14.299999999999955px;background:linear-gradient(#9cc3dc,#5f98c8 55%,#4a88c0);overflow:hidden"><div style="left:1px;top:0px;width:17px;height:13px;background:#fff;font:italic bold 12px 'Liberation Serif';color:#111;padding-left:2px">f<span style="font-size:9px">ω</span></div><div class="bl" style="left:23px;top:0;line-height:14.299999999999955px;font-size:9.00px;color:#fff">Math</div></div>
<div style="left:190.2px;top:769.3px;width:78.5px;height:14.200000000000045px;background:linear-gradient(#fdfdfd,#f0f0f0 50%,#e4e4e4);overflow:hidden"><svg style="position:absolute;left:4px;top:0px" width="20" height="14"><path d="M2 13 L8 6 V13 M8 13 V1 L10 1 V13 M11 13 V4 L13 4 V13 M14 13 V8 L18 13Z" fill="#e81818" stroke="#e81818" stroke-width="1"/><path d="M1 13 H19" stroke="#e81818"/></svg><div class="bl" style="left:24px;top:0;line-height:14.200000000000045px;font-size:9.00px;color:#3a3a3a">Histogram</div></div>
<div style="left:269.7px;top:769.3px;width:78.90000000000003px;height:14.200000000000045px;background:linear-gradient(#fdfdfd,#f0f0f0 50%,#e4e4e4);overflow:hidden"><svg style="position:absolute;left:1px;top:1px" width="20" height="13"><path d="M1 2 H18 M1 11 H18 M1 2 L5 6.5 L1 11 M18 2 L14 6.5 L18 11 M5 6.5 L9.5 2 L14 6.5 L9.5 11 Z" stroke="#1818d8" stroke-width="1.4" fill="none"/></svg><div class="bl" style="left:24px;top:0;line-height:14.200000000000045px;font-size:9.00px;color:#3a3a3a">Eye Diagram</div></div>
<div style="left:349.6px;top:769.3px;width:78.0px;height:14.200000000000045px;background:linear-gradient(#fdfdfd,#f0f0f0 50%,#e4e4e4);overflow:hidden"><svg style="position:absolute;left:2px;top:0px" width="20" height="14"><rect x="1" y="0" width="17" height="1.5" fill="#888"/><rect x="1" y="12.5" width="17" height="1.5" fill="#888"/><path d="M1 3 H18 M1 11 H18 M2 3 L17 11 M17 3 L2 11" stroke="#1818d8" stroke-width="1.3" fill="none"/><ellipse cx="9.5" cy="7" rx="4" ry="1.6" fill="#8a8ad8"/></svg><div class="bl" style="left:24px;top:0;line-height:14.200000000000045px;font-size:9.00px;color:#3a3a3a">Mask Test</div></div>
<div style="left:746.3px;top:769.3px;width:78.40000000000009px;height:14.200000000000045px;background:linear-gradient(#fdfdfd,#f0f0f0 50%,#e4e4e4);overflow:hidden"><svg style="position:absolute;left:3px;top:0px" width="16" height="14"><path d="M2 13 L9 6" stroke="#1a50c8" stroke-width="3" stroke-linecap="round"/><path d="M8 2 A4 4 0 1 0 14 7 L11.5 7.5 L9.5 5 Z" fill="#1a50c8"/></svg><div class="bl" style="left:23px;top:0;line-height:14.200000000000045px;font-size:9.00px;color:#3a3a3a">Utility</div></div>
<div style="left:268.7px;top:753.7px;width:1px;height:29.8px;background:#8a8a8a"></div>
<div style="left:348.6px;top:753.7px;width:1px;height:29.8px;background:#8a8a8a"></div>
<div style="left:427.6px;top:753.7px;width:1px;height:29.8px;background:#8a8a8a"></div>
<div style="left:507.4px;top:753.7px;width:1px;height:29.8px;background:#8a8a8a"></div>
<div style="left:586.4px;top:753.7px;width:1px;height:29.8px;background:#8a8a8a"></div>
<div style="left:666.2px;top:753.7px;width:1px;height:29.8px;background:#8a8a8a"></div>
<div style="left:745.3px;top:753.7px;width:1px;height:29.8px;background:#8a8a8a"></div>
<div style="left:189.2px;top:768.1px;width:635.5px;height:1px;background:#8a8a8a"></div>
<div style="left:427.6px;top:769px;width:317.7px;height:14px;background:#ececec"></div>
<div style="left:427.6px;top:769px;width:1px;height:14.5px;background:#c8c8c8"></div>
<div style="left:507.4px;top:769px;width:1px;height:14.5px;background:#c8c8c8"></div>
<div style="left:586.4px;top:769px;width:1px;height:14.5px;background:#c8c8c8"></div>
<div style="left:666.2px;top:769px;width:1px;height:14.5px;background:#c8c8c8"></div>
<div style="left:745.3px;top:769px;width:1px;height:14.5px;background:#c8c8c8"></div>
<div style="left:427.6px;top:783px;width:318px;height:1px;background:#c8c8c8"></div>
<div style="left:189.8px;top:596px;width:635px;height:76px;border:1px solid #a0a0a0;border-radius:4px"></div>
<div style="left:195.7px;top:588.4px;width:34px;height:11.2px;border:1px solid #c8d8f0;border-radius:3px;background:linear-gradient(#6a9ae8,#3a70d8)"><div class="bl" style="left:0;width:100%;text-align:center;line-height:11.2px;font-size:9.60px;color:#fff">Scales</div></div>
<div style="left:720px;top:588px;width:22px;height:12px;border:1px solid #8a8a8a;border-radius:3px;background:#000"><div class="bl" style="left:0;width:100%;text-align:center;line-height:12px;font-size:9.30px;color:#f0f0f0">Auto</div></div>
<div style="left:746px;top:588px;width:21.5px;height:12px;border:1px solid #8a8a8a;border-radius:3px;background:#000"><div class="bl" style="left:0;width:100%;text-align:center;line-height:12px;font-size:9.30px;color:#f0f0f0">Max</div></div>
<div style="left:771.5px;top:588px;width:21.200000000000045px;height:12px;border:1px solid #a8c0e8;border-radius:3px;background:linear-gradient(#6f9cec,#4f80dc)"><div class="bl" style="left:0;width:100%;text-align:center;line-height:12px;font-size:9.30px;color:#f0f0f0">Mid</div></div>
<div style="left:797.3px;top:588px;width:21.40000000000009px;height:12px;border:1px solid #8a8a8a;border-radius:3px;background:#000"><div class="bl" style="left:0;width:100%;text-align:center;line-height:12px;font-size:9.30px;color:#f0f0f0">Min</div></div>
<div class="t" style="left:315.2px;top:605.5px;font-size:8.8px;font-weight:bold;color:#f0f0f0">Vertical Scale</div>
<div class="t" style="left:434.4px;top:605.5px;font-size:8.8px;font-weight:bold;color:#f0f0f0">Offset + Position</div>
<div class="t" style="left:553.2px;top:605.5px;font-size:8.8px;font-weight:bold;color:#f0f0f0">Horizontal Scale</div>
<div class="t" style="left:672.6px;top:605.5px;font-size:8.8px;font-weight:bold;color:#f0f0f0">Delay + Position</div>
<div class="t" style="left:193px;top:619.3px;font-size:8.8px;font-weight:bold;color:#f0e880">Channel 1</div>
<div class="t" style="left:315.2px;top:619.3px;font-size:8.8px;font-weight:bold;color:#f0e880">100 mV/div</div>
<div class="t" style="left:436.9px;top:619.3px;font-size:8.8px;font-weight:bold;color:#f0e880">0 V</div>
<div class="t" style="left:553.2px;top:619.3px;font-size:8.8px;font-weight:bold;color:#f0e880">100 ns/div</div>
<div class="t" style="left:672.6px;top:619.3px;font-size:8.8px;font-weight:bold;color:#f0e880">-500 ns</div>
<div class="t" style="left:193px;top:632.0px;font-size:8.8px;font-weight:bold;color:#f080c0">Channel 4</div>
<div class="t" style="left:315.2px;top:632.0px;font-size:8.8px;font-weight:bold;color:#f080c0">100 mV/div</div>
<div class="t" style="left:436.9px;top:632.0px;font-size:8.8px;font-weight:bold;color:#f080c0">0 V</div>
<div class="t" style="left:553.2px;top:632.0px;font-size:8.8px;font-weight:bold;color:#f080c0">100 ns/div</div>
<div class="t" style="left:672.6px;top:632.0px;font-size:8.8px;font-weight:bold;color:#f080c0">-500 ns</div>
<div class="t" style="left:193px;top:644.6999999999999px;font-size:8.8px;font-weight:bold;color:#f0f000">Function 1</div>
<div class="t" style="left:315.2px;top:644.6999999999999px;font-size:8.8px;font-weight:bold;color:#f0f000">20 nV*s/div</div>
<div class="t" style="left:436.9px;top:644.6999999999999px;font-size:8.8px;font-weight:bold;color:#f0f000">0 V*s</div>
<div class="t" style="left:553.2px;top:644.6999999999999px;font-size:8.8px;font-weight:bold;color:#f0f000">100 ns/div</div>
<div class="t" style="left:672.6px;top:644.6999999999999px;font-size:8.8px;font-weight:bold;color:#f0f000">-500 ns</div>
<div class="t" style="left:193px;top:657.4px;font-size:8.8px;font-weight:bold;color:#10e0e0">Function 2</div>
<div class="t" style="left:315.2px;top:657.4px;font-size:8.8px;font-weight:bold;color:#10e0e0">5 MV/ s/div</div>
<div class="t" style="left:436.9px;top:657.4px;font-size:8.8px;font-weight:bold;color:#10e0e0">0 V/ s</div>
<div class="t" style="left:553.2px;top:657.4px;font-size:8.8px;font-weight:bold;color:#10e0e0">100 ns/div</div>
<div class="t" style="left:672.6px;top:657.4px;font-size:8.8px;font-weight:bold;color:#10e0e0">-500 ns</div>
</body></html>
